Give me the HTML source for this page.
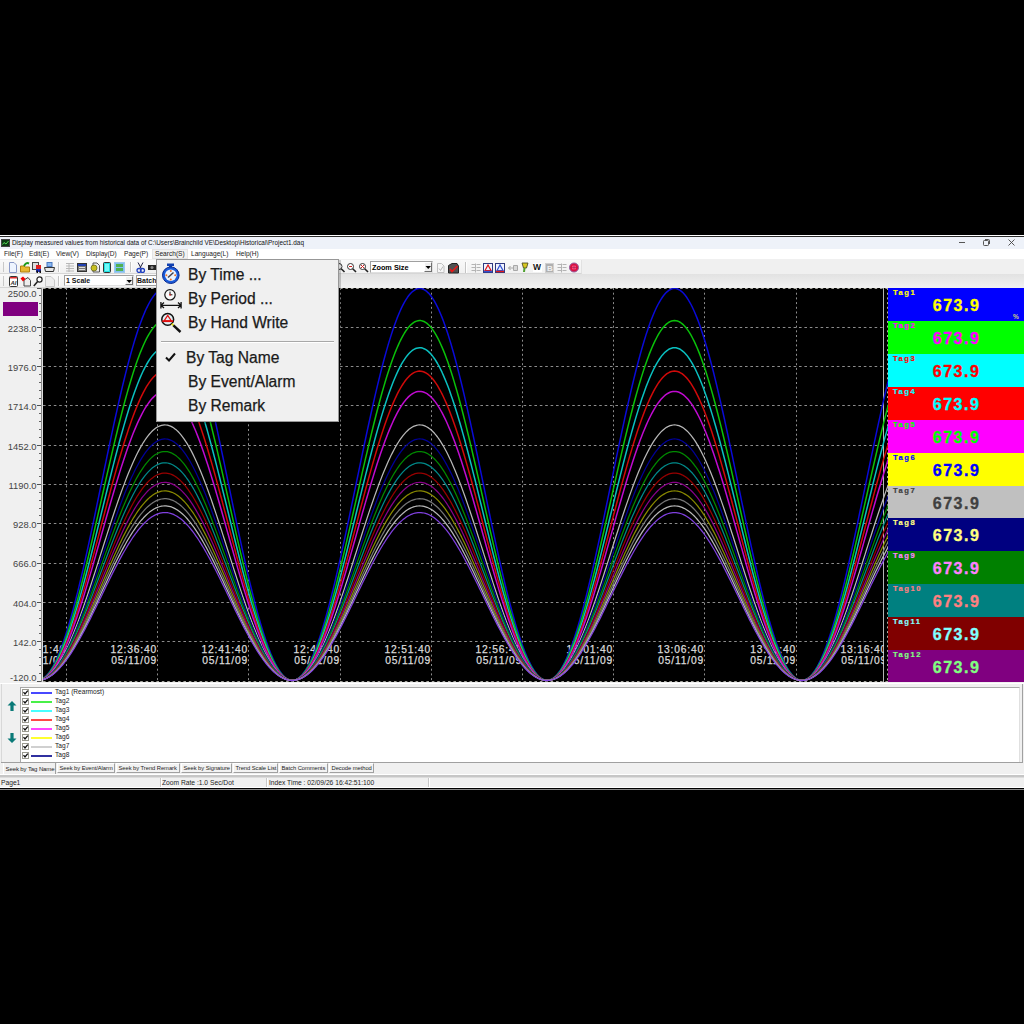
<!DOCTYPE html><html><head><meta charset="utf-8"><style>html,body{margin:0;padding:0}body{width:1024px;height:1024px;background:#000;position:relative;overflow:hidden;font-family:"Liberation Sans", sans-serif}</style></head><body><div style="position:absolute;left:0px;top:235px;width:1024px;height:1px;background:#fff"></div><div style="position:absolute;left:0px;top:236px;width:1024px;height:1px;background:#2a2a2a"></div><div style="position:absolute;left:0px;top:237px;width:1024px;height:12px;background:#eef2f9"></div><div style="position:absolute;left:0px;top:249px;width:1024px;height:10px;background:#fff"></div><div style="position:absolute;left:0px;top:259px;width:1024px;height:29px;background:#f0f0f0"></div><svg style="position:absolute;left:1px;top:239px" width="9" height="8"><rect x="0.5" y="0.5" width="8" height="7" fill="#0a3a12" stroke="#444"/><polyline points="1.5,5.5 3,3.5 5,5 7.5,2" fill="none" stroke="#6f6" stroke-width="0.8"/></svg><div style="position:absolute;left:12px;top:239.5px;font-size:6.4px;line-height:1;color:#111;white-space:nowrap;">Display measured values from historical data of C:\Users\Brainchild VE\Desktop\Historical\Project1.daq</div><div style="position:absolute;left:959px;top:242px;width:6px;height:1px;background:#555"></div><svg style="position:absolute;left:982px;top:238px" width="9" height="9"><rect x="1.5" y="2.5" width="5" height="5" rx="0.8" fill="none" stroke="#555" stroke-width="1"/><path d="M3 1.5 H6.5 Q7.5 1.5 7.5 2.5 V6" fill="none" stroke="#555" stroke-width="1"/></svg><svg style="position:absolute;left:1007px;top:238px" width="9" height="9"><path d="M1.5 1.5 L7.5 7.5 M7.5 1.5 L1.5 7.5" stroke="#444" stroke-width="0.9"/></svg><div style="position:absolute;left:152px;top:249px;width:36px;height:10px;background:#f2f2f2;box-sizing:border-box;border:1px solid #e4e4e4"></div><div style="position:absolute;left:4px;top:251px;font-size:6.6px;line-height:1;color:#222;white-space:nowrap;">File(F)</div><div style="position:absolute;left:29px;top:251px;font-size:6.6px;line-height:1;color:#222;white-space:nowrap;">Edit(E)</div><div style="position:absolute;left:56px;top:251px;font-size:6.6px;line-height:1;color:#222;white-space:nowrap;">View(V)</div><div style="position:absolute;left:86px;top:251px;font-size:6.6px;line-height:1;color:#222;white-space:nowrap;">Display(D)</div><div style="position:absolute;left:124px;top:251px;font-size:6.6px;line-height:1;color:#222;white-space:nowrap;">Page(P)</div><div style="position:absolute;left:155px;top:251px;font-size:6.6px;line-height:1;color:#222;white-space:nowrap;">Search(S)</div><div style="position:absolute;left:191px;top:251px;font-size:6.6px;line-height:1;color:#222;white-space:nowrap;">Language(L)</div><div style="position:absolute;left:236px;top:251px;font-size:6.6px;line-height:1;color:#222;white-space:nowrap;">Help(H)</div><div style="position:absolute;left:0px;top:288px;width:43px;height:395px;background:#f0f0f0"></div><div style="position:absolute;left:43px;top:288px;width:845px;height:394px;background:#000"></div><div style="position:absolute;left:884px;top:288px;width:4px;height:394px;background:#000"></div><svg style="position:absolute;left:0;top:0" width="1024" height="1024" viewBox="0 0 1024 1024"><defs><clipPath id="cc"><rect x="43" y="288" width="845" height="394"/></clipPath><clipPath id="ct"><rect x="43" y="288" width="841" height="394"/></clipPath></defs><line x1="43" y1="288.5" x2="888" y2="288.5" stroke="#a8a8a0" stroke-width="1" stroke-dasharray="2.6 2.8"/><line x1="43" y1="327.5" x2="884" y2="327.5" stroke="#8c8c8c" stroke-width="1" stroke-dasharray="2.6 2.8"/><line x1="43" y1="366.5" x2="884" y2="366.5" stroke="#8c8c8c" stroke-width="1" stroke-dasharray="2.6 2.8"/><line x1="43" y1="405.5" x2="884" y2="405.5" stroke="#8c8c8c" stroke-width="1" stroke-dasharray="2.6 2.8"/><line x1="43" y1="445.5" x2="884" y2="445.5" stroke="#8c8c8c" stroke-width="1" stroke-dasharray="2.6 2.8"/><line x1="43" y1="484.5" x2="884" y2="484.5" stroke="#8c8c8c" stroke-width="1" stroke-dasharray="2.6 2.8"/><line x1="43" y1="523.5" x2="884" y2="523.5" stroke="#8c8c8c" stroke-width="1" stroke-dasharray="2.6 2.8"/><line x1="43" y1="563.5" x2="884" y2="563.5" stroke="#8c8c8c" stroke-width="1" stroke-dasharray="2.6 2.8"/><line x1="43" y1="602.5" x2="884" y2="602.5" stroke="#8c8c8c" stroke-width="1" stroke-dasharray="2.6 2.8"/><line x1="43" y1="641.5" x2="884" y2="641.5" stroke="#8c8c8c" stroke-width="1" stroke-dasharray="2.6 2.8"/><line x1="43" y1="681.5" x2="888" y2="681.5" stroke="#a8a8a0" stroke-width="1" stroke-dasharray="2.6 2.8"/><line x1="66.5" y1="288" x2="66.5" y2="682" stroke="#8c8c8c" stroke-width="1" stroke-dasharray="2 2.7"/><line x1="157.5" y1="288" x2="157.5" y2="682" stroke="#8c8c8c" stroke-width="1" stroke-dasharray="2 2.7"/><line x1="248.5" y1="288" x2="248.5" y2="682" stroke="#8c8c8c" stroke-width="1" stroke-dasharray="2 2.7"/><line x1="340.5" y1="288" x2="340.5" y2="682" stroke="#8c8c8c" stroke-width="1" stroke-dasharray="2 2.7"/><line x1="431.5" y1="288" x2="431.5" y2="682" stroke="#8c8c8c" stroke-width="1" stroke-dasharray="2 2.7"/><line x1="522.5" y1="288" x2="522.5" y2="682" stroke="#8c8c8c" stroke-width="1" stroke-dasharray="2 2.7"/><line x1="613.5" y1="288" x2="613.5" y2="682" stroke="#8c8c8c" stroke-width="1" stroke-dasharray="2 2.7"/><line x1="704.5" y1="288" x2="704.5" y2="682" stroke="#8c8c8c" stroke-width="1" stroke-dasharray="2 2.7"/><line x1="796.5" y1="288" x2="796.5" y2="682" stroke="#8c8c8c" stroke-width="1" stroke-dasharray="2 2.7"/><line x1="887.5" y1="288" x2="887.5" y2="682" stroke="#b0b0a0" stroke-width="1" stroke-dasharray="2 2.7"/><line x1="883.5" y1="288" x2="883.5" y2="682" stroke="#b4b4b4" stroke-width="1"/><line x1="41.5" y1="288" x2="41.5" y2="682" stroke="#8a8a8a" stroke-width="1"/><line x1="42.5" y1="288" x2="42.5" y2="682" stroke="#e0e0e0" stroke-width="1"/><line x1="37" y1="288.5" x2="41" y2="288.5" stroke="#505050" stroke-width="1"/><line x1="39" y1="295.5" x2="41" y2="295.5" stroke="#606060" stroke-width="1"/><line x1="39" y1="303.5" x2="41" y2="303.5" stroke="#606060" stroke-width="1"/><line x1="39" y1="311.5" x2="41" y2="311.5" stroke="#606060" stroke-width="1"/><line x1="39" y1="319.5" x2="41" y2="319.5" stroke="#606060" stroke-width="1"/><line x1="37" y1="327.5" x2="41" y2="327.5" stroke="#505050" stroke-width="1"/><line x1="39" y1="335.5" x2="41" y2="335.5" stroke="#606060" stroke-width="1"/><line x1="39" y1="343.5" x2="41" y2="343.5" stroke="#606060" stroke-width="1"/><line x1="39" y1="350.5" x2="41" y2="350.5" stroke="#606060" stroke-width="1"/><line x1="39" y1="358.5" x2="41" y2="358.5" stroke="#606060" stroke-width="1"/><line x1="37" y1="366.5" x2="41" y2="366.5" stroke="#505050" stroke-width="1"/><line x1="39" y1="374.5" x2="41" y2="374.5" stroke="#606060" stroke-width="1"/><line x1="39" y1="382.5" x2="41" y2="382.5" stroke="#606060" stroke-width="1"/><line x1="39" y1="390.5" x2="41" y2="390.5" stroke="#606060" stroke-width="1"/><line x1="39" y1="398.5" x2="41" y2="398.5" stroke="#606060" stroke-width="1"/><line x1="37" y1="405.5" x2="41" y2="405.5" stroke="#505050" stroke-width="1"/><line x1="39" y1="413.5" x2="41" y2="413.5" stroke="#606060" stroke-width="1"/><line x1="39" y1="421.5" x2="41" y2="421.5" stroke="#606060" stroke-width="1"/><line x1="39" y1="429.5" x2="41" y2="429.5" stroke="#606060" stroke-width="1"/><line x1="39" y1="437.5" x2="41" y2="437.5" stroke="#606060" stroke-width="1"/><line x1="37" y1="445.5" x2="41" y2="445.5" stroke="#505050" stroke-width="1"/><line x1="39" y1="453.5" x2="41" y2="453.5" stroke="#606060" stroke-width="1"/><line x1="39" y1="460.5" x2="41" y2="460.5" stroke="#606060" stroke-width="1"/><line x1="39" y1="468.5" x2="41" y2="468.5" stroke="#606060" stroke-width="1"/><line x1="39" y1="476.5" x2="41" y2="476.5" stroke="#606060" stroke-width="1"/><line x1="37" y1="484.5" x2="41" y2="484.5" stroke="#505050" stroke-width="1"/><line x1="39" y1="492.5" x2="41" y2="492.5" stroke="#606060" stroke-width="1"/><line x1="39" y1="500.5" x2="41" y2="500.5" stroke="#606060" stroke-width="1"/><line x1="39" y1="508.5" x2="41" y2="508.5" stroke="#606060" stroke-width="1"/><line x1="39" y1="515.5" x2="41" y2="515.5" stroke="#606060" stroke-width="1"/><line x1="37" y1="523.5" x2="41" y2="523.5" stroke="#505050" stroke-width="1"/><line x1="39" y1="531.5" x2="41" y2="531.5" stroke="#606060" stroke-width="1"/><line x1="39" y1="539.5" x2="41" y2="539.5" stroke="#606060" stroke-width="1"/><line x1="39" y1="547.5" x2="41" y2="547.5" stroke="#606060" stroke-width="1"/><line x1="39" y1="555.5" x2="41" y2="555.5" stroke="#606060" stroke-width="1"/><line x1="37" y1="563.5" x2="41" y2="563.5" stroke="#505050" stroke-width="1"/><line x1="39" y1="570.5" x2="41" y2="570.5" stroke="#606060" stroke-width="1"/><line x1="39" y1="578.5" x2="41" y2="578.5" stroke="#606060" stroke-width="1"/><line x1="39" y1="586.5" x2="41" y2="586.5" stroke="#606060" stroke-width="1"/><line x1="39" y1="594.5" x2="41" y2="594.5" stroke="#606060" stroke-width="1"/><line x1="37" y1="602.5" x2="41" y2="602.5" stroke="#505050" stroke-width="1"/><line x1="39" y1="610.5" x2="41" y2="610.5" stroke="#606060" stroke-width="1"/><line x1="39" y1="618.5" x2="41" y2="618.5" stroke="#606060" stroke-width="1"/><line x1="39" y1="625.5" x2="41" y2="625.5" stroke="#606060" stroke-width="1"/><line x1="39" y1="633.5" x2="41" y2="633.5" stroke="#606060" stroke-width="1"/><line x1="37" y1="641.5" x2="41" y2="641.5" stroke="#505050" stroke-width="1"/><line x1="39" y1="649.5" x2="41" y2="649.5" stroke="#606060" stroke-width="1"/><line x1="39" y1="657.5" x2="41" y2="657.5" stroke="#606060" stroke-width="1"/><line x1="39" y1="665.5" x2="41" y2="665.5" stroke="#606060" stroke-width="1"/><line x1="39" y1="673.5" x2="41" y2="673.5" stroke="#606060" stroke-width="1"/><line x1="37" y1="681.5" x2="41" y2="681.5" stroke="#505050" stroke-width="1"/><g clip-path="url(#ct)" font-family="Liberation Sans, sans-serif" font-size="10.3" fill="#dcdcdc" stroke="#dcdcdc" stroke-width="0.25" text-anchor="end" letter-spacing="0.8"><text x="66" y="652.8">12:31:40</text><text x="66" y="663.5">05/11/09</text><text x="157" y="652.8">12:36:40</text><text x="157" y="663.5">05/11/09</text><text x="248" y="652.8">12:41:40</text><text x="248" y="663.5">05/11/09</text><text x="340" y="652.8">12:46:40</text><text x="340" y="663.5">05/11/09</text><text x="431" y="652.8">12:51:40</text><text x="431" y="663.5">05/11/09</text><text x="522" y="652.8">12:56:40</text><text x="522" y="663.5">05/11/09</text><text x="613" y="652.8">13:01:40</text><text x="613" y="663.5">05/11/09</text><text x="704" y="652.8">13:06:40</text><text x="704" y="663.5">05/11/09</text><text x="796" y="652.8">13:11:40</text><text x="796" y="663.5">05/11/09</text><text x="887" y="652.8">13:16:40</text><text x="887" y="663.5">05/11/09</text></g><g clip-path="url(#cc)" fill="none" stroke-width="1.6" stroke-linejoin="round"><polyline stroke="#0a0ad8" stroke-width="1.5" points="40.0,680.0 41.5,679.4 43.0,678.6 44.5,677.5 46.0,676.1 47.5,674.5 49.0,672.6 50.5,670.4 52.0,668.0 53.5,665.3 55.0,662.4 56.5,659.3 58.0,655.9 59.5,652.3 61.0,648.4 62.5,644.3 64.0,640.0 65.5,635.5 67.0,630.8 68.5,625.9 70.0,620.8 71.5,615.5 73.0,610.0 74.5,604.3 76.0,598.5 77.5,592.6 79.0,586.4 80.5,580.2 82.0,573.8 83.5,567.3 85.0,560.7 86.5,553.9 88.0,547.1 89.5,540.2 91.0,533.2 92.5,526.2 94.0,519.1 95.5,511.9 97.0,504.7 98.5,497.5 100.0,490.2 101.5,483.0 103.0,475.8 104.5,468.5 106.0,461.3 107.5,454.1 109.0,447.0 110.5,439.9 112.0,432.9 113.5,425.9 115.0,419.0 116.5,412.3 118.0,405.6 119.5,399.0 121.0,392.5 122.5,386.2 124.0,380.0 125.5,373.9 127.0,368.0 128.5,362.3 130.0,356.7 131.5,351.3 133.0,346.1 134.5,341.0 136.0,336.2 137.5,331.6 139.0,327.1 140.5,322.9 142.0,318.9 143.5,315.2 145.0,311.6 146.5,308.3 148.0,305.3 149.5,302.5 151.0,299.9 152.5,297.6 154.0,295.5 155.5,293.7 157.0,292.2 158.5,290.9 160.0,289.9 161.5,289.2 163.0,288.7 164.5,288.5 166.0,288.6 167.5,288.9 169.0,289.5 170.5,290.4 172.0,291.5 173.5,292.9 175.0,294.5 176.5,296.5 178.0,298.6 179.5,301.1 181.0,303.7 182.5,306.7 184.0,309.8 185.5,313.2 187.0,316.9 188.5,320.8 190.0,324.9 191.5,329.2 193.0,333.7 194.5,338.4 196.0,343.4 197.5,348.5 199.0,353.8 200.5,359.3 202.0,364.9 203.5,370.8 205.0,376.7 206.5,382.9 208.0,389.1 209.5,395.5 211.0,402.1 212.5,408.7 214.0,415.4 215.5,422.2 217.0,429.2 218.5,436.1 220.0,443.2 221.5,450.3 223.0,457.5 224.5,464.7 226.0,471.9 227.5,479.1 229.0,486.4 230.5,493.6 232.0,500.9 233.5,508.1 235.0,515.2 236.5,522.4 238.0,529.5 239.5,536.5 241.0,543.4 242.5,550.3 244.0,557.1 245.5,563.8 247.0,570.3 248.5,576.8 250.0,583.1 251.5,589.3 253.0,595.4 254.5,601.3 256.0,607.0 257.5,612.6 259.0,618.0 260.5,623.2 262.0,628.2 263.5,633.0 265.0,637.6 266.5,642.1 268.0,646.3 269.5,650.2 271.0,654.0 272.5,657.5 274.0,660.8 275.5,663.8 277.0,666.6 278.5,669.2 280.0,671.5 281.5,673.5 283.0,675.3 284.5,676.8 286.0,678.0 287.5,679.0 289.0,679.8 290.5,680.2 292.0,680.4 293.5,680.3 295.0,680.0 296.5,679.4 298.0,678.5 299.5,677.3 301.0,675.9 302.5,674.2 304.0,672.3 305.5,670.1 307.0,667.7 308.5,665.0 310.0,662.0 311.5,658.8 313.0,655.4 314.5,651.8 316.0,647.9 317.5,643.8 319.0,639.4 320.5,634.9 322.0,630.2 323.5,625.2 325.0,620.1 326.5,614.8 328.0,609.2 329.5,603.6 331.0,597.7 332.5,591.8 334.0,585.6 335.5,579.3 337.0,572.9 338.5,566.4 340.0,559.8 341.5,553.0 343.0,546.2 344.5,539.3 346.0,532.3 347.5,525.2 349.0,518.1 350.5,510.9 352.0,503.7 353.5,496.5 355.0,489.3 356.5,482.0 358.0,474.8 359.5,467.6 361.0,460.4 362.5,453.2 364.0,446.0 365.5,439.0 367.0,431.9 368.5,425.0 370.0,418.1 371.5,411.4 373.0,404.7 374.5,398.1 376.0,391.7 377.5,385.4 379.0,379.2 380.5,373.1 382.0,367.3 383.5,361.5 385.0,356.0 386.5,350.6 388.0,345.4 389.5,340.4 391.0,335.6 392.5,330.9 394.0,326.6 395.5,322.4 397.0,318.4 398.5,314.7 400.0,311.2 401.5,307.9 403.0,304.9 404.5,302.1 406.0,299.6 407.5,297.3 409.0,295.3 410.5,293.5 412.0,292.0 413.5,290.8 415.0,289.8 416.5,289.1 418.0,288.7 419.5,288.5 421.0,288.6 422.5,289.0 424.0,289.6 425.5,290.5 427.0,291.7 428.5,293.1 430.0,294.8 431.5,296.7 433.0,298.9 434.5,301.4 436.0,304.1 437.5,307.1 439.0,310.3 440.5,313.7 442.0,317.4 443.5,321.3 445.0,325.4 446.5,329.8 448.0,334.3 449.5,339.1 451.0,344.0 452.5,349.2 454.0,354.5 455.5,360.0 457.0,365.7 458.5,371.6 460.0,377.6 461.5,383.7 463.0,390.0 464.5,396.4 466.0,402.9 467.5,409.6 469.0,416.3 470.5,423.2 472.0,430.1 473.5,437.1 475.0,444.2 476.5,451.3 478.0,458.4 479.5,465.6 481.0,472.9 482.5,480.1 484.0,487.3 485.5,494.6 487.0,501.8 488.5,509.0 490.0,516.2 491.5,523.3 493.0,530.4 494.5,537.4 496.0,544.4 497.5,551.2 499.0,558.0 500.5,564.7 502.0,571.2 503.5,577.6 505.0,584.0 506.5,590.1 508.0,596.2 509.5,602.0 511.0,607.8 512.5,613.3 514.0,618.7 515.5,623.9 517.0,628.9 518.5,633.7 520.0,638.3 521.5,642.6 523.0,646.8 524.5,650.8 526.0,654.5 527.5,658.0 529.0,661.2 530.5,664.2 532.0,667.0 533.5,669.5 535.0,671.7 536.5,673.7 538.0,675.5 539.5,677.0 541.0,678.2 542.5,679.1 544.0,679.8 545.5,680.2 547.0,680.4 548.5,680.3 550.0,679.9 551.5,679.2 553.0,678.3 554.5,677.1 556.0,675.7 557.5,674.0 559.0,672.0 560.5,669.8 562.0,667.3 563.5,664.6 565.0,661.6 566.5,658.4 568.0,654.9 569.5,651.3 571.0,647.3 572.5,643.2 574.0,638.8 575.5,634.3 577.0,629.5 578.5,624.5 580.0,619.4 581.5,614.0 583.0,608.5 584.5,602.8 586.0,597.0 587.5,590.9 589.0,584.8 590.5,578.5 592.0,572.1 593.5,565.5 595.0,558.9 596.5,552.1 598.0,545.3 599.5,538.3 601.0,531.3 602.5,524.3 604.0,517.2 605.5,510.0 607.0,502.8 608.5,495.6 610.0,488.3 611.5,481.1 613.0,473.8 614.5,466.6 616.0,459.4 617.5,452.2 619.0,445.1 620.5,438.0 622.0,431.0 623.5,424.1 625.0,417.2 626.5,410.5 628.0,403.8 629.5,397.3 631.0,390.8 632.5,384.5 634.0,378.4 635.5,372.3 637.0,366.5 638.5,360.8 640.0,355.2 641.5,349.9 643.0,344.7 644.5,339.7 646.0,334.9 647.5,330.4 649.0,326.0 650.5,321.8 652.0,317.9 653.5,314.2 655.0,310.7 656.5,307.5 658.0,304.5 659.5,301.8 661.0,299.3 662.5,297.0 664.0,295.0 665.5,293.3 667.0,291.8 668.5,290.6 670.0,289.7 671.5,289.0 673.0,288.6 674.5,288.5 676.0,288.6 677.5,289.0 679.0,289.7 680.5,290.6 682.0,291.8 683.5,293.3 685.0,295.0 686.5,297.0 688.0,299.3 689.5,301.8 691.0,304.5 692.5,307.5 694.0,310.7 695.5,314.2 697.0,317.9 698.5,321.8 700.0,326.0 701.5,330.4 703.0,334.9 704.5,339.7 706.0,344.7 707.5,349.9 709.0,355.2 710.5,360.8 712.0,366.5 713.5,372.3 715.0,378.4 716.5,384.5 718.0,390.8 719.5,397.3 721.0,403.8 722.5,410.5 724.0,417.2 725.5,424.1 727.0,431.0 728.5,438.0 730.0,445.1 731.5,452.2 733.0,459.4 734.5,466.6 736.0,473.8 737.5,481.1 739.0,488.3 740.5,495.6 742.0,502.8 743.5,510.0 745.0,517.2 746.5,524.3 748.0,531.3 749.5,538.3 751.0,545.3 752.5,552.1 754.0,558.9 755.5,565.5 757.0,572.1 758.5,578.5 760.0,584.8 761.5,590.9 763.0,597.0 764.5,602.8 766.0,608.5 767.5,614.0 769.0,619.4 770.5,624.5 772.0,629.5 773.5,634.3 775.0,638.8 776.5,643.2 778.0,647.3 779.5,651.3 781.0,654.9 782.5,658.4 784.0,661.6 785.5,664.6 787.0,667.3 788.5,669.8 790.0,672.0 791.5,674.0 793.0,675.7 794.5,677.1 796.0,678.3 797.5,679.2 799.0,679.9 800.5,680.3 802.0,680.4 803.5,680.2 805.0,679.8 806.5,679.1 808.0,678.2 809.5,677.0 811.0,675.5 812.5,673.7 814.0,671.7 815.5,669.5 817.0,667.0 818.5,664.2 820.0,661.2 821.5,658.0 823.0,654.5 824.5,650.8 826.0,646.8 827.5,642.6 829.0,638.3 830.5,633.7 832.0,628.9 833.5,623.9 835.0,618.7 836.5,613.3 838.0,607.8 839.5,602.0 841.0,596.2 842.5,590.1 844.0,584.0 845.5,577.6 847.0,571.2 848.5,564.7 850.0,558.0 851.5,551.2 853.0,544.4 854.5,537.4 856.0,530.4 857.5,523.3 859.0,516.2 860.5,509.0 862.0,501.8 863.5,494.6 865.0,487.3 866.5,480.1 868.0,472.9 869.5,465.6 871.0,458.4 872.5,451.3 874.0,444.2 875.5,437.1 877.0,430.1 878.5,423.2 880.0,416.3 881.5,409.6 883.0,402.9 884.5,396.4 886.0,390.0 887.5,383.7 889.0,377.6"/><polyline stroke="#0ac00a" stroke-width="1.5" points="40.0,680.1 41.5,679.5 43.0,678.7 44.5,677.7 46.0,676.5 47.5,675.0 49.0,673.2 50.5,671.2 52.0,669.0 53.5,666.6 55.0,663.9 56.5,661.0 58.0,657.9 59.5,654.6 61.0,651.0 62.5,647.3 64.0,643.3 65.5,639.2 67.0,634.9 68.5,630.3 70.0,625.6 71.5,620.8 73.0,615.7 74.5,610.6 76.0,605.2 77.5,599.7 79.0,594.1 80.5,588.4 82.0,582.5 83.5,576.5 85.0,570.4 86.5,564.3 88.0,558.0 89.5,551.7 91.0,545.2 92.5,538.8 94.0,532.2 95.5,525.7 97.0,519.1 98.5,512.4 100.0,505.8 101.5,499.1 103.0,492.5 104.5,485.8 106.0,479.2 107.5,472.6 109.0,466.1 110.5,459.6 112.0,453.1 113.5,446.7 115.0,440.4 116.5,434.2 118.0,428.0 119.5,422.0 121.0,416.1 122.5,410.2 124.0,404.5 125.5,399.0 127.0,393.6 128.5,388.3 130.0,383.2 131.5,378.2 133.0,373.4 134.5,368.8 136.0,364.3 137.5,360.1 139.0,356.0 140.5,352.1 142.0,348.5 143.5,345.0 145.0,341.8 146.5,338.7 148.0,335.9 149.5,333.3 151.0,331.0 152.5,328.9 154.0,327.0 155.5,325.3 157.0,323.9 158.5,322.8 160.0,321.8 161.5,321.2 163.0,320.7 164.5,320.5 166.0,320.6 167.5,320.9 169.0,321.4 170.5,322.2 172.0,323.3 173.5,324.6 175.0,326.1 176.5,327.8 178.0,329.8 179.5,332.1 181.0,334.5 182.5,337.2 184.0,340.1 185.5,343.2 187.0,346.6 188.5,350.1 190.0,353.9 191.5,357.9 193.0,362.0 194.5,366.4 196.0,370.9 197.5,375.6 199.0,380.5 200.5,385.5 202.0,390.7 203.5,396.1 205.0,401.6 206.5,407.2 208.0,412.9 209.5,418.8 211.0,424.8 212.5,430.9 214.0,437.1 215.5,443.3 217.0,449.7 218.5,456.1 220.0,462.6 221.5,469.1 223.0,475.7 224.5,482.3 226.0,488.9 227.5,495.6 229.0,502.2 230.5,508.9 232.0,515.5 233.5,522.2 235.0,528.7 236.5,535.3 238.0,541.8 239.5,548.2 241.0,554.6 242.5,560.9 244.0,567.2 245.5,573.3 247.0,579.3 248.5,585.3 250.0,591.1 251.5,596.8 253.0,602.3 254.5,607.7 256.0,613.0 257.5,618.1 259.0,623.1 260.5,627.9 262.0,632.5 263.5,636.9 265.0,641.1 266.5,645.2 268.0,649.1 269.5,652.7 271.0,656.1 272.5,659.4 274.0,662.4 275.5,665.2 277.0,667.7 278.5,670.1 280.0,672.2 281.5,674.1 283.0,675.7 284.5,677.1 286.0,678.2 287.5,679.1 289.0,679.8 290.5,680.2 292.0,680.4 293.5,680.3 295.0,680.0 296.5,679.4 298.0,678.6 299.5,677.6 301.0,676.3 302.5,674.7 304.0,673.0 305.5,671.0 307.0,668.7 308.5,666.2 310.0,663.5 311.5,660.6 313.0,657.5 314.5,654.1 316.0,650.5 317.5,646.8 319.0,642.8 320.5,638.6 322.0,634.3 323.5,629.7 325.0,625.0 326.5,620.1 328.0,615.1 329.5,609.9 331.0,604.5 332.5,599.0 334.0,593.4 335.5,587.6 337.0,581.7 338.5,575.7 340.0,569.6 341.5,563.4 343.0,557.2 344.5,550.8 346.0,544.4 347.5,537.9 349.0,531.4 350.5,524.8 352.0,518.2 353.5,511.5 355.0,504.9 356.5,498.2 358.0,491.6 359.5,485.0 361.0,478.3 362.5,471.7 364.0,465.2 365.5,458.7 367.0,452.3 368.5,445.9 370.0,439.6 371.5,433.4 373.0,427.2 374.5,421.2 376.0,415.3 377.5,409.5 379.0,403.8 380.5,398.2 382.0,392.8 383.5,387.6 385.0,382.5 386.5,377.5 388.0,372.8 389.5,368.2 391.0,363.7 392.5,359.5 394.0,355.5 395.5,351.6 397.0,348.0 398.5,344.6 400.0,341.3 401.5,338.3 403.0,335.6 404.5,333.0 406.0,330.7 407.5,328.6 409.0,326.8 410.5,325.1 412.0,323.8 413.5,322.6 415.0,321.7 416.5,321.1 418.0,320.7 419.5,320.5 421.0,320.6 422.5,321.0 424.0,321.5 425.5,322.4 427.0,323.4 428.5,324.7 430.0,326.3 431.5,328.1 433.0,330.1 434.5,332.4 436.0,334.9 437.5,337.6 439.0,340.5 440.5,343.7 442.0,347.1 443.5,350.6 445.0,354.4 446.5,358.4 448.0,362.6 449.5,367.0 451.0,371.5 452.5,376.2 454.0,381.1 455.5,386.2 457.0,391.4 458.5,396.8 460.0,402.3 461.5,407.9 463.0,413.7 464.5,419.6 466.0,425.6 467.5,431.7 469.0,437.9 470.5,444.2 472.0,450.5 473.5,457.0 475.0,463.5 476.5,470.0 478.0,476.6 479.5,483.2 481.0,489.8 482.5,496.5 484.0,503.1 485.5,509.8 487.0,516.4 488.5,523.0 490.0,529.6 491.5,536.2 493.0,542.7 494.5,549.1 496.0,555.5 497.5,561.8 499.0,568.0 500.5,574.1 502.0,580.1 503.5,586.0 505.0,591.8 506.5,597.5 508.0,603.0 509.5,608.4 511.0,613.7 512.5,618.8 514.0,623.7 515.5,628.5 517.0,633.1 518.5,637.5 520.0,641.7 521.5,645.7 523.0,649.5 524.5,653.2 526.0,656.6 527.5,659.8 529.0,662.8 530.5,665.5 532.0,668.1 533.5,670.4 535.0,672.4 536.5,674.3 538.0,675.9 539.5,677.2 541.0,678.4 542.5,679.2 544.0,679.9 545.5,680.3 547.0,680.4 548.5,680.3 550.0,679.9 551.5,679.3 553.0,678.5 554.5,677.4 556.0,676.1 557.5,674.5 559.0,672.7 560.5,670.7 562.0,668.4 563.5,665.9 565.0,663.2 566.5,660.2 568.0,657.0 569.5,653.6 571.0,650.0 572.5,646.2 574.0,642.2 575.5,638.0 577.0,633.7 578.5,629.1 580.0,624.4 581.5,619.5 583.0,614.4 584.5,609.1 586.0,603.8 587.5,598.3 589.0,592.6 590.5,586.8 592.0,580.9 593.5,574.9 595.0,568.8 596.5,562.6 598.0,556.3 599.5,550.0 601.0,543.5 602.5,537.0 604.0,530.5 605.5,523.9 607.0,517.3 608.5,510.7 610.0,504.0 611.5,497.4 613.0,490.7 614.5,484.1 616.0,477.5 617.5,470.9 619.0,464.3 620.5,457.8 622.0,451.4 623.5,445.0 625.0,438.7 626.5,432.5 628.0,426.4 629.5,420.4 631.0,414.5 632.5,408.7 634.0,403.0 635.5,397.5 637.0,392.1 638.5,386.9 640.0,381.8 641.5,376.9 643.0,372.1 644.5,367.6 646.0,363.2 647.5,359.0 649.0,354.9 650.5,351.1 652.0,347.5 653.5,344.1 655.0,340.9 656.5,338.0 658.0,335.2 659.5,332.7 661.0,330.4 662.5,328.3 664.0,326.5 665.5,324.9 667.0,323.6 668.5,322.5 670.0,321.6 671.5,321.0 673.0,320.7 674.5,320.5 676.0,320.7 677.5,321.0 679.0,321.6 680.5,322.5 682.0,323.6 683.5,324.9 685.0,326.5 686.5,328.3 688.0,330.4 689.5,332.7 691.0,335.2 692.5,338.0 694.0,340.9 695.5,344.1 697.0,347.5 698.5,351.1 700.0,354.9 701.5,359.0 703.0,363.2 704.5,367.6 706.0,372.1 707.5,376.9 709.0,381.8 710.5,386.9 712.0,392.1 713.5,397.5 715.0,403.0 716.5,408.7 718.0,414.5 719.5,420.4 721.0,426.4 722.5,432.5 724.0,438.7 725.5,445.0 727.0,451.4 728.5,457.8 730.0,464.3 731.5,470.9 733.0,477.5 734.5,484.1 736.0,490.7 737.5,497.4 739.0,504.0 740.5,510.7 742.0,517.3 743.5,523.9 745.0,530.5 746.5,537.0 748.0,543.5 749.5,550.0 751.0,556.3 752.5,562.6 754.0,568.8 755.5,574.9 757.0,580.9 758.5,586.8 760.0,592.6 761.5,598.3 763.0,603.8 764.5,609.1 766.0,614.4 767.5,619.5 769.0,624.4 770.5,629.1 772.0,633.7 773.5,638.0 775.0,642.2 776.5,646.2 778.0,650.0 779.5,653.6 781.0,657.0 782.5,660.2 784.0,663.2 785.5,665.9 787.0,668.4 788.5,670.7 790.0,672.7 791.5,674.5 793.0,676.1 794.5,677.4 796.0,678.5 797.5,679.3 799.0,679.9 800.5,680.3 802.0,680.4 803.5,680.3 805.0,679.9 806.5,679.2 808.0,678.4 809.5,677.2 811.0,675.9 812.5,674.3 814.0,672.4 815.5,670.4 817.0,668.1 818.5,665.5 820.0,662.8 821.5,659.8 823.0,656.6 824.5,653.2 826.0,649.5 827.5,645.7 829.0,641.7 830.5,637.5 832.0,633.1 833.5,628.5 835.0,623.7 836.5,618.8 838.0,613.7 839.5,608.4 841.0,603.0 842.5,597.5 844.0,591.8 845.5,586.0 847.0,580.1 848.5,574.1 850.0,568.0 851.5,561.8 853.0,555.5 854.5,549.1 856.0,542.7 857.5,536.2 859.0,529.6 860.5,523.0 862.0,516.4 863.5,509.8 865.0,503.1 866.5,496.5 868.0,489.8 869.5,483.2 871.0,476.6 872.5,470.0 874.0,463.5 875.5,457.0 877.0,450.5 878.5,444.2 880.0,437.9 881.5,431.7 883.0,425.6 884.5,419.6 886.0,413.7 887.5,407.9 889.0,402.3"/><polyline stroke="#0ac0c0" stroke-width="1.5" points="40.0,680.1 41.5,679.6 43.0,678.9 44.5,677.9 46.0,676.8 47.5,675.4 49.0,673.8 50.5,671.9 52.0,669.9 53.5,667.6 55.0,665.2 56.5,662.5 58.0,659.6 59.5,656.5 61.0,653.2 62.5,649.8 64.0,646.1 65.5,642.3 67.0,638.3 68.5,634.1 70.0,629.8 71.5,625.3 73.0,620.6 74.5,615.8 76.0,610.9 77.5,605.8 79.0,600.6 80.5,595.3 82.0,589.9 83.5,584.4 85.0,578.8 86.5,573.0 88.0,567.3 89.5,561.4 91.0,555.5 92.5,549.5 94.0,543.4 95.5,537.4 97.0,531.3 98.5,525.1 100.0,519.0 101.5,512.8 103.0,506.7 104.5,500.5 106.0,494.4 107.5,488.3 109.0,482.3 110.5,476.2 112.0,470.3 113.5,464.4 115.0,458.5 116.5,452.8 118.0,447.1 119.5,441.5 121.0,436.0 122.5,430.7 124.0,425.4 125.5,420.2 127.0,415.2 128.5,410.3 130.0,405.6 131.5,401.0 133.0,396.6 134.5,392.3 136.0,388.2 137.5,384.3 139.0,380.5 140.5,376.9 142.0,373.5 143.5,370.3 145.0,367.3 146.5,364.5 148.0,362.0 149.5,359.6 151.0,357.4 152.5,355.4 154.0,353.7 155.5,352.2 157.0,350.9 158.5,349.8 160.0,348.9 161.5,348.3 163.0,347.9 164.5,347.7 166.0,347.8 167.5,348.1 169.0,348.6 170.5,349.3 172.0,350.3 173.5,351.4 175.0,352.8 176.5,354.5 178.0,356.3 179.5,358.4 181.0,360.7 182.5,363.1 184.0,365.8 185.5,368.7 187.0,371.8 188.5,375.1 190.0,378.6 191.5,382.2 193.0,386.1 194.5,390.1 196.0,394.3 197.5,398.6 199.0,403.1 200.5,407.8 202.0,412.6 203.5,417.6 205.0,422.6 206.5,427.8 208.0,433.1 209.5,438.6 211.0,444.1 212.5,449.7 214.0,455.5 215.5,461.3 217.0,467.1 218.5,473.1 220.0,479.0 221.5,485.1 223.0,491.2 224.5,497.3 226.0,503.4 227.5,509.5 229.0,515.7 230.5,521.8 232.0,528.0 233.5,534.1 235.0,540.2 236.5,546.3 238.0,552.3 239.5,558.2 241.0,564.1 242.5,570.0 244.0,575.7 245.5,581.4 247.0,587.0 248.5,592.4 250.0,597.8 251.5,603.1 253.0,608.2 254.5,613.2 256.0,618.1 257.5,622.8 259.0,627.4 260.5,631.8 262.0,636.1 263.5,640.2 265.0,644.1 266.5,647.9 268.0,651.4 269.5,654.8 271.0,658.0 272.5,661.0 274.0,663.7 275.5,666.3 277.0,668.7 278.5,670.9 280.0,672.8 281.5,674.5 283.0,676.0 284.5,677.3 286.0,678.4 287.5,679.2 289.0,679.8 290.5,680.2 292.0,680.4 293.5,680.3 295.0,680.0 296.5,679.5 298.0,678.8 299.5,677.8 301.0,676.6 302.5,675.2 304.0,673.5 305.5,671.7 307.0,669.6 308.5,667.3 310.0,664.8 311.5,662.1 313.0,659.2 314.5,656.1 316.0,652.8 317.5,649.3 319.0,645.6 320.5,641.8 322.0,637.7 323.5,633.5 325.0,629.2 326.5,624.7 328.0,620.0 329.5,615.2 331.0,610.2 332.5,605.1 334.0,599.9 335.5,594.6 337.0,589.2 338.5,583.6 340.0,578.0 341.5,572.3 343.0,566.5 344.5,560.6 346.0,554.7 347.5,548.7 349.0,542.6 350.5,536.5 352.0,530.4 353.5,524.3 355.0,518.2 356.5,512.0 358.0,505.9 359.5,499.7 361.0,493.6 362.5,487.5 364.0,481.5 365.5,475.4 367.0,469.5 368.5,463.6 370.0,457.8 371.5,452.0 373.0,446.4 374.5,440.8 376.0,435.3 377.5,429.9 379.0,424.7 380.5,419.6 382.0,414.6 383.5,409.7 385.0,405.0 386.5,400.4 388.0,396.0 389.5,391.8 391.0,387.7 392.5,383.8 394.0,380.0 395.5,376.5 397.0,373.1 398.5,369.9 400.0,367.0 401.5,364.2 403.0,361.6 404.5,359.3 406.0,357.1 407.5,355.2 409.0,353.5 410.5,352.0 412.0,350.7 413.5,349.7 415.0,348.8 416.5,348.2 418.0,347.9 419.5,347.7 421.0,347.8 422.5,348.1 424.0,348.7 425.5,349.4 427.0,350.4 428.5,351.6 430.0,353.1 431.5,354.7 433.0,356.6 434.5,358.7 436.0,361.0 437.5,363.5 439.0,366.2 440.5,369.1 442.0,372.2 443.5,375.6 445.0,379.1 446.5,382.7 448.0,386.6 449.5,390.6 451.0,394.9 452.5,399.2 454.0,403.8 455.5,408.4 457.0,413.3 458.5,418.2 460.0,423.3 461.5,428.5 463.0,433.9 464.5,439.3 466.0,444.9 467.5,450.5 469.0,456.2 470.5,462.0 472.0,467.9 473.5,473.9 475.0,479.8 476.5,485.9 478.0,492.0 479.5,498.1 481.0,504.2 482.5,510.4 484.0,516.5 485.5,522.7 487.0,528.8 488.5,534.9 490.0,541.0 491.5,547.1 493.0,553.1 494.5,559.0 496.0,564.9 497.5,570.7 499.0,576.5 500.5,582.1 502.0,587.7 503.5,593.2 505.0,598.5 506.5,603.8 508.0,608.9 509.5,613.9 511.0,618.7 512.5,623.4 514.0,628.0 515.5,632.4 517.0,636.6 518.5,640.7 520.0,644.6 521.5,648.3 523.0,651.9 524.5,655.2 526.0,658.4 527.5,661.3 529.0,664.1 530.5,666.7 532.0,669.0 533.5,671.1 535.0,673.1 536.5,674.7 538.0,676.2 539.5,677.5 541.0,678.5 542.5,679.3 544.0,679.9 545.5,680.3 547.0,680.4 548.5,680.3 550.0,680.0 551.5,679.4 553.0,678.6 554.5,677.6 556.0,676.4 557.5,675.0 559.0,673.3 560.5,671.4 562.0,669.3 563.5,667.0 565.0,664.5 566.5,661.7 568.0,658.8 569.5,655.7 571.0,652.3 572.5,648.8 574.0,645.1 575.5,641.2 577.0,637.2 578.5,633.0 580.0,628.6 581.5,624.1 583.0,619.4 584.5,614.5 586.0,609.6 587.5,604.5 589.0,599.2 590.5,593.9 592.0,588.4 593.5,582.9 595.0,577.2 596.5,571.5 598.0,565.7 599.5,559.8 601.0,553.9 602.5,547.9 604.0,541.8 605.5,535.7 607.0,529.6 608.5,523.5 610.0,517.3 611.5,511.2 613.0,505.0 614.5,498.9 616.0,492.8 617.5,486.7 619.0,480.7 620.5,474.6 622.0,468.7 623.5,462.8 625.0,457.0 626.5,451.3 628.0,445.6 629.5,440.0 631.0,434.6 632.5,429.2 634.0,424.0 635.5,418.9 637.0,413.9 638.5,409.1 640.0,404.4 641.5,399.8 643.0,395.4 644.5,391.2 646.0,387.1 647.5,383.2 649.0,379.5 650.5,376.0 652.0,372.7 653.5,369.5 655.0,366.6 656.5,363.8 658.0,361.3 659.5,359.0 661.0,356.8 662.5,354.9 664.0,353.3 665.5,351.8 667.0,350.6 668.5,349.5 670.0,348.7 671.5,348.2 673.0,347.8 674.5,347.7 676.0,347.8 677.5,348.2 679.0,348.7 680.5,349.5 682.0,350.6 683.5,351.8 685.0,353.3 686.5,354.9 688.0,356.8 689.5,359.0 691.0,361.3 692.5,363.8 694.0,366.6 695.5,369.5 697.0,372.7 698.5,376.0 700.0,379.5 701.5,383.2 703.0,387.1 704.5,391.2 706.0,395.4 707.5,399.8 709.0,404.4 710.5,409.1 712.0,413.9 713.5,418.9 715.0,424.0 716.5,429.2 718.0,434.6 719.5,440.0 721.0,445.6 722.5,451.3 724.0,457.0 725.5,462.8 727.0,468.7 728.5,474.6 730.0,480.7 731.5,486.7 733.0,492.8 734.5,498.9 736.0,505.0 737.5,511.2 739.0,517.3 740.5,523.5 742.0,529.6 743.5,535.7 745.0,541.8 746.5,547.9 748.0,553.9 749.5,559.8 751.0,565.7 752.5,571.5 754.0,577.2 755.5,582.9 757.0,588.4 758.5,593.9 760.0,599.2 761.5,604.5 763.0,609.6 764.5,614.5 766.0,619.4 767.5,624.1 769.0,628.6 770.5,633.0 772.0,637.2 773.5,641.2 775.0,645.1 776.5,648.8 778.0,652.3 779.5,655.7 781.0,658.8 782.5,661.7 784.0,664.5 785.5,667.0 787.0,669.3 788.5,671.4 790.0,673.3 791.5,675.0 793.0,676.4 794.5,677.6 796.0,678.6 797.5,679.4 799.0,680.0 800.5,680.3 802.0,680.4 803.5,680.3 805.0,679.9 806.5,679.3 808.0,678.5 809.5,677.5 811.0,676.2 812.5,674.7 814.0,673.1 815.5,671.1 817.0,669.0 818.5,666.7 820.0,664.1 821.5,661.3 823.0,658.4 824.5,655.2 826.0,651.9 827.5,648.3 829.0,644.6 830.5,640.7 832.0,636.6 833.5,632.4 835.0,628.0 836.5,623.4 838.0,618.7 839.5,613.9 841.0,608.9 842.5,603.8 844.0,598.5 845.5,593.2 847.0,587.7 848.5,582.1 850.0,576.5 851.5,570.7 853.0,564.9 854.5,559.0 856.0,553.1 857.5,547.1 859.0,541.0 860.5,534.9 862.0,528.8 863.5,522.7 865.0,516.5 866.5,510.4 868.0,504.2 869.5,498.1 871.0,492.0 872.5,485.9 874.0,479.8 875.5,473.9 877.0,467.9 878.5,462.0 880.0,456.2 881.5,450.5 883.0,444.9 884.5,439.3 886.0,433.9 887.5,428.5 889.0,423.3"/><polyline stroke="#d00a0a" stroke-width="1.5" points="40.0,680.1 41.5,679.6 43.0,679.0 44.5,678.1 46.0,677.0 47.5,675.7 49.0,674.2 50.5,672.5 52.0,670.6 53.5,668.5 55.0,666.2 56.5,663.7 58.0,661.1 59.5,658.2 61.0,655.2 62.5,651.9 64.0,648.5 65.5,645.0 67.0,641.3 68.5,637.4 70.0,633.3 71.5,629.2 73.0,624.8 74.5,620.4 76.0,615.8 77.5,611.1 79.0,606.2 80.5,601.3 82.0,596.3 83.5,591.1 85.0,585.9 86.5,580.6 88.0,575.2 89.5,569.7 91.0,564.2 92.5,558.7 94.0,553.1 95.5,547.4 97.0,541.7 98.5,536.0 100.0,530.3 101.5,524.6 103.0,518.9 104.5,513.2 106.0,507.5 107.5,501.8 109.0,496.2 110.5,490.6 112.0,485.0 113.5,479.6 115.0,474.1 116.5,468.8 118.0,463.5 119.5,458.3 121.0,453.2 122.5,448.2 124.0,443.3 125.5,438.5 127.0,433.9 128.5,429.3 130.0,424.9 131.5,420.6 133.0,416.5 134.5,412.5 136.0,408.7 137.5,405.1 139.0,401.6 140.5,398.2 142.0,395.1 143.5,392.1 145.0,389.3 146.5,386.7 148.0,384.3 149.5,382.1 151.0,380.1 152.5,378.3 154.0,376.6 155.5,375.2 157.0,374.0 158.5,373.0 160.0,372.2 161.5,371.6 163.0,371.3 164.5,371.1 166.0,371.1 167.5,371.4 169.0,371.9 170.5,372.6 172.0,373.5 173.5,374.6 175.0,375.9 176.5,377.4 178.0,379.1 179.5,381.0 181.0,383.1 182.5,385.4 184.0,387.9 185.5,390.6 187.0,393.5 188.5,396.5 190.0,399.8 191.5,403.2 193.0,406.8 194.5,410.5 196.0,414.4 197.5,418.4 199.0,422.6 200.5,427.0 202.0,431.4 203.5,436.0 205.0,440.7 206.5,445.6 208.0,450.5 209.5,455.6 211.0,460.7 212.5,465.9 214.0,471.3 215.5,476.6 217.0,482.1 218.5,487.6 220.0,493.2 221.5,498.8 223.0,504.5 224.5,510.1 226.0,515.8 227.5,521.5 229.0,527.3 230.5,533.0 232.0,538.7 233.5,544.4 235.0,550.0 236.5,555.7 238.0,561.3 239.5,566.8 241.0,572.3 242.5,577.7 244.0,583.1 245.5,588.3 247.0,593.5 248.5,598.6 250.0,603.6 251.5,608.5 253.0,613.3 254.5,617.9 256.0,622.5 257.5,626.9 259.0,631.1 260.5,635.2 262.0,639.2 263.5,643.0 265.0,646.7 266.5,650.1 268.0,653.5 269.5,656.6 271.0,659.6 272.5,662.3 274.0,664.9 275.5,667.3 277.0,669.5 278.5,671.5 280.0,673.3 281.5,674.9 283.0,676.4 284.5,677.5 286.0,678.5 287.5,679.3 289.0,679.9 290.5,680.2 292.0,680.4 293.5,680.3 295.0,680.1 296.5,679.6 298.0,678.9 299.5,678.0 301.0,676.9 302.5,675.5 304.0,674.0 305.5,672.3 307.0,670.3 308.5,668.2 310.0,665.9 311.5,663.4 313.0,660.7 314.5,657.8 316.0,654.7 317.5,651.5 319.0,648.1 320.5,644.5 322.0,640.7 323.5,636.8 325.0,632.8 326.5,628.6 328.0,624.2 329.5,619.8 331.0,615.2 332.5,610.4 334.0,605.6 335.5,600.6 337.0,595.6 338.5,590.4 340.0,585.2 341.5,579.9 343.0,574.5 344.5,569.0 346.0,563.5 347.5,557.9 349.0,552.3 350.5,546.7 352.0,541.0 353.5,535.3 355.0,529.6 356.5,523.8 358.0,518.1 359.5,512.4 361.0,506.7 362.5,501.1 364.0,495.4 365.5,489.8 367.0,484.3 368.5,478.8 370.0,473.4 371.5,468.1 373.0,462.8 374.5,457.6 376.0,452.5 377.5,447.5 379.0,442.7 380.5,437.9 382.0,433.2 383.5,428.7 385.0,424.3 386.5,420.1 388.0,416.0 389.5,412.0 391.0,408.2 392.5,404.6 394.0,401.1 395.5,397.8 397.0,394.7 398.5,391.7 400.0,389.0 401.5,386.4 403.0,384.0 404.5,381.8 406.0,379.8 407.5,378.0 409.0,376.4 410.5,375.0 412.0,373.9 413.5,372.9 415.0,372.1 416.5,371.6 418.0,371.2 419.5,371.1 421.0,371.2 422.5,371.5 424.0,372.0 425.5,372.7 427.0,373.6 428.5,374.7 430.0,376.0 431.5,377.6 433.0,379.3 434.5,381.3 436.0,383.4 437.5,385.7 439.0,388.3 440.5,391.0 442.0,393.9 443.5,397.0 445.0,400.2 446.5,403.6 448.0,407.2 449.5,411.0 451.0,414.9 452.5,419.0 454.0,423.2 455.5,427.5 457.0,432.0 458.5,436.6 460.0,441.4 461.5,446.2 463.0,451.2 464.5,456.2 466.0,461.4 467.5,466.6 469.0,472.0 470.5,477.4 472.0,482.8 473.5,488.4 475.0,493.9 476.5,499.6 478.0,505.2 479.5,510.9 481.0,516.6 482.5,522.3 484.0,528.0 485.5,533.7 487.0,539.5 488.5,545.1 490.0,550.8 491.5,556.4 493.0,562.0 494.5,567.5 496.0,573.0 497.5,578.4 499.0,583.8 500.5,589.0 502.0,594.2 503.5,599.3 505.0,604.3 506.5,609.2 508.0,613.9 509.5,618.6 511.0,623.1 512.5,627.4 514.0,631.7 515.5,635.8 517.0,639.7 518.5,643.5 520.0,647.1 521.5,650.6 523.0,653.9 524.5,657.0 526.0,659.9 527.5,662.7 529.0,665.2 530.5,667.6 532.0,669.8 533.5,671.8 535.0,673.6 536.5,675.1 538.0,676.5 539.5,677.7 541.0,678.7 542.5,679.4 544.0,679.9 545.5,680.3 547.0,680.4 548.5,680.3 550.0,680.0 551.5,679.5 553.0,678.8 554.5,677.8 556.0,676.7 557.5,675.3 559.0,673.8 560.5,672.0 562.0,670.1 563.5,667.9 565.0,665.6 566.5,663.0 568.0,660.3 569.5,657.4 571.0,654.3 572.5,651.0 574.0,647.6 575.5,644.0 577.0,640.2 578.5,636.3 580.0,632.2 581.5,628.0 583.0,623.7 584.5,619.2 586.0,614.5 587.5,609.8 589.0,604.9 590.5,600.0 592.0,594.9 593.5,589.7 595.0,584.5 596.5,579.2 598.0,573.8 599.5,568.3 601.0,562.8 602.5,557.2 604.0,551.6 605.5,545.9 607.0,540.2 608.5,534.5 610.0,528.8 611.5,523.1 613.0,517.4 614.5,511.7 616.0,506.0 617.5,500.3 619.0,494.7 620.5,489.1 622.0,483.6 623.5,478.1 625.0,472.7 626.5,467.4 628.0,462.1 629.5,456.9 631.0,451.9 632.5,446.9 634.0,442.0 635.5,437.3 637.0,432.6 638.5,428.1 640.0,423.8 641.5,419.5 643.0,415.4 644.5,411.5 646.0,407.7 647.5,404.1 649.0,400.7 650.5,397.4 652.0,394.3 653.5,391.4 655.0,388.6 656.5,386.1 658.0,383.7 659.5,381.5 661.0,379.6 662.5,377.8 664.0,376.2 665.5,374.9 667.0,373.7 668.5,372.8 670.0,372.0 671.5,371.5 673.0,371.2 674.5,371.1 676.0,371.2 677.5,371.5 679.0,372.0 680.5,372.8 682.0,373.7 683.5,374.9 685.0,376.2 686.5,377.8 688.0,379.6 689.5,381.5 691.0,383.7 692.5,386.1 694.0,388.6 695.5,391.4 697.0,394.3 698.5,397.4 700.0,400.7 701.5,404.1 703.0,407.7 704.5,411.5 706.0,415.4 707.5,419.5 709.0,423.8 710.5,428.1 712.0,432.6 713.5,437.3 715.0,442.0 716.5,446.9 718.0,451.9 719.5,456.9 721.0,462.1 722.5,467.4 724.0,472.7 725.5,478.1 727.0,483.6 728.5,489.1 730.0,494.7 731.5,500.3 733.0,506.0 734.5,511.7 736.0,517.4 737.5,523.1 739.0,528.8 740.5,534.5 742.0,540.2 743.5,545.9 745.0,551.6 746.5,557.2 748.0,562.8 749.5,568.3 751.0,573.8 752.5,579.2 754.0,584.5 755.5,589.7 757.0,594.9 758.5,600.0 760.0,604.9 761.5,609.8 763.0,614.5 764.5,619.2 766.0,623.7 767.5,628.0 769.0,632.2 770.5,636.3 772.0,640.2 773.5,644.0 775.0,647.6 776.5,651.0 778.0,654.3 779.5,657.4 781.0,660.3 782.5,663.0 784.0,665.6 785.5,667.9 787.0,670.1 788.5,672.0 790.0,673.8 791.5,675.3 793.0,676.7 794.5,677.8 796.0,678.8 797.5,679.5 799.0,680.0 800.5,680.3 802.0,680.4 803.5,680.3 805.0,679.9 806.5,679.4 808.0,678.7 809.5,677.7 811.0,676.5 812.5,675.1 814.0,673.6 815.5,671.8 817.0,669.8 818.5,667.6 820.0,665.2 821.5,662.7 823.0,659.9 824.5,657.0 826.0,653.9 827.5,650.6 829.0,647.1 830.5,643.5 832.0,639.7 833.5,635.8 835.0,631.7 836.5,627.4 838.0,623.1 839.5,618.6 841.0,613.9 842.5,609.2 844.0,604.3 845.5,599.3 847.0,594.2 848.5,589.0 850.0,583.8 851.5,578.4 853.0,573.0 854.5,567.5 856.0,562.0 857.5,556.4 859.0,550.8 860.5,545.1 862.0,539.5 863.5,533.7 865.0,528.0 866.5,522.3 868.0,516.6 869.5,510.9 871.0,505.2 872.5,499.6 874.0,493.9 875.5,488.4 877.0,482.8 878.5,477.4 880.0,472.0 881.5,466.6 883.0,461.4 884.5,456.2 886.0,451.2 887.5,446.2 889.0,441.4"/><polyline stroke="#c00ad0" stroke-width="1.5" points="40.0,680.1 41.5,679.7 43.0,679.1 44.5,678.3 46.0,677.2 47.5,676.0 49.0,674.6 50.5,673.0 52.0,671.3 53.5,669.3 55.0,667.2 56.5,664.8 58.0,662.3 59.5,659.7 61.0,656.8 62.5,653.8 64.0,650.6 65.5,647.3 67.0,643.8 68.5,640.2 70.0,636.4 71.5,632.5 73.0,628.5 74.5,624.3 76.0,620.0 77.5,615.6 79.0,611.1 80.5,606.5 82.0,601.8 83.5,597.0 85.0,592.1 86.5,587.1 88.0,582.1 89.5,577.0 91.0,571.9 92.5,566.7 94.0,561.4 95.5,556.1 97.0,550.8 98.5,545.5 100.0,540.2 101.5,534.8 103.0,529.5 104.5,524.1 106.0,518.8 107.5,513.5 109.0,508.3 110.5,503.0 112.0,497.9 113.5,492.7 115.0,487.7 116.5,482.7 118.0,477.7 119.5,472.9 121.0,468.1 122.5,463.4 124.0,458.9 125.5,454.4 127.0,450.0 128.5,445.8 130.0,441.7 131.5,437.7 133.0,433.8 134.5,430.1 136.0,426.6 137.5,423.1 139.0,419.9 140.5,416.8 142.0,413.8 143.5,411.0 145.0,408.4 146.5,406.0 148.0,403.8 149.5,401.7 151.0,399.8 152.5,398.1 154.0,396.6 155.5,395.3 157.0,394.1 158.5,393.2 160.0,392.4 161.5,391.9 163.0,391.5 164.5,391.4 166.0,391.4 167.5,391.7 169.0,392.1 170.5,392.8 172.0,393.6 173.5,394.6 175.0,395.8 176.5,397.3 178.0,398.9 179.5,400.7 181.0,402.6 182.5,404.8 184.0,407.1 185.5,409.6 187.0,412.3 188.5,415.2 190.0,418.2 191.5,421.4 193.0,424.7 194.5,428.2 196.0,431.8 197.5,435.6 199.0,439.5 200.5,443.6 202.0,447.8 203.5,452.1 205.0,456.5 206.5,461.0 208.0,465.6 209.5,470.3 211.0,475.1 212.5,480.0 214.0,485.0 215.5,490.0 217.0,495.1 218.5,500.3 220.0,505.5 221.5,510.7 223.0,516.0 224.5,521.3 226.0,526.6 227.5,532.0 229.0,537.3 230.5,542.7 232.0,548.0 233.5,553.3 235.0,558.6 236.5,563.9 238.0,569.1 239.5,574.3 241.0,579.4 242.5,584.5 244.0,589.5 245.5,594.4 247.0,599.2 248.5,604.0 250.0,608.7 251.5,613.2 253.0,617.7 254.5,622.0 256.0,626.3 257.5,630.4 259.0,634.4 260.5,638.2 262.0,641.9 263.5,645.5 265.0,648.9 266.5,652.1 268.0,655.2 269.5,658.2 271.0,660.9 272.5,663.5 274.0,665.9 275.5,668.2 277.0,670.2 278.5,672.1 280.0,673.8 281.5,675.3 283.0,676.6 284.5,677.7 286.0,678.7 287.5,679.4 289.0,679.9 290.5,680.3 292.0,680.4 293.5,680.3 295.0,680.1 296.5,679.6 298.0,679.0 299.5,678.1 301.0,677.1 302.5,675.9 304.0,674.4 305.5,672.8 307.0,671.0 308.5,669.0 310.0,666.9 311.5,664.5 313.0,662.0 314.5,659.3 316.0,656.4 317.5,653.4 319.0,650.2 320.5,646.8 322.0,643.3 323.5,639.7 325.0,635.9 326.5,632.0 328.0,627.9 329.5,623.7 331.0,619.4 332.5,615.0 334.0,610.5 335.5,605.9 337.0,601.1 338.5,596.3 340.0,591.4 341.5,586.5 343.0,581.4 344.5,576.3 346.0,571.2 347.5,566.0 349.0,560.7 350.5,555.4 352.0,550.1 353.5,544.8 355.0,539.5 356.5,534.1 358.0,528.8 359.5,523.4 361.0,518.1 362.5,512.8 364.0,507.6 365.5,502.4 367.0,497.2 368.5,492.1 370.0,487.0 371.5,482.0 373.0,477.1 374.5,472.2 376.0,467.5 377.5,462.8 379.0,458.3 380.5,453.8 382.0,449.5 383.5,445.2 385.0,441.1 386.5,437.2 388.0,433.3 389.5,429.6 391.0,426.1 392.5,422.7 394.0,419.4 395.5,416.4 397.0,413.4 398.5,410.7 400.0,408.1 401.5,405.7 403.0,403.5 404.5,401.4 406.0,399.6 407.5,397.9 409.0,396.4 410.5,395.1 412.0,394.0 413.5,393.1 415.0,392.4 416.5,391.8 418.0,391.5 419.5,391.4 421.0,391.5 422.5,391.7 424.0,392.2 425.5,392.9 427.0,393.7 428.5,394.8 430.0,396.0 431.5,397.5 433.0,399.1 434.5,400.9 436.0,402.9 437.5,405.1 439.0,407.4 440.5,410.0 442.0,412.7 443.5,415.6 445.0,418.6 446.5,421.8 448.0,425.2 449.5,428.7 451.0,432.3 452.5,436.1 454.0,440.1 455.5,444.1 457.0,448.3 458.5,452.6 460.0,457.1 461.5,461.6 463.0,466.2 464.5,471.0 466.0,475.8 467.5,480.7 469.0,485.7 470.5,490.7 472.0,495.8 473.5,501.0 475.0,506.2 476.5,511.4 478.0,516.7 479.5,522.0 481.0,527.3 482.5,532.7 484.0,538.0 485.5,543.4 487.0,548.7 488.5,554.0 490.0,559.3 491.5,564.6 493.0,569.8 494.5,575.0 496.0,580.1 497.5,585.1 499.0,590.1 500.5,595.0 502.0,599.9 503.5,604.6 505.0,609.3 506.5,613.8 508.0,618.3 509.5,622.6 511.0,626.8 512.5,630.9 514.0,634.9 515.5,638.7 517.0,642.4 518.5,645.9 520.0,649.3 521.5,652.5 523.0,655.6 524.5,658.5 526.0,661.3 527.5,663.8 529.0,666.2 530.5,668.5 532.0,670.5 533.5,672.3 535.0,674.0 536.5,675.5 538.0,676.8 539.5,677.9 541.0,678.8 542.5,679.5 544.0,680.0 545.5,680.3 547.0,680.4 548.5,680.3 550.0,680.0 551.5,679.6 553.0,678.9 554.5,678.0 556.0,676.9 557.5,675.7 559.0,674.2 560.5,672.6 562.0,670.8 563.5,668.7 565.0,666.5 566.5,664.2 568.0,661.6 569.5,658.9 571.0,656.0 572.5,653.0 574.0,649.8 575.5,646.4 577.0,642.9 578.5,639.2 580.0,635.4 581.5,631.5 583.0,627.4 584.5,623.2 586.0,618.9 587.5,614.4 589.0,609.9 590.5,605.2 592.0,600.5 593.5,595.7 595.0,590.8 596.5,585.8 598.0,580.8 599.5,575.6 601.0,570.5 602.5,565.3 604.0,560.0 605.5,554.7 607.0,549.4 608.5,544.1 610.0,538.7 611.5,533.4 613.0,528.1 614.5,522.7 616.0,517.4 617.5,512.1 619.0,506.9 620.5,501.7 622.0,496.5 623.5,491.4 625.0,486.3 626.5,481.3 628.0,476.4 629.5,471.6 631.0,466.9 632.5,462.2 634.0,457.7 635.5,453.2 637.0,448.9 638.5,444.7 640.0,440.6 641.5,436.7 643.0,432.8 644.5,429.2 646.0,425.6 647.5,422.3 649.0,419.0 650.5,416.0 652.0,413.1 653.5,410.3 655.0,407.8 656.5,405.4 658.0,403.2 659.5,401.2 661.0,399.3 662.5,397.7 664.0,396.2 665.5,394.9 667.0,393.9 668.5,393.0 670.0,392.3 671.5,391.8 673.0,391.5 674.5,391.4 676.0,391.5 677.5,391.8 679.0,392.3 680.5,393.0 682.0,393.9 683.5,394.9 685.0,396.2 686.5,397.7 688.0,399.3 689.5,401.2 691.0,403.2 692.5,405.4 694.0,407.8 695.5,410.3 697.0,413.1 698.5,416.0 700.0,419.0 701.5,422.3 703.0,425.6 704.5,429.2 706.0,432.8 707.5,436.7 709.0,440.6 710.5,444.7 712.0,448.9 713.5,453.2 715.0,457.7 716.5,462.2 718.0,466.9 719.5,471.6 721.0,476.4 722.5,481.3 724.0,486.3 725.5,491.4 727.0,496.5 728.5,501.7 730.0,506.9 731.5,512.1 733.0,517.4 734.5,522.7 736.0,528.1 737.5,533.4 739.0,538.7 740.5,544.1 742.0,549.4 743.5,554.7 745.0,560.0 746.5,565.3 748.0,570.5 749.5,575.6 751.0,580.8 752.5,585.8 754.0,590.8 755.5,595.7 757.0,600.5 758.5,605.2 760.0,609.9 761.5,614.4 763.0,618.9 764.5,623.2 766.0,627.4 767.5,631.5 769.0,635.4 770.5,639.2 772.0,642.9 773.5,646.4 775.0,649.8 776.5,653.0 778.0,656.0 779.5,658.9 781.0,661.6 782.5,664.2 784.0,666.5 785.5,668.7 787.0,670.8 788.5,672.6 790.0,674.2 791.5,675.7 793.0,676.9 794.5,678.0 796.0,678.9 797.5,679.6 799.0,680.0 800.5,680.3 802.0,680.4 803.5,680.3 805.0,680.0 806.5,679.5 808.0,678.8 809.5,677.9 811.0,676.8 812.5,675.5 814.0,674.0 815.5,672.3 817.0,670.5 818.5,668.5 820.0,666.2 821.5,663.8 823.0,661.3 824.5,658.5 826.0,655.6 827.5,652.5 829.0,649.3 830.5,645.9 832.0,642.4 833.5,638.7 835.0,634.9 836.5,630.9 838.0,626.8 839.5,622.6 841.0,618.3 842.5,613.8 844.0,609.3 845.5,604.6 847.0,599.9 848.5,595.0 850.0,590.1 851.5,585.1 853.0,580.1 854.5,575.0 856.0,569.8 857.5,564.6 859.0,559.3 860.5,554.0 862.0,548.7 863.5,543.4 865.0,538.0 866.5,532.7 868.0,527.3 869.5,522.0 871.0,516.7 872.5,511.4 874.0,506.2 875.5,501.0 877.0,495.8 878.5,490.7 880.0,485.7 881.5,480.7 883.0,475.8 884.5,471.0 886.0,466.2 887.5,461.6 889.0,457.1"/><polyline stroke="#b8b8b8" stroke-width="1.25" points="40.0,680.2 41.5,679.8 43.0,679.2 44.5,678.5 46.0,677.6 47.5,676.5 49.0,675.3 50.5,673.9 52.0,672.3 53.5,670.6 55.0,668.7 56.5,666.6 58.0,664.4 59.5,662.1 61.0,659.5 62.5,656.9 64.0,654.1 65.5,651.1 67.0,648.1 68.5,644.9 70.0,641.5 71.5,638.1 73.0,634.5 74.5,630.8 76.0,627.0 77.5,623.1 79.0,619.1 80.5,615.1 82.0,610.9 83.5,606.7 85.0,602.3 86.5,598.0 88.0,593.5 89.5,589.0 91.0,584.5 92.5,579.9 94.0,575.2 95.5,570.6 97.0,565.9 98.5,561.2 100.0,556.4 101.5,551.7 103.0,547.0 104.5,542.3 106.0,537.6 107.5,532.9 109.0,528.2 110.5,523.6 112.0,519.0 113.5,514.5 115.0,510.0 116.5,505.6 118.0,501.2 119.5,497.0 121.0,492.7 122.5,488.6 124.0,484.6 125.5,480.6 127.0,476.8 128.5,473.0 130.0,469.4 131.5,465.9 133.0,462.4 134.5,459.2 136.0,456.0 137.5,453.0 139.0,450.1 140.5,447.4 142.0,444.8 143.5,442.3 145.0,440.0 146.5,437.8 148.0,435.9 149.5,434.0 151.0,432.4 152.5,430.8 154.0,429.5 155.5,428.3 157.0,427.3 158.5,426.5 160.0,425.9 161.5,425.4 163.0,425.1 164.5,424.9 166.0,425.0 167.5,425.2 169.0,425.6 170.5,426.1 172.0,426.9 173.5,427.8 175.0,428.9 176.5,430.1 178.0,431.5 179.5,433.1 181.0,434.9 182.5,436.8 184.0,438.8 185.5,441.1 187.0,443.4 188.5,446.0 190.0,448.6 191.5,451.4 193.0,454.4 194.5,457.5 196.0,460.7 197.5,464.0 199.0,467.5 200.5,471.1 202.0,474.8 203.5,478.6 205.0,482.4 206.5,486.4 208.0,490.5 209.5,494.7 211.0,498.9 212.5,503.3 214.0,507.7 215.5,512.1 217.0,516.6 218.5,521.2 220.0,525.8 221.5,530.4 223.0,535.1 224.5,539.8 226.0,544.5 227.5,549.2 229.0,553.9 230.5,558.6 232.0,563.4 233.5,568.1 235.0,572.7 236.5,577.4 238.0,582.0 239.5,586.6 241.0,591.1 242.5,595.6 244.0,600.0 245.5,604.4 247.0,608.7 248.5,612.9 250.0,617.0 251.5,621.0 253.0,625.0 254.5,628.8 256.0,632.6 257.5,636.2 259.0,639.7 260.5,643.1 262.0,646.4 263.5,649.5 265.0,652.5 266.5,655.4 268.0,658.1 269.5,660.7 271.0,663.2 272.5,665.5 274.0,667.6 275.5,669.6 277.0,671.4 278.5,673.1 280.0,674.6 281.5,675.9 283.0,677.1 284.5,678.0 286.0,678.9 287.5,679.5 289.0,680.0 290.5,680.3 292.0,680.4 293.5,680.3 295.0,680.1 296.5,679.7 298.0,679.1 299.5,678.4 301.0,677.5 302.5,676.4 304.0,675.1 305.5,673.7 307.0,672.1 308.5,670.3 310.0,668.4 311.5,666.3 313.0,664.1 314.5,661.7 316.0,659.2 317.5,656.5 319.0,653.7 320.5,650.7 322.0,647.6 323.5,644.4 325.0,641.1 326.5,637.6 328.0,634.0 329.5,630.3 331.0,626.5 332.5,622.6 334.0,618.6 335.5,614.5 337.0,610.3 338.5,606.1 340.0,601.8 341.5,597.4 343.0,592.9 344.5,588.4 346.0,583.8 347.5,579.2 349.0,574.6 350.5,569.9 352.0,565.2 353.5,560.5 355.0,555.8 356.5,551.1 358.0,546.4 359.5,541.7 361.0,537.0 362.5,532.3 364.0,527.6 365.5,523.0 367.0,518.4 368.5,513.9 370.0,509.4 371.5,505.0 373.0,500.7 374.5,496.4 376.0,492.2 377.5,488.1 379.0,484.0 380.5,480.1 382.0,476.3 383.5,472.5 385.0,468.9 386.5,465.4 388.0,462.0 389.5,458.7 391.0,455.6 392.5,452.6 394.0,449.7 395.5,447.0 397.0,444.4 398.5,442.0 400.0,439.7 401.5,437.6 403.0,435.6 404.5,433.8 406.0,432.1 407.5,430.7 409.0,429.3 410.5,428.2 412.0,427.2 413.5,426.4 415.0,425.8 416.5,425.3 418.0,425.0 419.5,424.9 421.0,425.0 422.5,425.2 424.0,425.6 425.5,426.2 427.0,427.0 428.5,427.9 430.0,429.0 431.5,430.3 433.0,431.7 434.5,433.3 436.0,435.1 437.5,437.0 439.0,439.1 440.5,441.4 442.0,443.8 443.5,446.3 445.0,449.0 446.5,451.8 448.0,454.8 449.5,457.9 451.0,461.1 452.5,464.5 454.0,468.0 455.5,471.5 457.0,475.3 458.5,479.1 460.0,483.0 461.5,487.0 463.0,491.1 464.5,495.3 466.0,499.5 467.5,503.9 469.0,508.3 470.5,512.7 472.0,517.2 473.5,521.8 475.0,526.4 476.5,531.0 478.0,535.7 479.5,540.4 481.0,545.1 482.5,549.8 484.0,554.6 485.5,559.3 487.0,564.0 488.5,568.7 490.0,573.4 491.5,578.0 493.0,582.6 494.5,587.2 496.0,591.7 497.5,596.2 499.0,600.6 500.5,604.9 502.0,609.2 503.5,613.4 505.0,617.5 506.5,621.6 508.0,625.5 509.5,629.3 511.0,633.0 512.5,636.7 514.0,640.2 515.5,643.5 517.0,646.8 518.5,649.9 520.0,652.9 521.5,655.8 523.0,658.5 524.5,661.1 526.0,663.5 527.5,665.8 529.0,667.9 530.5,669.8 532.0,671.6 533.5,673.3 535.0,674.8 536.5,676.1 538.0,677.2 539.5,678.2 541.0,679.0 542.5,679.6 544.0,680.0 545.5,680.3 547.0,680.4 548.5,680.3 550.0,680.1 551.5,679.6 553.0,679.1 554.5,678.3 556.0,677.3 557.5,676.2 559.0,674.9 560.5,673.5 562.0,671.9 563.5,670.1 565.0,668.2 566.5,666.1 568.0,663.8 569.5,661.4 571.0,658.9 572.5,656.2 574.0,653.3 575.5,650.3 577.0,647.2 578.5,644.0 580.0,640.6 581.5,637.1 583.0,633.5 584.5,629.8 586.0,626.0 587.5,622.1 589.0,618.1 590.5,614.0 592.0,609.8 593.5,605.5 595.0,601.2 596.5,596.8 598.0,592.3 599.5,587.8 601.0,583.2 602.5,578.6 604.0,574.0 605.5,569.3 607.0,564.6 608.5,559.9 610.0,555.2 611.5,550.5 613.0,545.7 614.5,541.0 616.0,536.3 617.5,531.7 619.0,527.0 620.5,522.4 622.0,517.8 623.5,513.3 625.0,508.8 626.5,504.4 628.0,500.1 629.5,495.8 631.0,491.6 632.5,487.5 634.0,483.5 635.5,479.6 637.0,475.8 638.5,472.0 640.0,468.4 641.5,464.9 643.0,461.6 644.5,458.3 646.0,455.2 647.5,452.2 649.0,449.4 650.5,446.6 652.0,444.1 653.5,441.7 655.0,439.4 656.5,437.3 658.0,435.4 659.5,433.6 661.0,431.9 662.5,430.5 664.0,429.2 665.5,428.1 667.0,427.1 668.5,426.3 670.0,425.7 671.5,425.3 673.0,425.0 674.5,424.9 676.0,425.0 677.5,425.3 679.0,425.7 680.5,426.3 682.0,427.1 683.5,428.1 685.0,429.2 686.5,430.5 688.0,431.9 689.5,433.6 691.0,435.4 692.5,437.3 694.0,439.4 695.5,441.7 697.0,444.1 698.5,446.6 700.0,449.4 701.5,452.2 703.0,455.2 704.5,458.3 706.0,461.6 707.5,464.9 709.0,468.4 710.5,472.0 712.0,475.8 713.5,479.6 715.0,483.5 716.5,487.5 718.0,491.6 719.5,495.8 721.0,500.1 722.5,504.4 724.0,508.8 725.5,513.3 727.0,517.8 728.5,522.4 730.0,527.0 731.5,531.7 733.0,536.3 734.5,541.0 736.0,545.7 737.5,550.5 739.0,555.2 740.5,559.9 742.0,564.6 743.5,569.3 745.0,574.0 746.5,578.6 748.0,583.2 749.5,587.8 751.0,592.3 752.5,596.8 754.0,601.2 755.5,605.5 757.0,609.8 758.5,614.0 760.0,618.1 761.5,622.1 763.0,626.0 764.5,629.8 766.0,633.5 767.5,637.1 769.0,640.6 770.5,644.0 772.0,647.2 773.5,650.3 775.0,653.3 776.5,656.2 778.0,658.9 779.5,661.4 781.0,663.8 782.5,666.1 784.0,668.2 785.5,670.1 787.0,671.9 788.5,673.5 790.0,674.9 791.5,676.2 793.0,677.3 794.5,678.3 796.0,679.1 797.5,679.6 799.0,680.1 800.5,680.3 802.0,680.4 803.5,680.3 805.0,680.0 806.5,679.6 808.0,679.0 809.5,678.2 811.0,677.2 812.5,676.1 814.0,674.8 815.5,673.3 817.0,671.6 818.5,669.8 820.0,667.9 821.5,665.8 823.0,663.5 824.5,661.1 826.0,658.5 827.5,655.8 829.0,652.9 830.5,649.9 832.0,646.8 833.5,643.5 835.0,640.2 836.5,636.7 838.0,633.0 839.5,629.3 841.0,625.5 842.5,621.6 844.0,617.5 845.5,613.4 847.0,609.2 848.5,604.9 850.0,600.6 851.5,596.2 853.0,591.7 854.5,587.2 856.0,582.6 857.5,578.0 859.0,573.4 860.5,568.7 862.0,564.0 863.5,559.3 865.0,554.6 866.5,549.8 868.0,545.1 869.5,540.4 871.0,535.7 872.5,531.0 874.0,526.4 875.5,521.8 877.0,517.2 878.5,512.7 880.0,508.3 881.5,503.9 883.0,499.5 884.5,495.3 886.0,491.1 887.5,487.0 889.0,483.0"/><polyline stroke="#000098" stroke-width="1.25" points="40.0,680.2 41.5,679.8 43.0,679.3 44.5,678.6 46.0,677.8 47.5,676.7 49.0,675.6 50.5,674.2 52.0,672.8 53.5,671.1 55.0,669.3 56.5,667.4 58.0,665.3 59.5,663.1 61.0,660.7 62.5,658.2 64.0,655.5 65.5,652.7 67.0,649.8 68.5,646.8 70.0,643.7 71.5,640.4 73.0,637.0 74.5,633.5 76.0,630.0 77.5,626.3 79.0,622.5 80.5,618.7 82.0,614.7 83.5,610.7 85.0,606.6 86.5,602.5 88.0,598.3 89.5,594.0 91.0,589.7 92.5,585.4 94.0,581.0 95.5,576.6 97.0,572.1 98.5,567.7 100.0,563.2 101.5,558.8 103.0,554.3 104.5,549.9 106.0,545.4 107.5,541.0 109.0,536.6 110.5,532.2 112.0,527.9 113.5,523.6 115.0,519.4 116.5,515.2 118.0,511.1 119.5,507.0 121.0,503.0 122.5,499.1 124.0,495.3 125.5,491.6 127.0,487.9 128.5,484.4 130.0,481.0 131.5,477.6 133.0,474.4 134.5,471.3 136.0,468.3 137.5,465.5 139.0,462.7 140.5,460.1 142.0,457.7 143.5,455.4 145.0,453.2 146.5,451.1 148.0,449.3 149.5,447.5 151.0,446.0 152.5,444.5 154.0,443.3 155.5,442.2 157.0,441.2 158.5,440.4 160.0,439.8 161.5,439.4 163.0,439.1 164.5,438.9 166.0,439.0 167.5,439.2 169.0,439.6 170.5,440.1 172.0,440.8 173.5,441.6 175.0,442.7 176.5,443.8 178.0,445.2 179.5,446.7 181.0,448.3 182.5,450.1 184.0,452.1 185.5,454.2 187.0,456.4 188.5,458.8 190.0,461.3 191.5,464.0 193.0,466.8 194.5,469.7 196.0,472.7 197.5,475.9 199.0,479.2 200.5,482.5 202.0,486.0 203.5,489.6 205.0,493.3 206.5,497.1 208.0,500.9 209.5,504.9 211.0,508.9 212.5,513.0 214.0,517.1 215.5,521.3 217.0,525.6 218.5,529.9 220.0,534.3 221.5,538.6 223.0,543.0 224.5,547.5 226.0,551.9 227.5,556.4 229.0,560.9 230.5,565.3 232.0,569.8 233.5,574.2 235.0,578.6 236.5,583.0 238.0,587.4 239.5,591.7 241.0,596.0 242.5,600.2 244.0,604.4 245.5,608.5 247.0,612.6 248.5,616.6 250.0,620.5 251.5,624.3 253.0,628.0 254.5,631.6 256.0,635.2 257.5,638.6 259.0,641.9 260.5,645.1 262.0,648.2 263.5,651.2 265.0,654.1 266.5,656.8 268.0,659.4 269.5,661.8 271.0,664.1 272.5,666.3 274.0,668.3 275.5,670.2 277.0,671.9 278.5,673.5 280.0,674.9 281.5,676.1 283.0,677.2 284.5,678.2 286.0,678.9 287.5,679.6 289.0,680.0 290.5,680.3 292.0,680.4 293.5,680.3 295.0,680.1 296.5,679.8 298.0,679.2 299.5,678.5 301.0,677.6 302.5,676.6 304.0,675.4 305.5,674.1 307.0,672.6 308.5,670.9 310.0,669.1 311.5,667.1 313.0,665.0 314.5,662.8 316.0,660.4 317.5,657.8 319.0,655.2 320.5,652.4 322.0,649.4 323.5,646.4 325.0,643.2 326.5,640.0 328.0,636.6 329.5,633.1 331.0,629.5 332.5,625.8 334.0,622.0 335.5,618.1 337.0,614.2 338.5,610.2 340.0,606.1 341.5,601.9 343.0,597.7 344.5,593.4 346.0,589.1 347.5,584.8 349.0,580.4 350.5,576.0 352.0,571.6 353.5,567.1 355.0,562.6 356.5,558.2 358.0,553.7 359.5,549.3 361.0,544.8 362.5,540.4 364.0,536.0 365.5,531.6 367.0,527.3 368.5,523.0 370.0,518.8 371.5,514.6 373.0,510.5 374.5,506.5 376.0,502.5 377.5,498.6 379.0,494.8 380.5,491.1 382.0,487.5 383.5,483.9 385.0,480.5 386.5,477.2 388.0,474.0 389.5,470.9 391.0,467.9 392.5,465.1 394.0,462.4 395.5,459.8 397.0,457.4 398.5,455.1 400.0,452.9 401.5,450.9 403.0,449.0 404.5,447.3 406.0,445.8 407.5,444.4 409.0,443.1 410.5,442.0 412.0,441.1 413.5,440.3 415.0,439.7 416.5,439.3 418.0,439.0 419.5,438.9 421.0,439.0 422.5,439.2 424.0,439.6 425.5,440.2 427.0,440.9 428.5,441.8 430.0,442.8 431.5,444.0 433.0,445.4 434.5,446.9 436.0,448.6 437.5,450.4 439.0,452.4 440.5,454.5 442.0,456.7 443.5,459.1 445.0,461.7 446.5,464.4 448.0,467.2 449.5,470.1 451.0,473.1 452.5,476.3 454.0,479.6 455.5,483.0 457.0,486.5 458.5,490.1 460.0,493.8 461.5,497.6 463.0,501.5 464.5,505.4 466.0,509.4 467.5,513.5 469.0,517.7 470.5,521.9 472.0,526.2 473.5,530.5 475.0,534.8 476.5,539.2 478.0,543.6 479.5,548.1 481.0,552.5 482.5,557.0 484.0,561.5 485.5,565.9 487.0,570.4 488.5,574.8 490.0,579.2 491.5,583.6 493.0,588.0 494.5,592.3 496.0,596.6 497.5,600.8 499.0,605.0 500.5,609.1 502.0,613.1 503.5,617.1 505.0,621.0 506.5,624.8 508.0,628.5 509.5,632.1 511.0,635.6 512.5,639.1 514.0,642.4 515.5,645.6 517.0,648.6 518.5,651.6 520.0,654.4 521.5,657.1 523.0,659.7 524.5,662.1 526.0,664.4 527.5,666.6 529.0,668.6 530.5,670.4 532.0,672.1 533.5,673.7 535.0,675.1 536.5,676.3 538.0,677.4 539.5,678.3 541.0,679.0 542.5,679.6 544.0,680.0 545.5,680.3 547.0,680.4 548.5,680.3 550.0,680.1 551.5,679.7 553.0,679.1 554.5,678.4 556.0,677.5 557.5,676.5 559.0,675.2 560.5,673.9 562.0,672.3 563.5,670.7 565.0,668.8 566.5,666.8 568.0,664.7 569.5,662.4 571.0,660.0 572.5,657.5 574.0,654.8 575.5,652.0 577.0,649.0 578.5,646.0 580.0,642.8 581.5,639.5 583.0,636.1 584.5,632.6 586.0,629.0 587.5,625.3 589.0,621.5 590.5,617.6 592.0,613.7 593.5,609.6 595.0,605.5 596.5,601.4 598.0,597.1 599.5,592.9 601.0,588.6 602.5,584.2 604.0,579.8 605.5,575.4 607.0,571.0 608.5,566.5 610.0,562.0 611.5,557.6 613.0,553.1 614.5,548.7 616.0,544.2 617.5,539.8 619.0,535.4 620.5,531.1 622.0,526.7 623.5,522.5 625.0,518.2 626.5,514.1 628.0,510.0 629.5,505.9 631.0,502.0 632.5,498.1 634.0,494.3 635.5,490.6 637.0,487.0 638.5,483.5 640.0,480.1 641.5,476.8 643.0,473.6 644.5,470.5 646.0,467.5 647.5,464.7 649.0,462.0 650.5,459.5 652.0,457.0 653.5,454.8 655.0,452.6 656.5,450.6 658.0,448.8 659.5,447.1 661.0,445.6 662.5,444.2 664.0,443.0 665.5,441.9 667.0,441.0 668.5,440.3 670.0,439.7 671.5,439.3 673.0,439.0 674.5,438.9 676.0,439.0 677.5,439.3 679.0,439.7 680.5,440.3 682.0,441.0 683.5,441.9 685.0,443.0 686.5,444.2 688.0,445.6 689.5,447.1 691.0,448.8 692.5,450.6 694.0,452.6 695.5,454.8 697.0,457.0 698.5,459.5 700.0,462.0 701.5,464.7 703.0,467.5 704.5,470.5 706.0,473.6 707.5,476.8 709.0,480.1 710.5,483.5 712.0,487.0 713.5,490.6 715.0,494.3 716.5,498.1 718.0,502.0 719.5,505.9 721.0,510.0 722.5,514.1 724.0,518.2 725.5,522.5 727.0,526.7 728.5,531.1 730.0,535.4 731.5,539.8 733.0,544.2 734.5,548.7 736.0,553.1 737.5,557.6 739.0,562.0 740.5,566.5 742.0,571.0 743.5,575.4 745.0,579.8 746.5,584.2 748.0,588.6 749.5,592.9 751.0,597.1 752.5,601.4 754.0,605.5 755.5,609.6 757.0,613.7 758.5,617.6 760.0,621.5 761.5,625.3 763.0,629.0 764.5,632.6 766.0,636.1 767.5,639.5 769.0,642.8 770.5,646.0 772.0,649.0 773.5,652.0 775.0,654.8 776.5,657.5 778.0,660.0 779.5,662.4 781.0,664.7 782.5,666.8 784.0,668.8 785.5,670.7 787.0,672.3 788.5,673.9 790.0,675.2 791.5,676.5 793.0,677.5 794.5,678.4 796.0,679.1 797.5,679.7 799.0,680.1 800.5,680.3 802.0,680.4 803.5,680.3 805.0,680.0 806.5,679.6 808.0,679.0 809.5,678.3 811.0,677.4 812.5,676.3 814.0,675.1 815.5,673.7 817.0,672.1 818.5,670.4 820.0,668.6 821.5,666.6 823.0,664.4 824.5,662.1 826.0,659.7 827.5,657.1 829.0,654.4 830.5,651.6 832.0,648.6 833.5,645.6 835.0,642.4 836.5,639.1 838.0,635.6 839.5,632.1 841.0,628.5 842.5,624.8 844.0,621.0 845.5,617.1 847.0,613.1 848.5,609.1 850.0,605.0 851.5,600.8 853.0,596.6 854.5,592.3 856.0,588.0 857.5,583.6 859.0,579.2 860.5,574.8 862.0,570.4 863.5,565.9 865.0,561.5 866.5,557.0 868.0,552.5 869.5,548.1 871.0,543.6 872.5,539.2 874.0,534.8 875.5,530.5 877.0,526.2 878.5,521.9 880.0,517.7 881.5,513.5 883.0,509.4 884.5,505.4 886.0,501.5 887.5,497.6 889.0,493.8"/><polyline stroke="#008a00" stroke-width="1.25" points="40.0,680.2 41.5,679.8 43.0,679.3 44.5,678.7 46.0,677.9 47.5,676.9 49.0,675.8 50.5,674.6 52.0,673.2 53.5,671.6 55.0,669.9 56.5,668.1 58.0,666.1 59.5,664.0 61.0,661.7 62.5,659.3 64.0,656.8 65.5,654.2 67.0,651.4 68.5,648.6 70.0,645.6 71.5,642.5 73.0,639.3 74.5,636.0 76.0,632.6 77.5,629.1 79.0,625.5 80.5,621.9 82.0,618.1 83.5,614.3 85.0,610.5 86.5,606.5 88.0,602.5 89.5,598.5 91.0,594.4 92.5,590.3 94.0,586.2 95.5,582.0 97.0,577.8 98.5,573.6 100.0,569.3 101.5,565.1 103.0,560.9 104.5,556.6 106.0,552.4 107.5,548.2 109.0,544.1 110.5,539.9 112.0,535.8 113.5,531.8 115.0,527.7 116.5,523.8 118.0,519.9 119.5,516.0 121.0,512.3 122.5,508.6 124.0,504.9 125.5,501.4 127.0,497.9 128.5,494.6 130.0,491.3 131.5,488.2 133.0,485.1 134.5,482.2 136.0,479.3 137.5,476.6 139.0,474.0 140.5,471.6 142.0,469.3 143.5,467.1 145.0,465.0 146.5,463.1 148.0,461.3 149.5,459.6 151.0,458.1 152.5,456.8 154.0,455.6 155.5,454.5 157.0,453.7 158.5,452.9 160.0,452.3 161.5,451.9 163.0,451.6 164.5,451.5 166.0,451.5 167.5,451.7 169.0,452.1 170.5,452.6 172.0,453.2 173.5,454.1 175.0,455.0 176.5,456.1 178.0,457.4 179.5,458.8 181.0,460.4 182.5,462.1 184.0,463.9 185.5,465.9 187.0,468.1 188.5,470.3 190.0,472.7 191.5,475.2 193.0,477.9 194.5,480.6 196.0,483.5 197.5,486.5 199.0,489.6 200.5,492.8 202.0,496.1 203.5,499.5 205.0,503.0 206.5,506.6 208.0,510.3 209.5,514.0 211.0,517.8 212.5,521.7 214.0,525.6 215.5,529.6 217.0,533.6 218.5,537.7 220.0,541.9 221.5,546.0 223.0,550.2 224.5,554.4 226.0,558.6 227.5,562.8 229.0,567.1 230.5,571.3 232.0,575.5 233.5,579.7 235.0,583.9 236.5,588.1 238.0,592.2 239.5,596.3 241.0,600.4 242.5,604.4 244.0,608.4 245.5,612.3 247.0,616.1 248.5,619.9 250.0,623.6 251.5,627.2 253.0,630.7 254.5,634.2 256.0,637.5 257.5,640.8 259.0,643.9 260.5,647.0 262.0,649.9 263.5,652.7 265.0,655.4 266.5,658.0 268.0,660.5 269.5,662.8 271.0,665.0 272.5,667.0 274.0,668.9 275.5,670.7 277.0,672.3 278.5,673.8 280.0,675.2 281.5,676.4 283.0,677.4 284.5,678.3 286.0,679.0 287.5,679.6 289.0,680.0 290.5,680.3 292.0,680.4 293.5,680.3 295.0,680.1 296.5,679.8 298.0,679.3 299.5,678.6 301.0,677.8 302.5,676.8 304.0,675.7 305.5,674.4 307.0,673.0 308.5,671.4 310.0,669.7 311.5,667.8 313.0,665.8 314.5,663.7 316.0,661.4 317.5,659.0 319.0,656.5 320.5,653.8 322.0,651.1 323.5,648.2 325.0,645.2 326.5,642.1 328.0,638.8 329.5,635.5 331.0,632.1 332.5,628.6 334.0,625.0 335.5,621.4 337.0,617.6 338.5,613.8 340.0,609.9 341.5,606.0 343.0,602.0 344.5,598.0 346.0,593.9 347.5,589.8 349.0,585.6 350.5,581.4 352.0,577.2 353.5,573.0 355.0,568.8 356.5,564.5 358.0,560.3 359.5,556.1 361.0,551.9 362.5,547.7 364.0,543.5 365.5,539.4 367.0,535.3 368.5,531.2 370.0,527.2 371.5,523.3 373.0,519.4 374.5,515.5 376.0,511.8 377.5,508.1 379.0,504.5 380.5,500.9 382.0,497.5 383.5,494.1 385.0,490.9 386.5,487.7 388.0,484.7 389.5,481.8 391.0,479.0 392.5,476.3 394.0,473.7 395.5,471.3 397.0,469.0 398.5,466.8 400.0,464.7 401.5,462.8 403.0,461.1 404.5,459.4 406.0,458.0 407.5,456.6 409.0,455.4 410.5,454.4 412.0,453.5 413.5,452.8 415.0,452.3 416.5,451.8 418.0,451.6 419.5,451.5 421.0,451.5 422.5,451.8 424.0,452.1 425.5,452.7 427.0,453.3 428.5,454.2 430.0,455.2 431.5,456.3 433.0,457.6 434.5,459.0 436.0,460.6 437.5,462.3 439.0,464.2 440.5,466.2 442.0,468.4 443.5,470.6 445.0,473.0 446.5,475.6 448.0,478.2 449.5,481.0 451.0,483.9 452.5,486.9 454.0,490.0 455.5,493.3 457.0,496.6 458.5,500.0 460.0,503.5 461.5,507.1 463.0,510.8 464.5,514.5 466.0,518.3 467.5,522.2 469.0,526.1 470.5,530.1 472.0,534.2 473.5,538.3 475.0,542.4 476.5,546.6 478.0,550.7 479.5,555.0 481.0,559.2 482.5,563.4 484.0,567.6 485.5,571.9 487.0,576.1 488.5,580.3 490.0,584.5 491.5,588.7 493.0,592.8 494.5,596.9 496.0,600.9 497.5,604.9 499.0,608.9 500.5,612.8 502.0,616.6 503.5,620.4 505.0,624.1 506.5,627.7 508.0,631.2 509.5,634.6 511.0,638.0 512.5,641.2 514.0,644.3 515.5,647.4 517.0,650.3 518.5,653.1 520.0,655.8 521.5,658.3 523.0,660.8 524.5,663.1 526.0,665.3 527.5,667.3 529.0,669.2 530.5,670.9 532.0,672.6 533.5,674.0 535.0,675.3 536.5,676.5 538.0,677.5 539.5,678.4 541.0,679.1 542.5,679.7 544.0,680.1 545.5,680.3 547.0,680.4 548.5,680.3 550.0,680.1 551.5,679.7 553.0,679.2 554.5,678.5 556.0,677.7 557.5,676.7 559.0,675.5 560.5,674.2 562.0,672.8 563.5,671.2 565.0,669.4 566.5,667.6 568.0,665.5 569.5,663.4 571.0,661.1 572.5,658.7 574.0,656.1 575.5,653.5 577.0,650.7 578.5,647.8 580.0,644.8 581.5,641.6 583.0,638.4 584.5,635.1 586.0,631.7 587.5,628.1 589.0,624.6 590.5,620.9 592.0,617.1 593.5,613.3 595.0,609.4 596.5,605.5 598.0,601.5 599.5,597.4 601.0,593.3 602.5,589.2 604.0,585.0 605.5,580.9 607.0,576.7 608.5,572.4 610.0,568.2 611.5,564.0 613.0,559.7 614.5,555.5 616.0,551.3 617.5,547.1 619.0,543.0 620.5,538.8 622.0,534.7 623.5,530.7 625.0,526.7 626.5,522.7 628.0,518.8 629.5,515.0 631.0,511.3 632.5,507.6 634.0,504.0 635.5,500.5 637.0,497.0 638.5,493.7 640.0,490.5 641.5,487.3 643.0,484.3 644.5,481.4 646.0,478.6 647.5,475.9 649.0,473.4 650.5,471.0 652.0,468.7 653.5,466.5 655.0,464.5 656.5,462.6 658.0,460.8 659.5,459.2 661.0,457.8 662.5,456.5 664.0,455.3 665.5,454.3 667.0,453.4 668.5,452.7 670.0,452.2 671.5,451.8 673.0,451.6 674.5,451.5 676.0,451.6 677.5,451.8 679.0,452.2 680.5,452.7 682.0,453.4 683.5,454.3 685.0,455.3 686.5,456.5 688.0,457.8 689.5,459.2 691.0,460.8 692.5,462.6 694.0,464.5 695.5,466.5 697.0,468.7 698.5,471.0 700.0,473.4 701.5,475.9 703.0,478.6 704.5,481.4 706.0,484.3 707.5,487.3 709.0,490.5 710.5,493.7 712.0,497.0 713.5,500.5 715.0,504.0 716.5,507.6 718.0,511.3 719.5,515.0 721.0,518.8 722.5,522.7 724.0,526.7 725.5,530.7 727.0,534.7 728.5,538.8 730.0,543.0 731.5,547.1 733.0,551.3 734.5,555.5 736.0,559.7 737.5,564.0 739.0,568.2 740.5,572.4 742.0,576.7 743.5,580.9 745.0,585.0 746.5,589.2 748.0,593.3 749.5,597.4 751.0,601.5 752.5,605.5 754.0,609.4 755.5,613.3 757.0,617.1 758.5,620.9 760.0,624.6 761.5,628.1 763.0,631.7 764.5,635.1 766.0,638.4 767.5,641.6 769.0,644.8 770.5,647.8 772.0,650.7 773.5,653.5 775.0,656.1 776.5,658.7 778.0,661.1 779.5,663.4 781.0,665.5 782.5,667.6 784.0,669.4 785.5,671.2 787.0,672.8 788.5,674.2 790.0,675.5 791.5,676.7 793.0,677.7 794.5,678.5 796.0,679.2 797.5,679.7 799.0,680.1 800.5,680.3 802.0,680.4 803.5,680.3 805.0,680.1 806.5,679.7 808.0,679.1 809.5,678.4 811.0,677.5 812.5,676.5 814.0,675.3 815.5,674.0 817.0,672.6 818.5,670.9 820.0,669.2 821.5,667.3 823.0,665.3 824.5,663.1 826.0,660.8 827.5,658.3 829.0,655.8 830.5,653.1 832.0,650.3 833.5,647.4 835.0,644.3 836.5,641.2 838.0,638.0 839.5,634.6 841.0,631.2 842.5,627.7 844.0,624.1 845.5,620.4 847.0,616.6 848.5,612.8 850.0,608.9 851.5,604.9 853.0,600.9 854.5,596.9 856.0,592.8 857.5,588.7 859.0,584.5 860.5,580.3 862.0,576.1 863.5,571.9 865.0,567.6 866.5,563.4 868.0,559.2 869.5,555.0 871.0,550.7 872.5,546.6 874.0,542.4 875.5,538.3 877.0,534.2 878.5,530.1 880.0,526.1 881.5,522.2 883.0,518.3 884.5,514.5 886.0,510.8 887.5,507.1 889.0,503.5"/><polyline stroke="#008a8a" stroke-width="1.25" points="40.0,680.2 41.5,679.9 43.0,679.4 44.5,678.8 46.0,678.0 47.5,677.1 49.0,676.1 50.5,674.9 52.0,673.5 53.5,672.0 55.0,670.4 56.5,668.7 58.0,666.8 59.5,664.8 61.0,662.6 62.5,660.4 64.0,658.0 65.5,655.5 67.0,652.9 68.5,650.1 70.0,647.3 71.5,644.3 73.0,641.3 74.5,638.2 76.0,634.9 77.5,631.6 79.0,628.2 80.5,624.8 82.0,621.2 83.5,617.6 85.0,613.9 86.5,610.2 88.0,606.4 89.5,602.6 91.0,598.7 92.5,594.8 94.0,590.8 95.5,586.8 97.0,582.8 98.5,578.8 100.0,574.8 101.5,570.8 103.0,566.8 104.5,562.8 106.0,558.8 107.5,554.8 109.0,550.8 110.5,546.9 112.0,543.0 113.5,539.1 115.0,535.3 116.5,531.5 118.0,527.8 119.5,524.2 121.0,520.6 122.5,517.0 124.0,513.6 125.5,510.2 127.0,507.0 128.5,503.8 130.0,500.7 131.5,497.7 133.0,494.8 134.5,492.0 136.0,489.3 137.5,486.7 139.0,484.2 140.5,481.9 142.0,479.7 143.5,477.6 145.0,475.6 146.5,473.8 148.0,472.1 149.5,470.6 151.0,469.1 152.5,467.8 154.0,466.7 155.5,465.7 157.0,464.9 158.5,464.2 160.0,463.6 161.5,463.2 163.0,462.9 164.5,462.8 166.0,462.8 167.5,463.0 169.0,463.4 170.5,463.8 172.0,464.5 173.5,465.2 175.0,466.2 176.5,467.2 178.0,468.4 179.5,469.8 181.0,471.3 182.5,472.9 184.0,474.6 185.5,476.5 187.0,478.6 188.5,480.7 190.0,483.0 191.5,485.4 193.0,487.9 194.5,490.5 196.0,493.3 197.5,496.1 199.0,499.1 200.5,502.1 202.0,505.2 203.5,508.5 205.0,511.8 206.5,515.2 208.0,518.7 209.5,522.2 211.0,525.8 212.5,529.5 214.0,533.3 215.5,537.1 217.0,540.9 218.5,544.8 220.0,548.7 221.5,552.6 223.0,556.6 224.5,560.6 226.0,564.6 227.5,568.6 229.0,572.7 230.5,576.7 232.0,580.7 233.5,584.7 235.0,588.7 236.5,592.7 238.0,596.6 239.5,600.5 241.0,604.4 242.5,608.2 244.0,611.9 245.5,615.6 247.0,619.3 248.5,622.9 250.0,626.4 251.5,629.8 253.0,633.2 254.5,636.5 256.0,639.6 257.5,642.7 259.0,645.7 260.5,648.6 262.0,651.4 263.5,654.1 265.0,656.7 266.5,659.1 268.0,661.4 269.5,663.7 271.0,665.7 272.5,667.7 274.0,669.5 275.5,671.2 277.0,672.7 278.5,674.2 280.0,675.4 281.5,676.6 283.0,677.6 284.5,678.4 286.0,679.1 287.5,679.6 289.0,680.0 290.5,680.3 292.0,680.4 293.5,680.4 295.0,680.2 296.5,679.8 298.0,679.3 299.5,678.7 301.0,677.9 302.5,677.0 304.0,675.9 305.5,674.7 307.0,673.3 308.5,671.8 310.0,670.2 311.5,668.4 313.0,666.5 314.5,664.5 316.0,662.3 317.5,660.1 319.0,657.7 320.5,655.1 322.0,652.5 323.5,649.8 325.0,646.9 326.5,643.9 328.0,640.9 329.5,637.7 331.0,634.5 332.5,631.2 334.0,627.8 335.5,624.3 337.0,620.7 338.5,617.1 340.0,613.4 341.5,609.7 343.0,605.9 344.5,602.0 346.0,598.2 347.5,594.2 349.0,590.3 350.5,586.3 352.0,582.3 353.5,578.3 355.0,574.3 356.5,570.3 358.0,566.2 359.5,562.2 361.0,558.2 362.5,554.2 364.0,550.3 365.5,546.3 367.0,542.4 368.5,538.6 370.0,534.8 371.5,531.0 373.0,527.3 374.5,523.7 376.0,520.1 377.5,516.6 379.0,513.1 380.5,509.8 382.0,506.5 383.5,503.3 385.0,500.3 386.5,497.3 388.0,494.4 389.5,491.6 391.0,488.9 392.5,486.4 394.0,483.9 395.5,481.6 397.0,479.4 398.5,477.3 400.0,475.4 401.5,473.6 403.0,471.9 404.5,470.4 406.0,468.9 407.5,467.7 409.0,466.6 410.5,465.6 412.0,464.8 413.5,464.1 415.0,463.5 416.5,463.1 418.0,462.9 419.5,462.8 421.0,462.9 422.5,463.1 424.0,463.4 425.5,463.9 427.0,464.6 428.5,465.4 430.0,466.3 431.5,467.4 433.0,468.6 434.5,470.0 436.0,471.5 437.5,473.1 439.0,474.9 440.5,476.8 442.0,478.8 443.5,481.0 445.0,483.3 446.5,485.7 448.0,488.2 449.5,490.9 451.0,493.6 452.5,496.5 454.0,499.5 455.5,502.5 457.0,505.7 458.5,508.9 460.0,512.2 461.5,515.7 463.0,519.1 464.5,522.7 466.0,526.3 467.5,530.0 469.0,533.8 470.5,537.6 472.0,541.4 473.5,545.3 475.0,549.2 476.5,553.2 478.0,557.2 479.5,561.2 481.0,565.2 482.5,569.2 484.0,573.2 485.5,577.2 487.0,581.2 488.5,585.2 490.0,589.2 491.5,593.2 493.0,597.1 494.5,601.0 496.0,604.9 497.5,608.7 499.0,612.4 500.5,616.1 502.0,619.8 503.5,623.3 505.0,626.8 506.5,630.3 508.0,633.6 509.5,636.9 511.0,640.1 512.5,643.1 514.0,646.1 515.5,649.0 517.0,651.8 518.5,654.4 520.0,657.0 521.5,659.4 523.0,661.7 524.5,663.9 526.0,666.0 527.5,667.9 529.0,669.7 530.5,671.4 532.0,672.9 533.5,674.3 535.0,675.6 536.5,676.7 538.0,677.7 539.5,678.5 541.0,679.2 542.5,679.7 544.0,680.1 545.5,680.3 547.0,680.4 548.5,680.3 550.0,680.1 551.5,679.8 553.0,679.3 554.5,678.6 556.0,677.8 557.5,676.8 559.0,675.7 560.5,674.5 562.0,673.1 563.5,671.6 565.0,670.0 566.5,668.2 568.0,666.3 569.5,664.2 571.0,662.0 572.5,659.7 574.0,657.3 575.5,654.8 577.0,652.1 578.5,649.4 580.0,646.5 581.5,643.5 583.0,640.5 584.5,637.3 586.0,634.1 587.5,630.7 589.0,627.3 590.5,623.8 592.0,620.3 593.5,616.6 595.0,612.9 596.5,609.2 598.0,605.4 599.5,601.5 601.0,597.6 602.5,593.7 604.0,589.8 605.5,585.8 607.0,581.8 608.5,577.8 610.0,573.7 611.5,569.7 613.0,565.7 614.5,561.7 616.0,557.7 617.5,553.7 619.0,549.7 620.5,545.8 622.0,541.9 623.5,538.1 625.0,534.3 626.5,530.5 628.0,526.8 629.5,523.2 631.0,519.6 632.5,516.1 634.0,512.7 635.5,509.4 637.0,506.1 638.5,502.9 640.0,499.9 641.5,496.9 643.0,494.0 644.5,491.2 646.0,488.6 647.5,486.0 649.0,483.6 650.5,481.3 652.0,479.1 653.5,477.1 655.0,475.1 656.5,473.3 658.0,471.7 659.5,470.2 661.0,468.8 662.5,467.5 664.0,466.4 665.5,465.5 667.0,464.7 668.5,464.0 670.0,463.5 671.5,463.1 673.0,462.9 674.5,462.8 676.0,462.9 677.5,463.1 679.0,463.5 680.5,464.0 682.0,464.7 683.5,465.5 685.0,466.4 686.5,467.5 688.0,468.8 689.5,470.2 691.0,471.7 692.5,473.3 694.0,475.1 695.5,477.1 697.0,479.1 698.5,481.3 700.0,483.6 701.5,486.0 703.0,488.6 704.5,491.2 706.0,494.0 707.5,496.9 709.0,499.9 710.5,502.9 712.0,506.1 713.5,509.4 715.0,512.7 716.5,516.1 718.0,519.6 719.5,523.2 721.0,526.8 722.5,530.5 724.0,534.3 725.5,538.1 727.0,541.9 728.5,545.8 730.0,549.7 731.5,553.7 733.0,557.7 734.5,561.7 736.0,565.7 737.5,569.7 739.0,573.7 740.5,577.8 742.0,581.8 743.5,585.8 745.0,589.8 746.5,593.7 748.0,597.6 749.5,601.5 751.0,605.4 752.5,609.2 754.0,612.9 755.5,616.6 757.0,620.3 758.5,623.8 760.0,627.3 761.5,630.7 763.0,634.1 764.5,637.3 766.0,640.5 767.5,643.5 769.0,646.5 770.5,649.4 772.0,652.1 773.5,654.8 775.0,657.3 776.5,659.7 778.0,662.0 779.5,664.2 781.0,666.3 782.5,668.2 784.0,670.0 785.5,671.6 787.0,673.1 788.5,674.5 790.0,675.7 791.5,676.8 793.0,677.8 794.5,678.6 796.0,679.3 797.5,679.8 799.0,680.1 800.5,680.3 802.0,680.4 803.5,680.3 805.0,680.1 806.5,679.7 808.0,679.2 809.5,678.5 811.0,677.7 812.5,676.7 814.0,675.6 815.5,674.3 817.0,672.9 818.5,671.4 820.0,669.7 821.5,667.9 823.0,666.0 824.5,663.9 826.0,661.7 827.5,659.4 829.0,657.0 830.5,654.4 832.0,651.8 833.5,649.0 835.0,646.1 836.5,643.1 838.0,640.1 839.5,636.9 841.0,633.6 842.5,630.3 844.0,626.8 845.5,623.3 847.0,619.8 848.5,616.1 850.0,612.4 851.5,608.7 853.0,604.9 854.5,601.0 856.0,597.1 857.5,593.2 859.0,589.2 860.5,585.2 862.0,581.2 863.5,577.2 865.0,573.2 866.5,569.2 868.0,565.2 869.5,561.2 871.0,557.2 872.5,553.2 874.0,549.2 875.5,545.3 877.0,541.4 878.5,537.6 880.0,533.8 881.5,530.0 883.0,526.3 884.5,522.7 886.0,519.1 887.5,515.7 889.0,512.2"/><polyline stroke="#980000" stroke-width="1.25" points="40.0,680.2 41.5,679.9 43.0,679.4 44.5,678.9 46.0,678.1 47.5,677.3 49.0,676.3 50.5,675.1 52.0,673.8 53.5,672.4 55.0,670.9 56.5,669.2 58.0,667.4 59.5,665.5 61.0,663.5 62.5,661.3 64.0,659.0 65.5,656.7 67.0,654.2 68.5,651.6 70.0,648.8 71.5,646.0 73.0,643.1 74.5,640.2 76.0,637.1 77.5,633.9 79.0,630.7 80.5,627.4 82.0,624.0 83.5,620.6 85.0,617.0 86.5,613.5 88.0,609.9 89.5,606.2 91.0,602.5 92.5,598.8 94.0,595.0 95.5,591.2 97.0,587.4 98.5,583.6 100.0,579.8 101.5,576.0 103.0,572.1 104.5,568.3 106.0,564.5 107.5,560.7 109.0,556.9 110.5,553.2 112.0,549.4 113.5,545.8 115.0,542.1 116.5,538.5 118.0,535.0 119.5,531.5 121.0,528.1 122.5,524.7 124.0,521.5 125.5,518.2 127.0,515.1 128.5,512.1 130.0,509.1 131.5,506.3 133.0,503.5 134.5,500.8 136.0,498.3 137.5,495.8 139.0,493.5 140.5,491.3 142.0,489.1 143.5,487.1 145.0,485.3 146.5,483.5 148.0,481.9 149.5,480.4 151.0,479.1 152.5,477.9 154.0,476.8 155.5,475.8 157.0,475.0 158.5,474.3 160.0,473.8 161.5,473.4 163.0,473.2 164.5,473.1 166.0,473.1 167.5,473.3 169.0,473.6 170.5,474.0 172.0,474.6 173.5,475.4 175.0,476.2 176.5,477.3 178.0,478.4 179.5,479.7 181.0,481.1 182.5,482.7 184.0,484.3 185.5,486.1 187.0,488.1 188.5,490.1 190.0,492.3 191.5,494.6 193.0,497.0 194.5,499.5 196.0,502.1 197.5,504.8 199.0,507.6 200.5,510.5 202.0,513.5 203.5,516.6 205.0,519.7 206.5,523.0 208.0,526.3 209.5,529.7 211.0,533.1 212.5,536.6 214.0,540.2 215.5,543.8 217.0,547.5 218.5,551.2 220.0,554.9 221.5,558.7 223.0,562.5 224.5,566.3 226.0,570.1 227.5,573.9 229.0,577.7 230.5,581.6 232.0,585.4 233.5,589.2 235.0,593.0 236.5,596.8 238.0,600.5 239.5,604.3 241.0,607.9 242.5,611.6 244.0,615.2 245.5,618.7 247.0,622.2 248.5,625.6 250.0,628.9 251.5,632.2 253.0,635.4 254.5,638.5 256.0,641.6 257.5,644.5 259.0,647.4 260.5,650.1 262.0,652.8 263.5,655.3 265.0,657.8 266.5,660.1 268.0,662.3 269.5,664.4 271.0,666.4 272.5,668.3 274.0,670.0 275.5,671.6 277.0,673.1 278.5,674.5 280.0,675.7 281.5,676.7 283.0,677.7 284.5,678.5 286.0,679.2 287.5,679.7 289.0,680.1 290.5,680.3 292.0,680.4 293.5,680.4 295.0,680.2 296.5,679.8 298.0,679.4 299.5,678.8 301.0,678.0 302.5,677.1 304.0,676.1 305.5,675.0 307.0,673.7 308.5,672.2 310.0,670.7 311.5,669.0 313.0,667.2 314.5,665.2 316.0,663.2 317.5,661.0 319.0,658.7 320.5,656.3 322.0,653.8 323.5,651.2 325.0,648.5 326.5,645.7 328.0,642.8 329.5,639.8 331.0,636.7 332.5,633.5 334.0,630.2 335.5,626.9 337.0,623.5 338.5,620.1 340.0,616.6 341.5,613.0 343.0,609.4 344.5,605.7 346.0,602.0 347.5,598.3 349.0,594.5 350.5,590.7 352.0,586.9 353.5,583.1 355.0,579.3 356.5,575.4 358.0,571.6 359.5,567.8 361.0,564.0 362.5,560.2 364.0,556.4 365.5,552.7 367.0,548.9 368.5,545.3 370.0,541.6 371.5,538.1 373.0,534.5 374.5,531.0 376.0,527.6 377.5,524.3 379.0,521.0 380.5,517.8 382.0,514.7 383.5,511.7 385.0,508.7 386.5,505.9 388.0,503.1 389.5,500.5 391.0,497.9 392.5,495.5 394.0,493.2 395.5,491.0 397.0,488.9 398.5,486.9 400.0,485.0 401.5,483.3 403.0,481.7 404.5,480.2 406.0,478.9 407.5,477.7 409.0,476.6 410.5,475.7 412.0,474.9 413.5,474.3 415.0,473.7 416.5,473.4 418.0,473.1 419.5,473.0 421.0,473.1 422.5,473.3 424.0,473.6 425.5,474.1 427.0,474.7 428.5,475.5 430.0,476.4 431.5,477.4 433.0,478.6 434.5,479.9 436.0,481.3 437.5,482.9 439.0,484.6 440.5,486.4 442.0,488.3 443.5,490.4 445.0,492.6 446.5,494.9 448.0,497.3 449.5,499.8 451.0,502.4 452.5,505.1 454.0,508.0 455.5,510.9 457.0,513.9 458.5,517.0 460.0,520.2 461.5,523.4 463.0,526.7 464.5,530.1 466.0,533.6 467.5,537.1 469.0,540.7 470.5,544.3 472.0,548.0 473.5,551.7 475.0,555.4 476.5,559.2 478.0,563.0 479.5,566.8 481.0,570.6 482.5,574.4 484.0,578.3 485.5,582.1 487.0,585.9 488.5,589.7 490.0,593.5 491.5,597.3 493.0,601.0 494.5,604.7 496.0,608.4 497.5,612.0 499.0,615.6 500.5,619.2 502.0,622.6 503.5,626.0 505.0,629.4 506.5,632.6 508.0,635.8 509.5,638.9 511.0,642.0 512.5,644.9 514.0,647.7 515.5,650.5 517.0,653.1 518.5,655.7 520.0,658.1 521.5,660.4 523.0,662.6 524.5,664.7 526.0,666.7 527.5,668.5 529.0,670.2 530.5,671.8 532.0,673.3 533.5,674.6 535.0,675.8 536.5,676.9 538.0,677.8 539.5,678.6 541.0,679.2 542.5,679.7 544.0,680.1 545.5,680.3 547.0,680.4 548.5,680.3 550.0,680.1 551.5,679.8 553.0,679.3 554.5,678.7 556.0,677.9 557.5,677.0 559.0,676.0 560.5,674.8 562.0,673.5 563.5,672.0 565.0,670.5 566.5,668.8 568.0,666.9 569.5,665.0 571.0,662.9 572.5,660.7 574.0,658.4 575.5,656.0 577.0,653.5 578.5,650.8 580.0,648.1 581.5,645.3 583.0,642.4 584.5,639.3 586.0,636.2 587.5,633.1 589.0,629.8 590.5,626.5 592.0,623.1 593.5,619.6 595.0,616.1 596.5,612.5 598.0,608.9 599.5,605.2 601.0,601.5 602.5,597.8 604.0,594.0 605.5,590.2 607.0,586.4 608.5,582.6 610.0,578.8 611.5,574.9 613.0,571.1 614.5,567.3 616.0,563.5 617.5,559.7 619.0,555.9 620.5,552.2 622.0,548.5 623.5,544.8 625.0,541.2 626.5,537.6 628.0,534.1 629.5,530.6 631.0,527.2 632.5,523.9 634.0,520.6 635.5,517.4 637.0,514.3 638.5,511.3 640.0,508.4 641.5,505.5 643.0,502.8 644.5,500.1 646.0,497.6 647.5,495.2 649.0,492.9 650.5,490.7 652.0,488.6 653.5,486.6 655.0,484.8 656.5,483.1 658.0,481.5 659.5,480.1 661.0,478.7 662.5,477.6 664.0,476.5 665.5,475.6 667.0,474.8 668.5,474.2 670.0,473.7 671.5,473.3 673.0,473.1 674.5,473.0 676.0,473.1 677.5,473.3 679.0,473.7 680.5,474.2 682.0,474.8 683.5,475.6 685.0,476.5 686.5,477.6 688.0,478.7 689.5,480.1 691.0,481.5 692.5,483.1 694.0,484.8 695.5,486.6 697.0,488.6 698.5,490.7 700.0,492.9 701.5,495.2 703.0,497.6 704.5,500.1 706.0,502.8 707.5,505.5 709.0,508.4 710.5,511.3 712.0,514.3 713.5,517.4 715.0,520.6 716.5,523.9 718.0,527.2 719.5,530.6 721.0,534.1 722.5,537.6 724.0,541.2 725.5,544.8 727.0,548.5 728.5,552.2 730.0,555.9 731.5,559.7 733.0,563.5 734.5,567.3 736.0,571.1 737.5,574.9 739.0,578.8 740.5,582.6 742.0,586.4 743.5,590.2 745.0,594.0 746.5,597.8 748.0,601.5 749.5,605.2 751.0,608.9 752.5,612.5 754.0,616.1 755.5,619.6 757.0,623.1 758.5,626.5 760.0,629.8 761.5,633.1 763.0,636.2 764.5,639.3 766.0,642.4 767.5,645.3 769.0,648.1 770.5,650.8 772.0,653.5 773.5,656.0 775.0,658.4 776.5,660.7 778.0,662.9 779.5,665.0 781.0,666.9 782.5,668.8 784.0,670.5 785.5,672.0 787.0,673.5 788.5,674.8 790.0,676.0 791.5,677.0 793.0,677.9 794.5,678.7 796.0,679.3 797.5,679.8 799.0,680.1 800.5,680.3 802.0,680.4 803.5,680.3 805.0,680.1 806.5,679.7 808.0,679.2 809.5,678.6 811.0,677.8 812.5,676.9 814.0,675.8 815.5,674.6 817.0,673.3 818.5,671.8 820.0,670.2 821.5,668.5 823.0,666.7 824.5,664.7 826.0,662.6 827.5,660.4 829.0,658.1 830.5,655.7 832.0,653.1 833.5,650.5 835.0,647.7 836.5,644.9 838.0,642.0 839.5,638.9 841.0,635.8 842.5,632.6 844.0,629.4 845.5,626.0 847.0,622.6 848.5,619.2 850.0,615.6 851.5,612.0 853.0,608.4 854.5,604.7 856.0,601.0 857.5,597.3 859.0,593.5 860.5,589.7 862.0,585.9 863.5,582.1 865.0,578.3 866.5,574.4 868.0,570.6 869.5,566.8 871.0,563.0 872.5,559.2 874.0,555.4 875.5,551.7 877.0,548.0 878.5,544.3 880.0,540.7 881.5,537.1 883.0,533.6 884.5,530.1 886.0,526.7 887.5,523.4 889.0,520.2"/><polyline stroke="#8a008a" stroke-width="1.25" points="40.0,680.2 41.5,679.9 43.0,679.5 44.5,678.9 46.0,678.2 47.5,677.4 49.0,676.4 50.5,675.4 52.0,674.1 53.5,672.8 55.0,671.3 56.5,669.7 58.0,668.0 59.5,666.2 61.0,664.2 62.5,662.2 64.0,660.0 65.5,657.7 67.0,655.3 68.5,652.9 70.0,650.3 71.5,647.6 73.0,644.8 74.5,642.0 76.0,639.0 77.5,636.0 79.0,632.9 80.5,629.8 82.0,626.5 83.5,623.2 85.0,619.9 86.5,616.5 88.0,613.0 89.5,609.6 91.0,606.0 92.5,602.5 94.0,598.9 95.5,595.3 97.0,591.6 98.5,588.0 100.0,584.3 101.5,580.7 103.0,577.0 104.5,573.3 106.0,569.7 107.5,566.1 109.0,562.5 110.5,558.9 112.0,555.3 113.5,551.8 115.0,548.3 116.5,544.9 118.0,541.5 119.5,538.2 121.0,534.9 122.5,531.7 124.0,528.6 125.5,525.5 127.0,522.6 128.5,519.7 130.0,516.8 131.5,514.1 133.0,511.5 134.5,508.9 136.0,506.5 137.5,504.1 139.0,501.9 140.5,499.8 142.0,497.7 143.5,495.8 145.0,494.1 146.5,492.4 148.0,490.8 149.5,489.4 151.0,488.1 152.5,487.0 154.0,485.9 155.5,485.0 157.0,484.2 158.5,483.6 160.0,483.1 161.5,482.7 163.0,482.5 164.5,482.4 166.0,482.4 167.5,482.6 169.0,482.9 170.5,483.3 172.0,483.9 173.5,484.6 175.0,485.4 176.5,486.4 178.0,487.5 179.5,488.7 181.0,490.1 182.5,491.6 184.0,493.2 185.5,494.9 187.0,496.7 188.5,498.7 190.0,500.7 191.5,502.9 193.0,505.2 194.5,507.6 196.0,510.1 197.5,512.7 199.0,515.4 200.5,518.1 202.0,521.0 203.5,523.9 205.0,527.0 206.5,530.1 208.0,533.2 209.5,536.5 211.0,539.7 212.5,543.1 214.0,546.5 215.5,550.0 217.0,553.4 218.5,557.0 220.0,560.5 221.5,564.1 223.0,567.8 224.5,571.4 226.0,575.0 227.5,578.7 229.0,582.4 230.5,586.0 232.0,589.7 233.5,593.3 235.0,596.9 236.5,600.6 238.0,604.1 239.5,607.7 241.0,611.2 242.5,614.7 244.0,618.1 245.5,621.5 247.0,624.8 248.5,628.0 250.0,631.2 251.5,634.4 253.0,637.4 254.5,640.4 256.0,643.3 257.5,646.1 259.0,648.9 260.5,651.5 262.0,654.0 263.5,656.5 265.0,658.8 266.5,661.0 268.0,663.1 269.5,665.2 271.0,667.1 272.5,668.8 274.0,670.5 275.5,672.0 277.0,673.4 278.5,674.7 280.0,675.9 281.5,676.9 283.0,677.8 284.5,678.6 286.0,679.2 287.5,679.7 289.0,680.1 290.5,680.3 292.0,680.4 293.5,680.4 295.0,680.2 296.5,679.9 298.0,679.4 299.5,678.8 301.0,678.1 302.5,677.3 304.0,676.3 305.5,675.2 307.0,674.0 308.5,672.6 310.0,671.1 311.5,669.5 313.0,667.8 314.5,665.9 316.0,664.0 317.5,661.9 319.0,659.7 320.5,657.4 322.0,655.0 323.5,652.5 325.0,649.9 326.5,647.2 328.0,644.4 329.5,641.6 331.0,638.6 332.5,635.6 334.0,632.5 335.5,629.3 337.0,626.1 338.5,622.8 340.0,619.4 341.5,616.0 343.0,612.6 344.5,609.1 346.0,605.6 347.5,602.0 349.0,598.4 350.5,594.8 352.0,591.1 353.5,587.5 355.0,583.8 356.5,580.2 358.0,576.5 359.5,572.9 361.0,569.2 362.5,565.6 364.0,562.0 365.5,558.4 367.0,554.9 368.5,551.3 370.0,547.9 371.5,544.5 373.0,541.1 374.5,537.8 376.0,534.5 377.5,531.3 379.0,528.2 380.5,525.1 382.0,522.2 383.5,519.3 385.0,516.5 386.5,513.7 388.0,511.1 389.5,508.6 391.0,506.1 392.5,503.8 394.0,501.6 395.5,499.5 397.0,497.5 398.5,495.6 400.0,493.8 401.5,492.2 403.0,490.6 404.5,489.2 406.0,488.0 407.5,486.8 409.0,485.8 410.5,484.9 412.0,484.2 413.5,483.5 415.0,483.0 416.5,482.7 418.0,482.5 419.5,482.4 421.0,482.4 422.5,482.6 424.0,482.9 425.5,483.4 427.0,484.0 428.5,484.7 430.0,485.5 431.5,486.5 433.0,487.6 434.5,488.9 436.0,490.3 437.5,491.8 439.0,493.4 440.5,495.1 442.0,497.0 443.5,498.9 445.0,501.0 446.5,503.2 448.0,505.5 449.5,507.9 451.0,510.4 452.5,513.0 454.0,515.7 455.5,518.5 457.0,521.4 458.5,524.3 460.0,527.4 461.5,530.5 463.0,533.7 464.5,536.9 466.0,540.2 467.5,543.6 469.0,547.0 470.5,550.4 472.0,553.9 473.5,557.5 475.0,561.0 476.5,564.6 478.0,568.2 479.5,571.9 481.0,575.5 482.5,579.2 484.0,582.9 485.5,586.5 487.0,590.2 488.5,593.8 490.0,597.4 491.5,601.0 493.0,604.6 494.5,608.2 496.0,611.7 497.5,615.1 499.0,618.5 500.5,621.9 502.0,625.2 503.5,628.5 505.0,631.7 506.5,634.8 508.0,637.8 509.5,640.8 511.0,643.7 512.5,646.5 514.0,649.2 515.5,651.8 517.0,654.4 518.5,656.8 520.0,659.1 521.5,661.3 523.0,663.4 524.5,665.4 526.0,667.3 527.5,669.1 529.0,670.7 530.5,672.2 532.0,673.6 533.5,674.9 535.0,676.0 536.5,677.0 538.0,677.9 539.5,678.7 541.0,679.3 542.5,679.8 544.0,680.1 545.5,680.3 547.0,680.4 548.5,680.3 550.0,680.1 551.5,679.8 553.0,679.4 554.5,678.8 556.0,678.0 557.5,677.2 559.0,676.2 560.5,675.0 562.0,673.8 563.5,672.4 565.0,670.9 566.5,669.3 568.0,667.5 569.5,665.7 571.0,663.7 572.5,661.6 574.0,659.4 575.5,657.1 577.0,654.7 578.5,652.2 580.0,649.6 581.5,646.9 583.0,644.1 584.5,641.2 586.0,638.2 587.5,635.2 589.0,632.1 590.5,628.9 592.0,625.7 593.5,622.4 595.0,619.0 596.5,615.6 598.0,612.1 599.5,608.6 601.0,605.1 602.5,601.5 604.0,597.9 605.5,594.3 607.0,590.6 608.5,587.0 610.0,583.3 611.5,579.7 613.0,576.0 614.5,572.4 616.0,568.7 617.5,565.1 619.0,561.5 620.5,557.9 622.0,554.4 623.5,550.9 625.0,547.4 626.5,544.0 628.0,540.6 629.5,537.3 631.0,534.1 632.5,530.9 634.0,527.8 635.5,524.7 637.0,521.8 638.5,518.9 640.0,516.1 641.5,513.4 643.0,510.8 644.5,508.3 646.0,505.8 647.5,503.5 649.0,501.3 650.5,499.2 652.0,497.2 653.5,495.4 655.0,493.6 656.5,492.0 658.0,490.5 659.5,489.1 661.0,487.8 662.5,486.7 664.0,485.7 665.5,484.8 667.0,484.1 668.5,483.5 670.0,483.0 671.5,482.6 673.0,482.4 674.5,482.4 676.0,482.4 677.5,482.6 679.0,483.0 680.5,483.5 682.0,484.1 683.5,484.8 685.0,485.7 686.5,486.7 688.0,487.8 689.5,489.1 691.0,490.5 692.5,492.0 694.0,493.6 695.5,495.4 697.0,497.2 698.5,499.2 700.0,501.3 701.5,503.5 703.0,505.8 704.5,508.3 706.0,510.8 707.5,513.4 709.0,516.1 710.5,518.9 712.0,521.8 713.5,524.7 715.0,527.8 716.5,530.9 718.0,534.1 719.5,537.3 721.0,540.6 722.5,544.0 724.0,547.4 725.5,550.9 727.0,554.4 728.5,557.9 730.0,561.5 731.5,565.1 733.0,568.7 734.5,572.4 736.0,576.0 737.5,579.7 739.0,583.3 740.5,587.0 742.0,590.6 743.5,594.3 745.0,597.9 746.5,601.5 748.0,605.1 749.5,608.6 751.0,612.1 752.5,615.6 754.0,619.0 755.5,622.4 757.0,625.7 758.5,628.9 760.0,632.1 761.5,635.2 763.0,638.2 764.5,641.2 766.0,644.1 767.5,646.9 769.0,649.6 770.5,652.2 772.0,654.7 773.5,657.1 775.0,659.4 776.5,661.6 778.0,663.7 779.5,665.7 781.0,667.5 782.5,669.3 784.0,670.9 785.5,672.4 787.0,673.8 788.5,675.0 790.0,676.2 791.5,677.2 793.0,678.0 794.5,678.8 796.0,679.4 797.5,679.8 799.0,680.1 800.5,680.3 802.0,680.4 803.5,680.3 805.0,680.1 806.5,679.8 808.0,679.3 809.5,678.7 811.0,677.9 812.5,677.0 814.0,676.0 815.5,674.9 817.0,673.6 818.5,672.2 820.0,670.7 821.5,669.1 823.0,667.3 824.5,665.4 826.0,663.4 827.5,661.3 829.0,659.1 830.5,656.8 832.0,654.4 833.5,651.8 835.0,649.2 836.5,646.5 838.0,643.7 839.5,640.8 841.0,637.8 842.5,634.8 844.0,631.7 845.5,628.5 847.0,625.2 848.5,621.9 850.0,618.5 851.5,615.1 853.0,611.7 854.5,608.2 856.0,604.6 857.5,601.0 859.0,597.4 860.5,593.8 862.0,590.2 863.5,586.5 865.0,582.9 866.5,579.2 868.0,575.5 869.5,571.9 871.0,568.2 872.5,564.6 874.0,561.0 875.5,557.5 877.0,553.9 878.5,550.4 880.0,547.0 881.5,543.6 883.0,540.2 884.5,536.9 886.0,533.7 887.5,530.5 889.0,527.4"/><polyline stroke="#8a8a00" stroke-width="1.25" points="40.0,680.2 41.5,679.9 43.0,679.5 44.5,679.0 46.0,678.3 47.5,677.5 49.0,676.6 50.5,675.6 52.0,674.4 53.5,673.1 55.0,671.7 56.5,670.2 58.0,668.5 59.5,666.8 61.0,664.9 62.5,663.0 64.0,660.9 65.5,658.7 67.0,656.4 68.5,654.0 70.0,651.6 71.5,649.0 73.0,646.4 74.5,643.6 76.0,640.8 77.5,637.9 79.0,635.0 80.5,631.9 82.0,628.9 83.5,625.7 85.0,622.5 86.5,619.2 88.0,615.9 89.5,612.6 91.0,609.2 92.5,605.8 94.0,602.4 95.5,598.9 97.0,595.4 98.5,592.0 100.0,588.5 101.5,584.9 103.0,581.4 104.5,577.9 106.0,574.5 107.5,571.0 109.0,567.5 110.5,564.1 112.0,560.7 113.5,557.3 115.0,554.0 116.5,550.7 118.0,547.5 119.5,544.3 121.0,541.2 122.5,538.1 124.0,535.1 125.5,532.2 127.0,529.3 128.5,526.6 130.0,523.9 131.5,521.3 133.0,518.7 134.5,516.3 136.0,514.0 137.5,511.7 139.0,509.6 140.5,507.5 142.0,505.6 143.5,503.8 145.0,502.1 146.5,500.5 148.0,499.0 149.5,497.6 151.0,496.4 152.5,495.3 154.0,494.3 155.5,493.4 157.0,492.7 158.5,492.1 160.0,491.6 161.5,491.2 163.0,491.0 164.5,490.9 166.0,490.9 167.5,491.1 169.0,491.4 170.5,491.8 172.0,492.3 173.5,493.0 175.0,493.8 176.5,494.7 178.0,495.8 179.5,497.0 181.0,498.3 182.5,499.7 184.0,501.2 185.5,502.9 187.0,504.6 188.5,506.5 190.0,508.5 191.5,510.6 193.0,512.7 194.5,515.0 196.0,517.4 197.5,519.9 199.0,522.5 200.5,525.1 202.0,527.9 203.5,530.7 205.0,533.6 206.5,536.5 208.0,539.6 209.5,542.7 211.0,545.8 212.5,549.0 214.0,552.3 215.5,555.6 217.0,558.9 218.5,562.3 220.0,565.7 221.5,569.1 223.0,572.6 224.5,576.1 226.0,579.6 227.5,583.1 229.0,586.6 230.5,590.1 232.0,593.6 233.5,597.1 235.0,600.5 236.5,604.0 238.0,607.4 239.5,610.8 241.0,614.2 242.5,617.5 244.0,620.8 245.5,624.0 247.0,627.2 248.5,630.3 250.0,633.4 251.5,636.4 253.0,639.3 254.5,642.1 256.0,644.9 257.5,647.6 259.0,650.2 260.5,652.7 262.0,655.2 263.5,657.5 265.0,659.7 266.5,661.9 268.0,663.9 269.5,665.8 271.0,667.6 272.5,669.3 274.0,670.9 275.5,672.4 277.0,673.7 278.5,675.0 280.0,676.1 281.5,677.1 283.0,677.9 284.5,678.7 286.0,679.3 287.5,679.7 289.0,680.1 290.5,680.3 292.0,680.4 293.5,680.4 295.0,680.2 296.5,679.9 298.0,679.5 299.5,678.9 301.0,678.2 302.5,677.4 304.0,676.5 305.5,675.4 307.0,674.2 308.5,672.9 310.0,671.5 311.5,670.0 313.0,668.3 314.5,666.6 316.0,664.7 317.5,662.7 319.0,660.6 320.5,658.4 322.0,656.1 323.5,653.7 325.0,651.2 326.5,648.7 328.0,646.0 329.5,643.3 331.0,640.4 332.5,637.5 334.0,634.6 335.5,631.5 337.0,628.4 338.5,625.3 340.0,622.1 341.5,618.8 343.0,615.5 344.5,612.2 346.0,608.8 347.5,605.4 349.0,601.9 350.5,598.5 352.0,595.0 353.5,591.5 355.0,588.0 356.5,584.5 358.0,581.0 359.5,577.5 361.0,574.0 362.5,570.5 364.0,567.1 365.5,563.7 367.0,560.3 368.5,556.9 370.0,553.6 371.5,550.3 373.0,547.1 374.5,543.9 376.0,540.8 377.5,537.7 379.0,534.7 380.5,531.8 382.0,529.0 383.5,526.2 385.0,523.5 386.5,520.9 388.0,518.4 389.5,516.0 391.0,513.6 392.5,511.4 394.0,509.3 395.5,507.3 397.0,505.4 398.5,503.5 400.0,501.9 401.5,500.3 403.0,498.8 404.5,497.5 406.0,496.2 407.5,495.1 409.0,494.2 410.5,493.3 412.0,492.6 413.5,492.0 415.0,491.5 416.5,491.2 418.0,491.0 419.5,490.9 421.0,490.9 422.5,491.1 424.0,491.4 425.5,491.9 427.0,492.4 428.5,493.1 430.0,493.9 431.5,494.9 433.0,495.9 434.5,497.1 436.0,498.4 437.5,499.9 439.0,501.4 440.5,503.1 442.0,504.9 443.5,506.7 445.0,508.7 446.5,510.8 448.0,513.0 449.5,515.3 451.0,517.7 452.5,520.2 454.0,522.8 455.5,525.5 457.0,528.2 458.5,531.1 460.0,534.0 461.5,536.9 463.0,540.0 464.5,543.1 466.0,546.2 467.5,549.4 469.0,552.7 470.5,556.0 472.0,559.4 473.5,562.7 475.0,566.2 476.5,569.6 478.0,573.1 479.5,576.5 481.0,580.0 482.5,583.5 484.0,587.0 485.5,590.6 487.0,594.0 488.5,597.5 490.0,601.0 491.5,604.4 493.0,607.9 494.5,611.3 496.0,614.6 497.5,617.9 499.0,621.2 500.5,624.4 502.0,627.6 503.5,630.7 505.0,633.8 506.5,636.7 508.0,639.7 509.5,642.5 511.0,645.3 512.5,648.0 514.0,650.6 515.5,653.1 517.0,655.5 518.5,657.8 520.0,660.0 521.5,662.1 523.0,664.2 524.5,666.1 526.0,667.9 527.5,669.5 529.0,671.1 530.5,672.6 532.0,673.9 533.5,675.1 535.0,676.2 536.5,677.2 538.0,678.0 539.5,678.7 541.0,679.3 542.5,679.8 544.0,680.1 545.5,680.3 547.0,680.4 548.5,680.3 550.0,680.2 551.5,679.8 553.0,679.4 554.5,678.8 556.0,678.1 557.5,677.3 559.0,676.3 560.5,675.3 562.0,674.1 563.5,672.8 565.0,671.3 566.5,669.8 568.0,668.1 569.5,666.3 571.0,664.4 572.5,662.4 574.0,660.3 575.5,658.1 577.0,655.8 578.5,653.4 580.0,650.9 581.5,648.3 583.0,645.6 584.5,642.9 586.0,640.0 587.5,637.1 589.0,634.2 590.5,631.1 592.0,628.0 593.5,624.9 595.0,621.6 596.5,618.4 598.0,615.1 599.5,611.7 601.0,608.3 602.5,604.9 604.0,601.5 605.5,598.0 607.0,594.5 608.5,591.0 610.0,587.5 611.5,584.0 613.0,580.5 614.5,577.0 616.0,573.5 617.5,570.1 619.0,566.6 620.5,563.2 622.0,559.8 623.5,556.5 625.0,553.1 626.5,549.9 628.0,546.7 629.5,543.5 631.0,540.4 632.5,537.3 634.0,534.3 635.5,531.4 637.0,528.6 638.5,525.8 640.0,523.2 641.5,520.6 643.0,518.1 644.5,515.7 646.0,513.3 647.5,511.1 649.0,509.0 650.5,507.0 652.0,505.1 653.5,503.3 655.0,501.6 656.5,500.1 658.0,498.6 659.5,497.3 661.0,496.1 662.5,495.0 664.0,494.1 665.5,493.2 667.0,492.5 668.5,491.9 670.0,491.5 671.5,491.2 673.0,491.0 674.5,490.9 676.0,491.0 677.5,491.2 679.0,491.5 680.5,491.9 682.0,492.5 683.5,493.2 685.0,494.1 686.5,495.0 688.0,496.1 689.5,497.3 691.0,498.6 692.5,500.1 694.0,501.6 695.5,503.3 697.0,505.1 698.5,507.0 700.0,509.0 701.5,511.1 703.0,513.3 704.5,515.7 706.0,518.1 707.5,520.6 709.0,523.2 710.5,525.8 712.0,528.6 713.5,531.4 715.0,534.3 716.5,537.3 718.0,540.4 719.5,543.5 721.0,546.7 722.5,549.9 724.0,553.1 725.5,556.5 727.0,559.8 728.5,563.2 730.0,566.6 731.5,570.1 733.0,573.5 734.5,577.0 736.0,580.5 737.5,584.0 739.0,587.5 740.5,591.0 742.0,594.5 743.5,598.0 745.0,601.5 746.5,604.9 748.0,608.3 749.5,611.7 751.0,615.1 752.5,618.4 754.0,621.6 755.5,624.9 757.0,628.0 758.5,631.1 760.0,634.2 761.5,637.1 763.0,640.0 764.5,642.9 766.0,645.6 767.5,648.3 769.0,650.9 770.5,653.4 772.0,655.8 773.5,658.1 775.0,660.3 776.5,662.4 778.0,664.4 779.5,666.3 781.0,668.1 782.5,669.8 784.0,671.3 785.5,672.8 787.0,674.1 788.5,675.3 790.0,676.3 791.5,677.3 793.0,678.1 794.5,678.8 796.0,679.4 797.5,679.8 799.0,680.2 800.5,680.3 802.0,680.4 803.5,680.3 805.0,680.1 806.5,679.8 808.0,679.3 809.5,678.7 811.0,678.0 812.5,677.2 814.0,676.2 815.5,675.1 817.0,673.9 818.5,672.6 820.0,671.1 821.5,669.5 823.0,667.9 824.5,666.1 826.0,664.2 827.5,662.1 829.0,660.0 830.5,657.8 832.0,655.5 833.5,653.1 835.0,650.6 836.5,648.0 838.0,645.3 839.5,642.5 841.0,639.7 842.5,636.7 844.0,633.8 845.5,630.7 847.0,627.6 848.5,624.4 850.0,621.2 851.5,617.9 853.0,614.6 854.5,611.3 856.0,607.9 857.5,604.4 859.0,601.0 860.5,597.5 862.0,594.0 863.5,590.6 865.0,587.0 866.5,583.5 868.0,580.0 869.5,576.5 871.0,573.1 872.5,569.6 874.0,566.2 875.5,562.7 877.0,559.4 878.5,556.0 880.0,552.7 881.5,549.4 883.0,546.2 884.5,543.1 886.0,540.0 887.5,536.9 889.0,534.0"/><polyline stroke="#767676" stroke-width="1.25" points="40.0,680.2 41.5,680.0 43.0,679.6 44.5,679.0 46.0,678.4 47.5,677.7 49.0,676.8 50.5,675.8 52.0,674.7 53.5,673.4 55.0,672.1 56.5,670.6 58.0,669.0 59.5,667.4 61.0,665.6 62.5,663.7 64.0,661.7 65.5,659.6 67.0,657.4 68.5,655.1 70.0,652.8 71.5,650.3 73.0,647.8 74.5,645.1 76.0,642.4 77.5,639.7 79.0,636.8 80.5,633.9 82.0,631.0 83.5,628.0 85.0,624.9 86.5,621.8 88.0,618.6 89.5,615.4 91.0,612.2 92.5,608.9 94.0,605.6 95.5,602.3 97.0,598.9 98.5,595.6 100.0,592.2 101.5,588.9 103.0,585.5 104.5,582.2 106.0,578.8 107.5,575.5 109.0,572.2 110.5,568.9 112.0,565.6 113.5,562.4 115.0,559.2 116.5,556.1 118.0,553.0 119.5,549.9 121.0,546.9 122.5,544.0 124.0,541.1 125.5,538.3 127.0,535.6 128.5,532.9 130.0,530.3 131.5,527.8 133.0,525.4 134.5,523.1 136.0,520.8 137.5,518.7 139.0,516.6 140.5,514.7 142.0,512.8 143.5,511.1 145.0,509.4 146.5,507.9 148.0,506.5 149.5,505.2 151.0,504.0 152.5,502.9 154.0,502.0 155.5,501.1 157.0,500.4 158.5,499.8 160.0,499.4 161.5,499.0 163.0,498.8 164.5,498.7 166.0,498.7 167.5,498.9 169.0,499.2 170.5,499.6 172.0,500.1 173.5,500.7 175.0,501.5 176.5,502.4 178.0,503.4 179.5,504.5 181.0,505.8 182.5,507.1 184.0,508.6 185.5,510.2 187.0,511.9 188.5,513.7 190.0,515.6 191.5,517.6 193.0,519.7 194.5,521.9 196.0,524.1 197.5,526.5 199.0,529.0 200.5,531.5 202.0,534.2 203.5,536.9 205.0,539.6 206.5,542.5 208.0,545.4 209.5,548.3 211.0,551.4 212.5,554.4 214.0,557.6 215.5,560.7 217.0,563.9 218.5,567.2 220.0,570.4 221.5,573.7 223.0,577.1 224.5,580.4 226.0,583.7 227.5,587.1 229.0,590.5 230.5,593.8 232.0,597.2 233.5,600.5 235.0,603.8 236.5,607.1 238.0,610.4 239.5,613.7 241.0,616.9 242.5,620.1 244.0,623.2 245.5,626.3 247.0,629.4 248.5,632.4 250.0,635.3 251.5,638.2 253.0,641.0 254.5,643.7 256.0,646.4 257.5,649.0 259.0,651.5 260.5,653.9 262.0,656.2 263.5,658.4 265.0,660.6 266.5,662.6 268.0,664.6 269.5,666.4 271.0,668.2 272.5,669.8 274.0,671.3 275.5,672.7 277.0,674.0 278.5,675.2 280.0,676.3 281.5,677.2 283.0,678.0 284.5,678.7 286.0,679.3 287.5,679.8 289.0,680.1 290.5,680.3 292.0,680.4 293.5,680.4 295.0,680.2 296.5,679.9 298.0,679.5 299.5,679.0 301.0,678.3 302.5,677.5 304.0,676.6 305.5,675.6 307.0,674.5 308.5,673.2 310.0,671.9 311.5,670.4 313.0,668.8 314.5,667.1 316.0,665.3 317.5,663.4 319.0,661.4 320.5,659.3 322.0,657.1 323.5,654.8 325.0,652.4 326.5,650.0 328.0,647.4 329.5,644.8 331.0,642.1 332.5,639.3 334.0,636.5 335.5,633.5 337.0,630.6 338.5,627.6 340.0,624.5 341.5,621.4 343.0,618.2 344.5,615.0 346.0,611.7 347.5,608.5 349.0,605.2 350.5,601.8 352.0,598.5 353.5,595.2 355.0,591.8 356.5,588.4 358.0,585.1 359.5,581.7 361.0,578.4 362.5,575.1 364.0,571.8 365.5,568.5 367.0,565.2 368.5,562.0 370.0,558.8 371.5,555.7 373.0,552.6 374.5,549.5 376.0,546.5 377.5,543.6 379.0,540.8 380.5,538.0 382.0,535.2 383.5,532.6 385.0,530.0 386.5,527.5 388.0,525.1 389.5,522.8 391.0,520.5 392.5,518.4 394.0,516.4 395.5,514.4 397.0,512.6 398.5,510.8 400.0,509.2 401.5,507.7 403.0,506.3 404.5,505.0 406.0,503.8 407.5,502.8 409.0,501.9 410.5,501.0 412.0,500.3 413.5,499.8 415.0,499.3 416.5,499.0 418.0,498.8 419.5,498.7 421.0,498.8 422.5,498.9 424.0,499.2 425.5,499.6 427.0,500.2 428.5,500.8 430.0,501.6 431.5,502.5 433.0,503.6 434.5,504.7 436.0,506.0 437.5,507.3 439.0,508.8 440.5,510.4 442.0,512.1 443.5,513.9 445.0,515.8 446.5,517.8 448.0,519.9 449.5,522.2 451.0,524.5 452.5,526.8 454.0,529.3 455.5,531.9 457.0,534.5 458.5,537.2 460.0,540.0 461.5,542.8 463.0,545.8 464.5,548.7 466.0,551.8 467.5,554.8 469.0,558.0 470.5,561.1 472.0,564.4 473.5,567.6 475.0,570.9 476.5,574.2 478.0,577.5 479.5,580.8 481.0,584.2 482.5,587.5 484.0,590.9 485.5,594.3 487.0,597.6 488.5,601.0 490.0,604.3 491.5,607.6 493.0,610.9 494.5,614.1 496.0,617.3 497.5,620.5 499.0,623.6 500.5,626.7 502.0,629.8 503.5,632.8 505.0,635.7 506.5,638.6 508.0,641.3 509.5,644.1 511.0,646.7 512.5,649.3 514.0,651.8 515.5,654.2 517.0,656.5 518.5,658.7 520.0,660.9 521.5,662.9 523.0,664.8 524.5,666.7 526.0,668.4 527.5,670.0 529.0,671.5 530.5,672.9 532.0,674.2 533.5,675.3 535.0,676.4 536.5,677.3 538.0,678.1 539.5,678.8 541.0,679.4 542.5,679.8 544.0,680.1 545.5,680.3 547.0,680.4 548.5,680.3 550.0,680.2 551.5,679.9 553.0,679.4 554.5,678.9 556.0,678.2 557.5,677.4 559.0,676.5 560.5,675.5 562.0,674.3 563.5,673.1 565.0,671.7 566.5,670.2 568.0,668.6 569.5,666.9 571.0,665.1 572.5,663.2 574.0,661.1 575.5,659.0 577.0,656.8 578.5,654.5 580.0,652.1 581.5,649.6 583.0,647.1 584.5,644.4 586.0,641.7 587.5,638.9 589.0,636.1 590.5,633.2 592.0,630.2 593.5,627.1 595.0,624.1 596.5,620.9 598.0,617.8 599.5,614.5 601.0,611.3 602.5,608.0 604.0,604.7 605.5,601.4 607.0,598.1 608.5,594.7 610.0,591.3 611.5,588.0 613.0,584.6 614.5,581.3 616.0,577.9 617.5,574.6 619.0,571.3 620.5,568.0 622.0,564.8 623.5,561.6 625.0,558.4 626.5,555.3 628.0,552.2 629.5,549.1 631.0,546.2 632.5,543.2 634.0,540.4 635.5,537.6 637.0,534.9 638.5,532.2 640.0,529.7 641.5,527.2 643.0,524.8 644.5,522.5 646.0,520.2 647.5,518.1 649.0,516.1 650.5,514.2 652.0,512.3 653.5,510.6 655.0,509.0 656.5,507.5 658.0,506.1 659.5,504.9 661.0,503.7 662.5,502.7 664.0,501.7 665.5,500.9 667.0,500.3 668.5,499.7 670.0,499.3 671.5,499.0 673.0,498.8 674.5,498.7 676.0,498.8 677.5,499.0 679.0,499.3 680.5,499.7 682.0,500.3 683.5,500.9 685.0,501.7 686.5,502.7 688.0,503.7 689.5,504.9 691.0,506.1 692.5,507.5 694.0,509.0 695.5,510.6 697.0,512.3 698.5,514.2 700.0,516.1 701.5,518.1 703.0,520.2 704.5,522.5 706.0,524.8 707.5,527.2 709.0,529.7 710.5,532.2 712.0,534.9 713.5,537.6 715.0,540.4 716.5,543.2 718.0,546.2 719.5,549.1 721.0,552.2 722.5,555.3 724.0,558.4 725.5,561.6 727.0,564.8 728.5,568.0 730.0,571.3 731.5,574.6 733.0,577.9 734.5,581.3 736.0,584.6 737.5,588.0 739.0,591.3 740.5,594.7 742.0,598.1 743.5,601.4 745.0,604.7 746.5,608.0 748.0,611.3 749.5,614.5 751.0,617.8 752.5,620.9 754.0,624.1 755.5,627.1 757.0,630.2 758.5,633.2 760.0,636.1 761.5,638.9 763.0,641.7 764.5,644.4 766.0,647.1 767.5,649.6 769.0,652.1 770.5,654.5 772.0,656.8 773.5,659.0 775.0,661.1 776.5,663.2 778.0,665.1 779.5,666.9 781.0,668.6 782.5,670.2 784.0,671.7 785.5,673.1 787.0,674.3 788.5,675.5 790.0,676.5 791.5,677.4 793.0,678.2 794.5,678.9 796.0,679.4 797.5,679.9 799.0,680.2 800.5,680.3 802.0,680.4 803.5,680.3 805.0,680.1 806.5,679.8 808.0,679.4 809.5,678.8 811.0,678.1 812.5,677.3 814.0,676.4 815.5,675.3 817.0,674.2 818.5,672.9 820.0,671.5 821.5,670.0 823.0,668.4 824.5,666.7 826.0,664.8 827.5,662.9 829.0,660.9 830.5,658.7 832.0,656.5 833.5,654.2 835.0,651.8 836.5,649.3 838.0,646.7 839.5,644.1 841.0,641.3 842.5,638.6 844.0,635.7 845.5,632.8 847.0,629.8 848.5,626.7 850.0,623.6 851.5,620.5 853.0,617.3 854.5,614.1 856.0,610.9 857.5,607.6 859.0,604.3 860.5,601.0 862.0,597.6 863.5,594.3 865.0,590.9 866.5,587.5 868.0,584.2 869.5,580.8 871.0,577.5 872.5,574.2 874.0,570.9 875.5,567.6 877.0,564.4 878.5,561.1 880.0,558.0 881.5,554.8 883.0,551.8 884.5,548.7 886.0,545.8 887.5,542.8 889.0,540.0"/><polyline stroke="#b8b8b8" stroke-width="1.25" points="40.0,680.2 41.5,680.0 43.0,679.6 44.5,679.1 46.0,678.5 47.5,677.8 49.0,676.9 50.5,676.0 52.0,674.9 53.5,673.7 55.0,672.4 56.5,671.0 58.0,669.5 59.5,667.9 61.0,666.2 62.5,664.3 64.0,662.4 65.5,660.4 67.0,658.3 68.5,656.1 70.0,653.9 71.5,651.5 73.0,649.1 74.5,646.5 76.0,643.9 77.5,641.3 79.0,638.6 80.5,635.8 82.0,632.9 83.5,630.0 85.0,627.1 86.5,624.1 88.0,621.1 89.5,618.0 91.0,614.9 92.5,611.7 94.0,608.6 95.5,605.4 97.0,602.2 98.5,599.0 100.0,595.7 101.5,592.5 103.0,589.3 104.5,586.1 106.0,582.9 107.5,579.7 109.0,576.5 110.5,573.3 112.0,570.2 113.5,567.1 115.0,564.0 116.5,561.0 118.0,558.0 119.5,555.1 121.0,552.2 122.5,549.4 124.0,546.6 125.5,544.0 127.0,541.3 128.5,538.8 130.0,536.3 131.5,533.9 133.0,531.5 134.5,529.3 136.0,527.1 137.5,525.1 139.0,523.1 140.5,521.2 142.0,519.5 143.5,517.8 145.0,516.2 146.5,514.7 148.0,513.4 149.5,512.1 151.0,511.0 152.5,510.0 154.0,509.0 155.5,508.2 157.0,507.6 158.5,507.0 160.0,506.5 161.5,506.2 163.0,506.0 164.5,505.9 166.0,505.9 167.5,506.1 169.0,506.4 170.5,506.7 172.0,507.2 173.5,507.9 175.0,508.6 176.5,509.5 178.0,510.4 179.5,511.5 181.0,512.7 182.5,514.0 184.0,515.4 185.5,516.9 187.0,518.5 188.5,520.3 190.0,522.1 191.5,524.0 193.0,526.0 194.5,528.1 196.0,530.3 197.5,532.6 199.0,535.0 200.5,537.4 202.0,539.9 203.5,542.5 205.0,545.2 206.5,547.9 208.0,550.7 209.5,553.6 211.0,556.5 212.5,559.4 214.0,562.4 215.5,565.5 217.0,568.5 218.5,571.7 220.0,574.8 221.5,578.0 223.0,581.1 224.5,584.4 226.0,587.6 227.5,590.8 229.0,594.0 230.5,597.2 232.0,600.5 233.5,603.7 235.0,606.9 236.5,610.0 238.0,613.2 239.5,616.3 241.0,619.4 242.5,622.5 244.0,625.5 245.5,628.5 247.0,631.4 248.5,634.3 250.0,637.1 251.5,639.8 253.0,642.5 254.5,645.2 256.0,647.7 257.5,650.2 259.0,652.6 260.5,654.9 262.0,657.2 263.5,659.3 265.0,661.4 266.5,663.3 268.0,665.2 269.5,667.0 271.0,668.6 272.5,670.2 274.0,671.7 275.5,673.0 277.0,674.3 278.5,675.4 280.0,676.4 281.5,677.3 283.0,678.1 284.5,678.8 286.0,679.3 287.5,679.8 289.0,680.1 290.5,680.3 292.0,680.4 293.5,680.4 295.0,680.2 296.5,679.9 298.0,679.5 299.5,679.0 301.0,678.4 302.5,677.7 304.0,676.8 305.5,675.8 307.0,674.7 308.5,673.5 310.0,672.2 311.5,670.8 313.0,669.3 314.5,667.7 316.0,665.9 317.5,664.1 319.0,662.2 320.5,660.1 322.0,658.0 323.5,655.8 325.0,653.5 326.5,651.2 328.0,648.7 329.5,646.2 331.0,643.6 332.5,640.9 334.0,638.2 335.5,635.4 337.0,632.6 338.5,629.6 340.0,626.7 341.5,623.7 343.0,620.6 344.5,617.6 346.0,614.5 347.5,611.3 349.0,608.1 350.5,605.0 352.0,601.7 353.5,598.5 355.0,595.3 356.5,592.1 358.0,588.9 359.5,585.6 361.0,582.4 362.5,579.2 364.0,576.1 365.5,572.9 367.0,569.8 368.5,566.7 370.0,563.6 371.5,560.6 373.0,557.6 374.5,554.7 376.0,551.9 377.5,549.0 379.0,546.3 380.5,543.6 382.0,541.0 383.5,538.4 385.0,535.9 386.5,533.6 388.0,531.2 389.5,529.0 391.0,526.9 392.5,524.8 394.0,522.9 395.5,521.0 397.0,519.2 398.5,517.6 400.0,516.0 401.5,514.6 403.0,513.2 404.5,512.0 406.0,510.8 407.5,509.8 409.0,508.9 410.5,508.1 412.0,507.5 413.5,506.9 415.0,506.5 416.5,506.2 418.0,506.0 419.5,505.9 421.0,506.0 422.5,506.1 424.0,506.4 425.5,506.8 427.0,507.3 428.5,508.0 430.0,508.7 431.5,509.6 433.0,510.6 434.5,511.7 436.0,512.9 437.5,514.2 439.0,515.6 440.5,517.1 442.0,518.8 443.5,520.5 445.0,522.3 446.5,524.3 448.0,526.3 449.5,528.4 451.0,530.6 452.5,532.9 454.0,535.3 455.5,537.8 457.0,540.3 458.5,542.9 460.0,545.6 461.5,548.3 463.0,551.1 464.5,554.0 466.0,556.9 467.5,559.8 469.0,562.8 470.5,565.9 472.0,569.0 473.5,572.1 475.0,575.2 476.5,578.4 478.0,581.6 479.5,584.8 481.0,588.0 482.5,591.2 484.0,594.4 485.5,597.7 487.0,600.9 488.5,604.1 490.0,607.3 491.5,610.5 493.0,613.6 494.5,616.7 496.0,619.8 497.5,622.9 499.0,625.9 500.5,628.9 502.0,631.8 503.5,634.6 505.0,637.5 506.5,640.2 508.0,642.9 509.5,645.5 511.0,648.1 512.5,650.5 514.0,652.9 515.5,655.2 517.0,657.5 518.5,659.6 520.0,661.6 521.5,663.6 523.0,665.4 524.5,667.2 526.0,668.9 527.5,670.4 529.0,671.9 530.5,673.2 532.0,674.4 533.5,675.5 535.0,676.5 536.5,677.4 538.0,678.2 539.5,678.9 541.0,679.4 542.5,679.8 544.0,680.1 545.5,680.3 547.0,680.4 548.5,680.3 550.0,680.2 551.5,679.9 553.0,679.5 554.5,679.0 556.0,678.3 557.5,677.5 559.0,676.7 560.5,675.7 562.0,674.6 563.5,673.4 565.0,672.0 566.5,670.6 568.0,669.1 569.5,667.4 571.0,665.7 572.5,663.8 574.0,661.9 575.5,659.9 577.0,657.7 578.5,655.5 580.0,653.2 581.5,650.8 583.0,648.4 584.5,645.9 586.0,643.2 587.5,640.6 589.0,637.8 590.5,635.0 592.0,632.2 593.5,629.3 595.0,626.3 596.5,623.3 598.0,620.2 599.5,617.2 601.0,614.0 602.5,610.9 604.0,607.7 605.5,604.5 607.0,601.3 608.5,598.1 610.0,594.9 611.5,591.7 613.0,588.4 614.5,585.2 616.0,582.0 617.5,578.8 619.0,575.6 620.5,572.5 622.0,569.4 623.5,566.3 625.0,563.2 626.5,560.2 628.0,557.3 629.5,554.3 631.0,551.5 632.5,548.7 634.0,545.9 635.5,543.2 637.0,540.6 638.5,538.1 640.0,535.6 641.5,533.2 643.0,530.9 644.5,528.7 646.0,526.6 647.5,524.5 649.0,522.6 650.5,520.8 652.0,519.0 653.5,517.4 655.0,515.8 656.5,514.4 658.0,513.0 659.5,511.8 661.0,510.7 662.5,509.7 664.0,508.8 665.5,508.1 667.0,507.4 668.5,506.9 670.0,506.4 671.5,506.2 673.0,506.0 674.5,505.9 676.0,506.0 677.5,506.2 679.0,506.4 680.5,506.9 682.0,507.4 683.5,508.1 685.0,508.8 686.5,509.7 688.0,510.7 689.5,511.8 691.0,513.0 692.5,514.4 694.0,515.8 695.5,517.4 697.0,519.0 698.5,520.8 700.0,522.6 701.5,524.5 703.0,526.6 704.5,528.7 706.0,530.9 707.5,533.2 709.0,535.6 710.5,538.1 712.0,540.6 713.5,543.2 715.0,545.9 716.5,548.7 718.0,551.5 719.5,554.3 721.0,557.3 722.5,560.2 724.0,563.2 725.5,566.3 727.0,569.4 728.5,572.5 730.0,575.6 731.5,578.8 733.0,582.0 734.5,585.2 736.0,588.4 737.5,591.7 739.0,594.9 740.5,598.1 742.0,601.3 743.5,604.5 745.0,607.7 746.5,610.9 748.0,614.0 749.5,617.2 751.0,620.2 752.5,623.3 754.0,626.3 755.5,629.3 757.0,632.2 758.5,635.0 760.0,637.8 761.5,640.6 763.0,643.2 764.5,645.9 766.0,648.4 767.5,650.8 769.0,653.2 770.5,655.5 772.0,657.7 773.5,659.9 775.0,661.9 776.5,663.8 778.0,665.7 779.5,667.4 781.0,669.1 782.5,670.6 784.0,672.0 785.5,673.4 787.0,674.6 788.5,675.7 790.0,676.7 791.5,677.5 793.0,678.3 794.5,679.0 796.0,679.5 797.5,679.9 799.0,680.2 800.5,680.3 802.0,680.4 803.5,680.3 805.0,680.1 806.5,679.8 808.0,679.4 809.5,678.9 811.0,678.2 812.5,677.4 814.0,676.5 815.5,675.5 817.0,674.4 818.5,673.2 820.0,671.9 821.5,670.4 823.0,668.9 824.5,667.2 826.0,665.4 827.5,663.6 829.0,661.6 830.5,659.6 832.0,657.5 833.5,655.2 835.0,652.9 836.5,650.5 838.0,648.1 839.5,645.5 841.0,642.9 842.5,640.2 844.0,637.5 845.5,634.6 847.0,631.8 848.5,628.9 850.0,625.9 851.5,622.9 853.0,619.8 854.5,616.7 856.0,613.6 857.5,610.5 859.0,607.3 860.5,604.1 862.0,600.9 863.5,597.7 865.0,594.4 866.5,591.2 868.0,588.0 869.5,584.8 871.0,581.6 872.5,578.4 874.0,575.2 875.5,572.1 877.0,569.0 878.5,565.9 880.0,562.8 881.5,559.8 883.0,556.9 884.5,554.0 886.0,551.1 887.5,548.3 889.0,545.6"/><polyline stroke="#8040e0" stroke-width="1.25" points="40.0,680.2 41.5,680.0 43.0,679.6 44.5,679.2 46.0,678.6 47.5,677.9 49.0,677.0 50.5,676.1 52.0,675.1 53.5,674.0 55.0,672.7 56.5,671.4 58.0,669.9 59.5,668.4 61.0,666.7 62.5,665.0 64.0,663.1 65.5,661.2 67.0,659.2 68.5,657.1 70.0,654.9 71.5,652.6 73.0,650.2 74.5,647.8 76.0,645.3 77.5,642.8 79.0,640.2 80.5,637.5 82.0,634.7 83.5,632.0 85.0,629.1 86.5,626.2 88.0,623.3 89.5,620.4 91.0,617.4 92.5,614.3 94.0,611.3 95.5,608.2 97.0,605.2 98.5,602.1 100.0,599.0 101.5,595.9 103.0,592.8 104.5,589.7 106.0,586.6 107.5,583.5 109.0,580.4 110.5,577.4 112.0,574.4 113.5,571.4 115.0,568.5 116.5,565.6 118.0,562.7 119.5,559.9 121.0,557.1 122.5,554.4 124.0,551.7 125.5,549.2 127.0,546.6 128.5,544.2 130.0,541.8 131.5,539.5 133.0,537.2 134.5,535.1 136.0,533.0 137.5,531.0 139.0,529.1 140.5,527.3 142.0,525.6 143.5,524.0 145.0,522.5 146.5,521.1 148.0,519.7 149.5,518.5 151.0,517.4 152.5,516.5 154.0,515.6 155.5,514.8 157.0,514.2 158.5,513.6 160.0,513.2 161.5,512.9 163.0,512.7 164.5,512.6 166.0,512.6 167.5,512.7 169.0,513.0 170.5,513.4 172.0,513.8 173.5,514.4 175.0,515.2 176.5,516.0 178.0,516.9 179.5,517.9 181.0,519.1 182.5,520.3 184.0,521.7 185.5,523.2 187.0,524.7 188.5,526.4 190.0,528.1 191.5,530.0 193.0,531.9 194.5,533.9 196.0,536.1 197.5,538.2 199.0,540.5 200.5,542.9 202.0,545.3 203.5,547.8 205.0,550.4 206.5,553.0 208.0,555.7 209.5,558.4 211.0,561.2 212.5,564.0 214.0,566.9 215.5,569.8 217.0,572.8 218.5,575.8 220.0,578.8 221.5,581.9 223.0,584.9 224.5,588.0 226.0,591.1 227.5,594.2 229.0,597.3 230.5,600.4 232.0,603.5 233.5,606.6 235.0,609.7 236.5,612.7 238.0,615.8 239.5,618.8 241.0,621.7 242.5,624.7 244.0,627.6 245.5,630.5 247.0,633.3 248.5,636.0 250.0,638.7 251.5,641.4 253.0,644.0 254.5,646.5 256.0,649.0 257.5,651.4 259.0,653.7 260.5,655.9 262.0,658.0 263.5,660.1 265.0,662.1 266.5,664.0 268.0,665.8 269.5,667.5 271.0,669.1 272.5,670.6 274.0,672.0 275.5,673.3 277.0,674.5 278.5,675.6 280.0,676.6 281.5,677.4 283.0,678.2 284.5,678.9 286.0,679.4 287.5,679.8 289.0,680.1 290.5,680.3 292.0,680.4 293.5,680.4 295.0,680.2 296.5,680.0 298.0,679.6 299.5,679.1 301.0,678.5 302.5,677.8 304.0,676.9 305.5,676.0 307.0,674.9 308.5,673.8 310.0,672.5 311.5,671.2 313.0,669.7 314.5,668.1 316.0,666.5 317.5,664.7 319.0,662.9 320.5,660.9 322.0,658.9 323.5,656.8 325.0,654.6 326.5,652.3 328.0,649.9 329.5,647.5 331.0,645.0 332.5,642.4 334.0,639.8 335.5,637.1 337.0,634.4 338.5,631.6 340.0,628.7 341.5,625.9 343.0,622.9 344.5,620.0 346.0,617.0 347.5,613.9 349.0,610.9 350.5,607.8 352.0,604.7 353.5,601.7 355.0,598.6 356.5,595.4 358.0,592.3 359.5,589.2 361.0,586.2 362.5,583.1 364.0,580.0 365.5,577.0 367.0,574.0 368.5,571.0 370.0,568.1 371.5,565.2 373.0,562.3 374.5,559.5 376.0,556.8 377.5,554.0 379.0,551.4 380.5,548.8 382.0,546.3 383.5,543.8 385.0,541.5 386.5,539.1 388.0,536.9 389.5,534.8 391.0,532.7 392.5,530.7 394.0,528.9 395.5,527.1 397.0,525.4 398.5,523.8 400.0,522.3 401.5,520.9 403.0,519.6 404.5,518.4 406.0,517.3 407.5,516.3 409.0,515.5 410.5,514.7 412.0,514.1 413.5,513.5 415.0,513.1 416.5,512.8 418.0,512.6 419.5,512.6 421.0,512.6 422.5,512.8 424.0,513.0 425.5,513.4 427.0,513.9 428.5,514.5 430.0,515.3 431.5,516.1 433.0,517.0 434.5,518.1 436.0,519.3 437.5,520.5 439.0,521.9 440.5,523.4 442.0,524.9 443.5,526.6 445.0,528.4 446.5,530.2 448.0,532.2 449.5,534.2 451.0,536.3 452.5,538.5 454.0,540.8 455.5,543.2 457.0,545.6 458.5,548.1 460.0,550.7 461.5,553.3 463.0,556.0 464.5,558.8 466.0,561.6 467.5,564.4 469.0,567.3 470.5,570.2 472.0,573.2 473.5,576.2 475.0,579.2 476.5,582.3 478.0,585.3 479.5,588.4 481.0,591.5 482.5,594.6 484.0,597.7 485.5,600.8 487.0,603.9 488.5,607.0 490.0,610.1 491.5,613.1 493.0,616.2 494.5,619.2 496.0,622.1 497.5,625.1 499.0,628.0 500.5,630.8 502.0,633.6 503.5,636.4 505.0,639.1 506.5,641.7 508.0,644.3 509.5,646.8 511.0,649.3 512.5,651.7 514.0,654.0 515.5,656.2 517.0,658.3 518.5,660.4 520.0,662.3 521.5,664.2 523.0,666.0 524.5,667.7 526.0,669.3 527.5,670.8 529.0,672.2 530.5,673.5 532.0,674.6 533.5,675.7 535.0,676.7 536.5,677.5 538.0,678.3 539.5,678.9 541.0,679.5 542.5,679.9 544.0,680.2 545.5,680.3 547.0,680.4 548.5,680.3 550.0,680.2 551.5,679.9 553.0,679.5 554.5,679.0 556.0,678.4 557.5,677.7 559.0,676.8 560.5,675.9 562.0,674.8 563.5,673.6 565.0,672.4 566.5,671.0 568.0,669.5 569.5,667.9 571.0,666.2 572.5,664.5 574.0,662.6 575.5,660.6 577.0,658.6 578.5,656.5 580.0,654.3 581.5,652.0 583.0,649.6 584.5,647.2 586.0,644.7 587.5,642.1 589.0,639.5 590.5,636.8 592.0,634.0 593.5,631.2 595.0,628.4 596.5,625.5 598.0,622.5 599.5,619.6 601.0,616.6 602.5,613.5 604.0,610.5 605.5,607.4 607.0,604.3 608.5,601.2 610.0,598.1 611.5,595.0 613.0,591.9 614.5,588.8 616.0,585.8 617.5,582.7 619.0,579.6 620.5,576.6 622.0,573.6 623.5,570.6 625.0,567.7 626.5,564.8 628.0,561.9 629.5,559.1 631.0,556.4 632.5,553.7 634.0,551.0 635.5,548.5 637.0,546.0 638.5,543.5 640.0,541.1 641.5,538.8 643.0,536.6 644.5,534.5 646.0,532.4 647.5,530.5 649.0,528.6 650.5,526.8 652.0,525.2 653.5,523.6 655.0,522.1 656.5,520.7 658.0,519.4 659.5,518.2 661.0,517.2 662.5,516.2 664.0,515.4 665.5,514.6 667.0,514.0 668.5,513.5 670.0,513.1 671.5,512.8 673.0,512.6 674.5,512.6 676.0,512.6 677.5,512.8 679.0,513.1 680.5,513.5 682.0,514.0 683.5,514.6 685.0,515.4 686.5,516.2 688.0,517.2 689.5,518.2 691.0,519.4 692.5,520.7 694.0,522.1 695.5,523.6 697.0,525.2 698.5,526.8 700.0,528.6 701.5,530.5 703.0,532.4 704.5,534.5 706.0,536.6 707.5,538.8 709.0,541.1 710.5,543.5 712.0,546.0 713.5,548.5 715.0,551.0 716.5,553.7 718.0,556.4 719.5,559.1 721.0,561.9 722.5,564.8 724.0,567.7 725.5,570.6 727.0,573.6 728.5,576.6 730.0,579.6 731.5,582.7 733.0,585.8 734.5,588.8 736.0,591.9 737.5,595.0 739.0,598.1 740.5,601.2 742.0,604.3 743.5,607.4 745.0,610.5 746.5,613.5 748.0,616.6 749.5,619.6 751.0,622.5 752.5,625.5 754.0,628.4 755.5,631.2 757.0,634.0 758.5,636.8 760.0,639.5 761.5,642.1 763.0,644.7 764.5,647.2 766.0,649.6 767.5,652.0 769.0,654.3 770.5,656.5 772.0,658.6 773.5,660.6 775.0,662.6 776.5,664.5 778.0,666.2 779.5,667.9 781.0,669.5 782.5,671.0 784.0,672.4 785.5,673.6 787.0,674.8 788.5,675.9 790.0,676.8 791.5,677.7 793.0,678.4 794.5,679.0 796.0,679.5 797.5,679.9 799.0,680.2 800.5,680.3 802.0,680.4 803.5,680.3 805.0,680.2 806.5,679.9 808.0,679.5 809.5,678.9 811.0,678.3 812.5,677.5 814.0,676.7 815.5,675.7 817.0,674.6 818.5,673.5 820.0,672.2 821.5,670.8 823.0,669.3 824.5,667.7 826.0,666.0 827.5,664.2 829.0,662.3 830.5,660.4 832.0,658.3 833.5,656.2 835.0,654.0 836.5,651.7 838.0,649.3 839.5,646.8 841.0,644.3 842.5,641.7 844.0,639.1 845.5,636.4 847.0,633.6 848.5,630.8 850.0,628.0 851.5,625.1 853.0,622.1 854.5,619.2 856.0,616.2 857.5,613.1 859.0,610.1 860.5,607.0 862.0,603.9 863.5,600.8 865.0,597.7 866.5,594.6 868.0,591.5 869.5,588.4 871.0,585.3 872.5,582.3 874.0,579.2 875.5,576.2 877.0,573.2 878.5,570.2 880.0,567.3 881.5,564.4 883.0,561.6 884.5,558.8 886.0,556.0 887.5,553.3 889.0,550.7"/></g></svg><div style="position:absolute;right:987.5px;top:288.5px;font-size:9.4px;line-height:1;color:#444;white-space:nowrap">2500.0</div><div style="position:absolute;right:987.5px;top:323.6px;font-size:9.4px;line-height:1;color:#444;white-space:nowrap">2238.0</div><div style="position:absolute;right:987.5px;top:362.9px;font-size:9.4px;line-height:1;color:#444;white-space:nowrap">1976.0</div><div style="position:absolute;right:987.5px;top:402.2px;font-size:9.4px;line-height:1;color:#444;white-space:nowrap">1714.0</div><div style="position:absolute;right:987.5px;top:441.5px;font-size:9.4px;line-height:1;color:#444;white-space:nowrap">1452.0</div><div style="position:absolute;right:987.5px;top:480.8px;font-size:9.4px;line-height:1;color:#444;white-space:nowrap">1190.0</div><div style="position:absolute;right:987.5px;top:520.1px;font-size:9.4px;line-height:1;color:#444;white-space:nowrap">928.0</div><div style="position:absolute;right:987.5px;top:559.4px;font-size:9.4px;line-height:1;color:#444;white-space:nowrap">666.0</div><div style="position:absolute;right:987.5px;top:598.7px;font-size:9.4px;line-height:1;color:#444;white-space:nowrap">404.0</div><div style="position:absolute;right:987.5px;top:638.0px;font-size:9.4px;line-height:1;color:#444;white-space:nowrap">142.0</div><div style="position:absolute;right:987.5px;top:672.9px;font-size:9.4px;line-height:1;color:#444;white-space:nowrap">-120.0</div><div style="position:absolute;left:3px;top:302px;width:35px;height:14px;background:#800080"></div><div style="position:absolute;left:888px;top:288px;width:136px;height:33px;background:#0000ff"></div><div style="position:absolute;left:893px;top:289.2px;font-size:7.6px;line-height:1;color:#ffff00;white-space:nowrap;font-weight:bold;letter-spacing:1.5px;-webkit-text-stroke:0.2px #ffff00">Tag1</div><div style="position:absolute;left:932.8px;top:298px;font-size:16px;line-height:1;color:#ffff00;white-space:nowrap;font-weight:bold;letter-spacing:1.5px;-webkit-text-stroke:0.35px #ffff00">673.9</div><div style="position:absolute;left:888px;top:321px;width:136px;height:33px;background:#00ff00"></div><div style="position:absolute;left:893px;top:322.2px;font-size:7.6px;line-height:1;color:#ff00ff;white-space:nowrap;font-weight:bold;letter-spacing:1.5px;-webkit-text-stroke:0.2px #ff00ff">Tag2</div><div style="position:absolute;left:932.8px;top:331px;font-size:16px;line-height:1;color:#ff00ff;white-space:nowrap;font-weight:bold;letter-spacing:1.5px;-webkit-text-stroke:0.35px #ff00ff">673.9</div><div style="position:absolute;left:888px;top:354px;width:136px;height:33px;background:#00ffff"></div><div style="position:absolute;left:893px;top:355.2px;font-size:7.6px;line-height:1;color:#ff0000;white-space:nowrap;font-weight:bold;letter-spacing:1.5px;-webkit-text-stroke:0.2px #ff0000">Tag3</div><div style="position:absolute;left:932.8px;top:364px;font-size:16px;line-height:1;color:#ff0000;white-space:nowrap;font-weight:bold;letter-spacing:1.5px;-webkit-text-stroke:0.35px #ff0000">673.9</div><div style="position:absolute;left:888px;top:387px;width:136px;height:33px;background:#ff0000"></div><div style="position:absolute;left:893px;top:388.2px;font-size:7.6px;line-height:1;color:#00ffff;white-space:nowrap;font-weight:bold;letter-spacing:1.5px;-webkit-text-stroke:0.2px #00ffff">Tag4</div><div style="position:absolute;left:932.8px;top:397px;font-size:16px;line-height:1;color:#00ffff;white-space:nowrap;font-weight:bold;letter-spacing:1.5px;-webkit-text-stroke:0.35px #00ffff">673.9</div><div style="position:absolute;left:888px;top:420px;width:136px;height:33px;background:#ff00ff"></div><div style="position:absolute;left:893px;top:421.2px;font-size:7.6px;line-height:1;color:#00ff00;white-space:nowrap;font-weight:bold;letter-spacing:1.5px;-webkit-text-stroke:0.2px #00ff00">Tag5</div><div style="position:absolute;left:932.8px;top:430px;font-size:16px;line-height:1;color:#00ff00;white-space:nowrap;font-weight:bold;letter-spacing:1.5px;-webkit-text-stroke:0.35px #00ff00">673.9</div><div style="position:absolute;left:888px;top:453px;width:136px;height:33px;background:#ffff00"></div><div style="position:absolute;left:893px;top:454.2px;font-size:7.6px;line-height:1;color:#0000ff;white-space:nowrap;font-weight:bold;letter-spacing:1.5px;-webkit-text-stroke:0.2px #0000ff">Tag6</div><div style="position:absolute;left:932.8px;top:463px;font-size:16px;line-height:1;color:#0000ff;white-space:nowrap;font-weight:bold;letter-spacing:1.5px;-webkit-text-stroke:0.35px #0000ff">673.9</div><div style="position:absolute;left:888px;top:486px;width:136px;height:32px;background:#c0c0c0"></div><div style="position:absolute;left:893px;top:487.2px;font-size:7.6px;line-height:1;color:#404040;white-space:nowrap;font-weight:bold;letter-spacing:1.5px;-webkit-text-stroke:0.2px #404040">Tag7</div><div style="position:absolute;left:932.8px;top:496px;font-size:16px;line-height:1;color:#404040;white-space:nowrap;font-weight:bold;letter-spacing:1.5px;-webkit-text-stroke:0.35px #404040">673.9</div><div style="position:absolute;left:888px;top:518px;width:136px;height:33px;background:#000080"></div><div style="position:absolute;left:893px;top:519.2px;font-size:7.6px;line-height:1;color:#ffff80;white-space:nowrap;font-weight:bold;letter-spacing:1.5px;-webkit-text-stroke:0.2px #ffff80">Tag8</div><div style="position:absolute;left:932.8px;top:528px;font-size:16px;line-height:1;color:#ffff80;white-space:nowrap;font-weight:bold;letter-spacing:1.5px;-webkit-text-stroke:0.35px #ffff80">673.9</div><div style="position:absolute;left:888px;top:551px;width:136px;height:33px;background:#008000"></div><div style="position:absolute;left:893px;top:552.2px;font-size:7.6px;line-height:1;color:#ff80ff;white-space:nowrap;font-weight:bold;letter-spacing:1.5px;-webkit-text-stroke:0.2px #ff80ff">Tag9</div><div style="position:absolute;left:932.8px;top:561px;font-size:16px;line-height:1;color:#ff80ff;white-space:nowrap;font-weight:bold;letter-spacing:1.5px;-webkit-text-stroke:0.35px #ff80ff">673.9</div><div style="position:absolute;left:888px;top:584px;width:136px;height:33px;background:#008080"></div><div style="position:absolute;left:893px;top:585.2px;font-size:7.6px;line-height:1;color:#ff8080;white-space:nowrap;font-weight:bold;letter-spacing:1.5px;-webkit-text-stroke:0.2px #ff8080">Tag10</div><div style="position:absolute;left:932.8px;top:594px;font-size:16px;line-height:1;color:#ff8080;white-space:nowrap;font-weight:bold;letter-spacing:1.5px;-webkit-text-stroke:0.35px #ff8080">673.9</div><div style="position:absolute;left:888px;top:617px;width:136px;height:33px;background:#800000"></div><div style="position:absolute;left:893px;top:618.2px;font-size:7.6px;line-height:1;color:#80ffff;white-space:nowrap;font-weight:bold;letter-spacing:1.5px;-webkit-text-stroke:0.2px #80ffff">Tag11</div><div style="position:absolute;left:932.8px;top:627px;font-size:16px;line-height:1;color:#80ffff;white-space:nowrap;font-weight:bold;letter-spacing:1.5px;-webkit-text-stroke:0.35px #80ffff">673.9</div><div style="position:absolute;left:888px;top:650px;width:136px;height:32px;background:#800080"></div><div style="position:absolute;left:893px;top:651.2px;font-size:7.6px;line-height:1;color:#80ff80;white-space:nowrap;font-weight:bold;letter-spacing:1.5px;-webkit-text-stroke:0.2px #80ff80">Tag12</div><div style="position:absolute;left:932.8px;top:660px;font-size:16px;line-height:1;color:#80ff80;white-space:nowrap;font-weight:bold;letter-spacing:1.5px;-webkit-text-stroke:0.35px #80ff80">673.9</div><div style="position:absolute;left:1013px;top:314px;font-size:6.5px;line-height:1;color:#d0d080;white-space:nowrap;font-weight:bold">%</div><div style="position:absolute;left:0px;top:682px;width:1024px;height:106px;background:#f0f0f0"></div><div style="position:absolute;left:0px;top:683px;width:1024px;height:1px;background:#fff"></div><div style="position:absolute;left:1px;top:684px;width:1022px;height:79px;box-sizing:border-box;border-left:1px solid #d8d8d8;border-right:1px solid #a0a0a0"></div><div style="position:absolute;left:20px;top:687px;width:1000px;height:76px;background:#fff;box-sizing:border-box;border:1px solid #a8a8a8;border-right-color:#e0e0e0;border-bottom-color:#e0e0e0"></div><svg style="position:absolute;left:22px;top:689.0px" width="7" height="7"><rect x="0.5" y="0.5" width="6" height="6" fill="#fff" stroke="#9a9a90"/><path d="M1.5 3.2 L3 5 L5.8 1.6" fill="none" stroke="#111" stroke-width="1.3"/></svg><div style="position:absolute;left:31px;top:691.5px;width:21px;height:2px;background:#4848ff"></div><div style="position:absolute;left:55px;top:689.1px;font-size:6.6px;line-height:1;color:#1a1a1a;white-space:nowrap;">Tag1 (Rearmost)</div><svg style="position:absolute;left:22px;top:698.0px" width="7" height="7"><rect x="0.5" y="0.5" width="6" height="6" fill="#fff" stroke="#9a9a90"/><path d="M1.5 3.2 L3 5 L5.8 1.6" fill="none" stroke="#111" stroke-width="1.3"/></svg><div style="position:absolute;left:31px;top:700.5px;width:21px;height:2px;background:#48f048"></div><div style="position:absolute;left:55px;top:698.1px;font-size:6.6px;line-height:1;color:#1a1a1a;white-space:nowrap;">Tag2</div><svg style="position:absolute;left:22px;top:707.0px" width="7" height="7"><rect x="0.5" y="0.5" width="6" height="6" fill="#fff" stroke="#9a9a90"/><path d="M1.5 3.2 L3 5 L5.8 1.6" fill="none" stroke="#111" stroke-width="1.3"/></svg><div style="position:absolute;left:31px;top:709.5px;width:21px;height:2px;background:#48ffff"></div><div style="position:absolute;left:55px;top:707.1px;font-size:6.6px;line-height:1;color:#1a1a1a;white-space:nowrap;">Tag3</div><svg style="position:absolute;left:22px;top:716.0px" width="7" height="7"><rect x="0.5" y="0.5" width="6" height="6" fill="#fff" stroke="#9a9a90"/><path d="M1.5 3.2 L3 5 L5.8 1.6" fill="none" stroke="#111" stroke-width="1.3"/></svg><div style="position:absolute;left:31px;top:718.5px;width:21px;height:2px;background:#ff4848"></div><div style="position:absolute;left:55px;top:716.1px;font-size:6.6px;line-height:1;color:#1a1a1a;white-space:nowrap;">Tag4</div><svg style="position:absolute;left:22px;top:725.0px" width="7" height="7"><rect x="0.5" y="0.5" width="6" height="6" fill="#fff" stroke="#9a9a90"/><path d="M1.5 3.2 L3 5 L5.8 1.6" fill="none" stroke="#111" stroke-width="1.3"/></svg><div style="position:absolute;left:31px;top:727.5px;width:21px;height:2px;background:#ff48ff"></div><div style="position:absolute;left:55px;top:725.1px;font-size:6.6px;line-height:1;color:#1a1a1a;white-space:nowrap;">Tag5</div><svg style="position:absolute;left:22px;top:734.0px" width="7" height="7"><rect x="0.5" y="0.5" width="6" height="6" fill="#fff" stroke="#9a9a90"/><path d="M1.5 3.2 L3 5 L5.8 1.6" fill="none" stroke="#111" stroke-width="1.3"/></svg><div style="position:absolute;left:31px;top:736.5px;width:21px;height:2px;background:#ffff30"></div><div style="position:absolute;left:55px;top:734.1px;font-size:6.6px;line-height:1;color:#1a1a1a;white-space:nowrap;">Tag6</div><svg style="position:absolute;left:22px;top:743.0px" width="7" height="7"><rect x="0.5" y="0.5" width="6" height="6" fill="#fff" stroke="#9a9a90"/><path d="M1.5 3.2 L3 5 L5.8 1.6" fill="none" stroke="#111" stroke-width="1.3"/></svg><div style="position:absolute;left:31px;top:745.5px;width:21px;height:2px;background:#d0d0d0"></div><div style="position:absolute;left:55px;top:743.1px;font-size:6.6px;line-height:1;color:#1a1a1a;white-space:nowrap;">Tag7</div><svg style="position:absolute;left:22px;top:752.0px" width="7" height="7"><rect x="0.5" y="0.5" width="6" height="6" fill="#fff" stroke="#9a9a90"/><path d="M1.5 3.2 L3 5 L5.8 1.6" fill="none" stroke="#111" stroke-width="1.3"/></svg><div style="position:absolute;left:31px;top:754.5px;width:21px;height:2px;background:#3030a0"></div><div style="position:absolute;left:55px;top:752.1px;font-size:6.6px;line-height:1;color:#1a1a1a;white-space:nowrap;">Tag8</div><svg style="position:absolute;left:6px;top:700px" width="12" height="12"><path d="M6 1 L10.5 5.5 H7.6 V11 H4.4 V5.5 H1.5 Z" fill="#0a7a78"/></svg><svg style="position:absolute;left:6px;top:732px" width="12" height="12"><path d="M6 11 L10.5 6.5 H7.6 V1 H4.4 V6.5 H1.5 Z" fill="#0a7a78"/></svg><div style="position:absolute;left:1px;top:762px;width:1022px;height:1px;background:#a0a0a0"></div><div style="position:absolute;left:3px;top:763px;width:53px;height:11px;background:#f0f0f0;box-sizing:border-box;border-left:1px solid #fff;border-right:1px solid #a0a0a0"></div><div style="position:absolute;left:5.5px;top:766.3px;font-size:6.0px;line-height:1;color:#222;white-space:nowrap;letter-spacing:-0.1px">Seek by Tag Name</div><div style="position:absolute;left:57px;top:763px;width:58px;height:10px;background:#f2f2f2;box-sizing:border-box;border:1px solid #a0a0a0;border-top:1px solid #fff;border-left-color:#fff"></div><div style="position:absolute;left:59.5px;top:766.2px;font-size:5.8px;line-height:1;color:#222;white-space:nowrap;letter-spacing:-0.05px">Seek by Event/Alarm</div><div style="position:absolute;left:116px;top:763px;width:64px;height:10px;background:#f2f2f2;box-sizing:border-box;border:1px solid #a0a0a0;border-top:1px solid #fff;border-left-color:#fff"></div><div style="position:absolute;left:118.5px;top:766.2px;font-size:5.8px;line-height:1;color:#222;white-space:nowrap;letter-spacing:-0.05px">Seek by Trend Remark</div><div style="position:absolute;left:181px;top:763px;width:51px;height:10px;background:#f2f2f2;box-sizing:border-box;border:1px solid #a0a0a0;border-top:1px solid #fff;border-left-color:#fff"></div><div style="position:absolute;left:183.5px;top:766.2px;font-size:5.8px;line-height:1;color:#222;white-space:nowrap;letter-spacing:-0.05px">Seek by Signature</div><div style="position:absolute;left:233px;top:763px;width:45px;height:10px;background:#f2f2f2;box-sizing:border-box;border:1px solid #a0a0a0;border-top:1px solid #fff;border-left-color:#fff"></div><div style="position:absolute;left:235.5px;top:766.2px;font-size:5.8px;line-height:1;color:#222;white-space:nowrap;letter-spacing:-0.05px">Trend Scale List</div><div style="position:absolute;left:279px;top:763px;width:49px;height:10px;background:#f2f2f2;box-sizing:border-box;border:1px solid #a0a0a0;border-top:1px solid #fff;border-left-color:#fff"></div><div style="position:absolute;left:281.5px;top:766.2px;font-size:5.8px;line-height:1;color:#222;white-space:nowrap;letter-spacing:-0.05px">Batch Comments</div><div style="position:absolute;left:329px;top:763px;width:45px;height:10px;background:#f2f2f2;box-sizing:border-box;border:1px solid #a0a0a0;border-top:1px solid #fff;border-left-color:#fff"></div><div style="position:absolute;left:331.5px;top:766.2px;font-size:5.8px;line-height:1;color:#222;white-space:nowrap;letter-spacing:-0.05px">Decode method</div><div style="position:absolute;left:0px;top:774px;width:1024px;height:1px;background:#fff"></div><div style="position:absolute;left:0px;top:775px;width:1024px;height:2px;background:#c6c6c6"></div><div style="position:absolute;left:0px;top:777px;width:1024px;height:1px;background:#dcdcdc"></div><div style="position:absolute;left:0px;top:778px;width:1024px;height:9px;background:#f0f0f0"></div><div style="position:absolute;left:160px;top:778px;width:1px;height:9px;background:#c8c8c8"></div><div style="position:absolute;left:161px;top:778px;width:1px;height:9px;background:#fff"></div><div style="position:absolute;left:266px;top:778px;width:1px;height:9px;background:#c8c8c8"></div><div style="position:absolute;left:267px;top:778px;width:1px;height:9px;background:#fff"></div><div style="position:absolute;left:428px;top:778px;width:1px;height:9px;background:#c8c8c8"></div><div style="position:absolute;left:429px;top:778px;width:1px;height:9px;background:#fff"></div><div style="position:absolute;left:1px;top:779.5px;font-size:6.7px;line-height:1;color:#222;white-space:nowrap;">Page1</div><div style="position:absolute;left:162px;top:779.5px;font-size:6.7px;line-height:1;color:#222;white-space:nowrap;">Zoom Rate :1.0 Sec/Dot</div><div style="position:absolute;left:269px;top:779.5px;font-size:6.7px;line-height:1;color:#222;white-space:nowrap;">Index Time : 02/09/26 16:42:51:100</div><div style="position:absolute;left:0px;top:787px;width:1024px;height:1px;background:#fff"></div><div style="position:absolute;left:0px;top:789px;width:1024px;height:1px;background:#8a8a8a"></div><div style="position:absolute;left:338px;top:274px;width:686px;height:13px;background:linear-gradient(#e2e2e2,#f0f0f0)"></div><div style="position:absolute;left:0px;top:260px;width:582px;height:14px;background:linear-gradient(#f9f9f9,#f1f1f1);box-sizing:border-box;border-bottom:1px solid #d6d6d6;border-right:1px solid #e2e2e2"></div><div style="position:absolute;left:3px;top:262px;width:1px;height:10px;background:#c8c8c8"></div><div style="position:absolute;left:0px;top:274px;width:338px;height:14px;background:linear-gradient(#f9f9f9,#f1f1f1);box-sizing:border-box;border-bottom:1px solid #d6d6d6;border-right:1px solid #e2e2e2"></div><div style="position:absolute;left:3px;top:276px;width:1px;height:10px;background:#c8c8c8"></div><svg style="position:absolute;left:8px;top:262px" width="11" height="11"><path d="M1.5 0.5 H6 L8.5 3 V10.5 H1.5 Z" fill="#eef4ff" stroke="#8a9ac8"/></svg><svg style="position:absolute;left:20px;top:262px" width="11" height="11"><path d="M0.5 4 H4 L5 5 H9.5 V10 H0.5 Z" fill="#e8b830" stroke="#b08010"/><path d="M4 4 Q6 0 9 1.5" fill="none" stroke="#1a9a1a" stroke-width="2"/></svg><svg style="position:absolute;left:32px;top:262px" width="11" height="11"><rect x="0.5" y="0.5" width="6" height="7" fill="#ddd" stroke="#444"/><rect x="4" y="3" width="5" height="4" fill="#e02020"/><rect x="4" y="7" width="5" height="3" fill="#2030c0"/><rect x="4.5" y="8.5" width="1.5" height="2.5" fill="#111"/><rect x="7.5" y="8.5" width="1.5" height="2.5" fill="#111"/></svg><svg style="position:absolute;left:44px;top:262px" width="11" height="11"><rect x="3" y="0.5" width="5" height="4" fill="#8ab8f0" stroke="#4a78c0"/><path d="M0.5 5.5 H10.5 L9.5 9.5 H1.5 Z" fill="#e8e8e8" stroke="#333"/></svg><div style="position:absolute;left:58px;top:262px;width:1px;height:10px;background:#c4c4c4"></div><div style="position:absolute;left:59px;top:262px;width:1px;height:10px;background:#fff"></div><svg style="position:absolute;left:65px;top:262px" width="11" height="11"><path d="M1 1.5 H9 M1 4 H9 M1 6.5 H9 M1 9 H9 M4 1 V10" stroke="#b8b8b8" stroke-width="1"/></svg><svg style="position:absolute;left:77px;top:262px" width="11" height="11"><rect x="0.5" y="1.5" width="9" height="8" fill="#777" stroke="#333"/><rect x="1" y="2" width="8" height="2" fill="#2040b0"/><rect x="2" y="5" width="6" height="1" fill="#ddd"/><rect x="2" y="7" width="6" height="1" fill="#ddd"/></svg><svg style="position:absolute;left:90px;top:262px" width="11" height="11"><path d="M3 1 H7 L9.5 3.5 V10 H3 Z" fill="#eee" stroke="#555"/><circle cx="4" cy="6" r="3" fill="#c8c020" stroke="#6a6a20" stroke-width="0.8"/></svg><svg style="position:absolute;left:102px;top:262px" width="11" height="11"><rect x="1.5" y="0.5" width="7" height="10" rx="1" fill="#20e0e0" stroke="#333"/><rect x="3" y="2" width="4" height="7" fill="#70f8f8"/></svg><svg style="position:absolute;left:114px;top:262px" width="11" height="11"><rect x="0.5" y="0.5" width="10" height="10" fill="#80c0f0" stroke="#9cc8ee"/><rect x="2" y="2" width="7" height="3" fill="#50b050"/><rect x="2" y="6" width="7" height="3" fill="#50b050"/></svg><div style="position:absolute;left:130px;top:262px;width:1px;height:10px;background:#c4c4c4"></div><div style="position:absolute;left:131px;top:262px;width:1px;height:10px;background:#fff"></div><svg style="position:absolute;left:135px;top:262px" width="11" height="11"><path d="M3 0.5 L6 6 M8 0.5 L5 6" stroke="#224" stroke-width="1"/><circle cx="4" cy="8.5" r="2" fill="none" stroke="#2040c0" stroke-width="1.3"/><circle cx="7.5" cy="8.5" r="2" fill="none" stroke="#2040c0" stroke-width="1.3"/></svg><svg style="position:absolute;left:147px;top:262px" width="11" height="11"><rect x="1" y="3" width="8" height="5" fill="#222"/><circle cx="5" cy="5.5" r="1.5" fill="#888"/></svg><svg style="position:absolute;left:335px;top:262px" width="11" height="11"><circle cx="4" cy="4.5" r="3" fill="#fff" stroke="#333"/><path d="M6.2 6.7 L9.5 10" stroke="#222" stroke-width="1.6"/></svg><svg style="position:absolute;left:346px;top:262px" width="11" height="11"><circle cx="4.5" cy="4.5" r="3" fill="#fff" stroke="#333"/><path d="M3 4.5 H6" stroke="#d02020"/><path d="M6.7 6.7 L10 10" stroke="#222" stroke-width="1.6"/></svg><svg style="position:absolute;left:358px;top:262px" width="11" height="11"><circle cx="4.5" cy="4.5" r="3" fill="#fff" stroke="#333"/><path d="M3 3 L6 6 M6 3 L3 6" stroke="#d02020"/><path d="M6.7 6.7 L10 10" stroke="#222" stroke-width="1.6"/></svg><div style="position:absolute;left:370px;top:261px;width:63px;height:12px;background:#fff;box-sizing:border-box;border:1px solid #a0a0a0;border-right-color:#e0e0e0;border-bottom-color:#e0e0e0"></div><div style="position:absolute;left:424px;top:262px;width:8px;height:10px;background:#f0f0f0;box-sizing:border-box;border:1px solid #fff;border-right-color:#707070;border-bottom-color:#707070"></div><svg style="position:absolute;left:425px;top:265px" width="7" height="5"><path d="M0.5 1 H6 L3.25 4 Z" fill="#000"/></svg><div style="position:absolute;left:372px;top:263.5px;font-size:7.3px;line-height:1;color:#000;white-space:nowrap;font-weight:bold">Zoom Size</div><svg style="position:absolute;left:436px;top:263px" width="10" height="10"><path d="M1.5 0.5 H5.5 L8 3 V9.5 H1.5 Z" fill="#f6f6f6" stroke="#c0c0c0"/><path d="M3 5.5 L4.5 7.5 L7 3.5" fill="none" stroke="#b8b8b8"/></svg><svg style="position:absolute;left:448px;top:263px" width="11" height="11"><path d="M0.5 2.5 L4 0.5 H9 L10.5 3 V10 H0.5 Z" fill="#505050" stroke="#222"/><path d="M2 6 L4 8.5 L9.5 3" fill="none" stroke="#e81818" stroke-width="1.7"/></svg><div style="position:absolute;left:465px;top:262px;width:1px;height:11px;background:#c4c4c4"></div><div style="position:absolute;left:466px;top:262px;width:1px;height:11px;background:#fff"></div><svg style="position:absolute;left:471px;top:263px" width="10" height="10"><path d="M0.5 1.5 H4 M5.5 1.5 H9.5 M0.5 4.5 H4 M5.5 4.5 H9.5 M0.5 7.5 H4 M5.5 7.5 H9.5 M4.5 0.5 V9.5" stroke="#b4b4b4"/></svg><svg style="position:absolute;left:483px;top:263px" width="10" height="10"><rect x="0.5" y="0.5" width="9" height="9" fill="#f0f4ff" stroke="#303a80"/><path d="M2 7.5 L5 2 L8 7.5 Z" fill="#e8f0ff" stroke="#e01818" stroke-width="1.2"/><path d="M1 8.5 H9" stroke="#3050d0" stroke-width="1.4"/></svg><svg style="position:absolute;left:495px;top:263px" width="10" height="10"><rect x="0.5" y="0.5" width="9" height="9" fill="#f0f4ff" stroke="#303a80"/><path d="M2 7.5 L5 2 L8 7.5 Z" fill="#e8f0ff" stroke="#3050d0" stroke-width="1.2"/><path d="M1 8.5 H9" stroke="#e01818" stroke-width="1.4"/></svg><svg style="position:absolute;left:508px;top:263px" width="10" height="10"><path d="M0.5 5 H5 M2.5 3 L0.5 5 L2.5 7 M5.5 2.5 H9.5 V7.5 H5.5 Z" fill="#d8d8d8" stroke="#a8a8a8"/></svg><svg style="position:absolute;left:520px;top:262px" width="10" height="11"><path d="M2 1 H8 L6.5 6 H3.5 Z" fill="#d8c820" stroke="#404020" stroke-width="0.8"/><path d="M4.5 6 L4 10" stroke="#50a030" stroke-width="2"/></svg><div style="position:absolute;left:532.5px;top:263.3px;font-size:8.5px;line-height:1;color:#111;white-space:nowrap;font-weight:bold;background:#fff;padding:0 0.5px">W</div><svg style="position:absolute;left:545px;top:263px" width="9" height="10"><rect x="0.5" y="0.5" width="8" height="9" fill="#b0b0b0" stroke="#d0d0d0"/><text x="2" y="8.3" font-size="8" font-weight="bold" fill="#f0f0f0" font-family="Liberation Sans">B</text></svg><svg style="position:absolute;left:557px;top:263px" width="10" height="10"><path d="M0.5 1.5 H4 M5.5 1.5 H9.5 M0.5 4.5 H4 M5.5 4.5 H9.5 M0.5 7.5 H4 M5.5 7.5 H9.5 M4.5 0.5 V9.5" stroke="#b4b4b4"/></svg><svg style="position:absolute;left:569px;top:262px" width="10" height="11"><circle cx="5" cy="5.5" r="4.5" fill="#e01040" stroke="#9060a0" stroke-width="1"/><circle cx="5" cy="5.5" r="2.2" fill="#ff5080"/><path d="M5 2 V9 M1.5 5.5 H8.5" stroke="#a02050" stroke-width="0.6"/></svg><svg style="position:absolute;left:8px;top:276px" width="11" height="11"><rect x="1.5" y="0.5" width="8" height="10" rx="1" fill="#fff" stroke="#333"/><rect x="2" y="1" width="7" height="1.5" fill="#e03030"/><text x="2.5" y="9" font-size="6" font-style="italic" font-weight="bold" fill="#333" font-family="Liberation Sans">AI</text></svg><svg style="position:absolute;left:20px;top:276px" width="11" height="11"><path d="M4 4 L8 1.5 L10.5 4.5 V10 H4 Z" fill="#eee" stroke="#444"/><path d="M0.5 2.5 L3 0.5 L5.5 3 L3 5.5 Z" fill="#e00"/></svg><svg style="position:absolute;left:33px;top:276px" width="11" height="11"><circle cx="6.5" cy="3.5" r="2.6" fill="#fff" stroke="#222" stroke-width="1.2"/><path d="M4.8 5.3 L0.8 10" stroke="#222" stroke-width="1.6"/></svg><svg style="position:absolute;left:45px;top:276px" width="11" height="11"><path d="M0.5 0.5 H6 L9.5 4 V10.5 H0.5 Z" fill="#eee" stroke="#c8c8c8"/></svg><div style="position:absolute;left:58px;top:276px;width:1px;height:10px;background:#c4c4c4"></div><div style="position:absolute;left:59px;top:276px;width:1px;height:10px;background:#fff"></div><div style="position:absolute;left:64px;top:275px;width:70px;height:11px;background:#fff;box-sizing:border-box;border:1px solid #a0a0a0;border-right-color:#e0e0e0;border-bottom-color:#e0e0e0"></div><div style="position:absolute;left:125px;top:276px;width:8px;height:9px;background:#f0f0f0;box-sizing:border-box;border:1px solid #fff;border-right-color:#707070;border-bottom-color:#707070"></div><svg style="position:absolute;left:126px;top:279px" width="7" height="5"><path d="M0.5 1 H6 L3.25 4 Z" fill="#000"/></svg><div style="position:absolute;left:66px;top:277px;font-size:7px;line-height:1;color:#111;white-space:nowrap;font-weight:bold">1 Scale</div><div style="position:absolute;left:136px;top:275px;width:25px;height:11px;background:#fff;box-sizing:border-box;border:1px solid #a0a0a0"></div><div style="position:absolute;left:137px;top:277px;font-size:7px;line-height:1;color:#111;white-space:nowrap;font-weight:bold">Batch</div><div style="position:absolute;left:157px;top:260px;width:184px;height:164px;background:rgba(0,0,0,0.18)"></div><div style="position:absolute;left:156px;top:259px;width:183px;height:163px;background:#f0f0f0;box-sizing:border-box;border:1px solid #979797"></div><div style="position:absolute;left:188px;top:267.4px;font-size:15.6px;line-height:1;color:#1a1a1a;white-space:nowrap;-webkit-text-stroke:0.25px #1a1a1a">By Time ...</div><div style="position:absolute;left:188px;top:291.4px;font-size:15.6px;line-height:1;color:#1a1a1a;white-space:nowrap;-webkit-text-stroke:0.25px #1a1a1a">By Period ...</div><div style="position:absolute;left:188px;top:315.4px;font-size:15.6px;line-height:1;color:#1a1a1a;white-space:nowrap;-webkit-text-stroke:0.25px #1a1a1a">By Hand Write</div><div style="position:absolute;left:186px;top:350.4px;font-size:15.6px;line-height:1;color:#1a1a1a;white-space:nowrap;-webkit-text-stroke:0.25px #1a1a1a">By Tag Name</div><div style="position:absolute;left:188px;top:374.4px;font-size:15.6px;line-height:1;color:#1a1a1a;white-space:nowrap;-webkit-text-stroke:0.25px #1a1a1a">By Event/Alarm</div><div style="position:absolute;left:188px;top:398.4px;font-size:15.6px;line-height:1;color:#1a1a1a;white-space:nowrap;-webkit-text-stroke:0.25px #1a1a1a">By Remark</div><div style="position:absolute;left:161px;top:341px;width:173px;height:1px;background:#a8a8a8"></div><div style="position:absolute;left:161px;top:342px;width:173px;height:1px;background:#fff"></div><svg style="position:absolute;left:156px;top:262px" width="30" height="24"><rect x="11" y="1.5" width="7" height="2.5" fill="#1040b0"/><rect x="13" y="3.5" width="3" height="2" fill="#1040b0"/><circle cx="14.8" cy="13.2" r="8.3" fill="#1a5ad8" stroke="#0a2a90" stroke-width="1"/><circle cx="14.8" cy="13.2" r="5.8" fill="#e8f2ff"/><path d="M12 15.5 L17.5 10.5" stroke="#404050" stroke-width="1.5"/><circle cx="14.8" cy="9" r="1" fill="#f07020"/><circle cx="14.8" cy="17.4" r="1" fill="#f07020"/><circle cx="10.4" cy="13.2" r="1" fill="#f07020"/><circle cx="19.2" cy="13.2" r="1" fill="#f07020"/></svg><svg style="position:absolute;left:156px;top:286px" width="30" height="24"><circle cx="14" cy="8.8" r="5.2" fill="#fafafa" stroke="#111" stroke-width="1.2"/><path d="M14 5.6 V8.8 H16.4" fill="none" stroke="#111" stroke-width="1"/><circle cx="14" cy="8.8" r="0.9" fill="#e02020"/><path d="M5 19.3 H25 M4.9 16 V22.6 M25.1 16 V22.6 M5 19.3 L8 16.6 M5 19.3 L8 22 M25 19.3 L22 16.6 M25 19.3 L22 22" fill="none" stroke="#111" stroke-width="1.3"/></svg><svg style="position:absolute;left:156px;top:310px" width="30" height="26"><circle cx="11.7" cy="9.4" r="5.9" fill="#e0f0f4" stroke="#111" stroke-width="1.5"/><path d="M8 11 L11.7 5.5 L15.4 11 Z" fill="none" stroke="#e01010" stroke-width="1.3"/><path d="M6.2 11.2 H17.2" stroke="#e01010" stroke-width="1.8"/><path d="M15.8 13.8 L17.6 15.6" stroke="#e0e020" stroke-width="2"/><path d="M17.4 15.4 L24.5 22" stroke="#111" stroke-width="2.4"/></svg><svg style="position:absolute;left:165px;top:352px" width="11" height="11"><path d="M1 5.5 L4 8.5 L10 1.5" fill="none" stroke="#111" stroke-width="2"/></svg></body></html>
